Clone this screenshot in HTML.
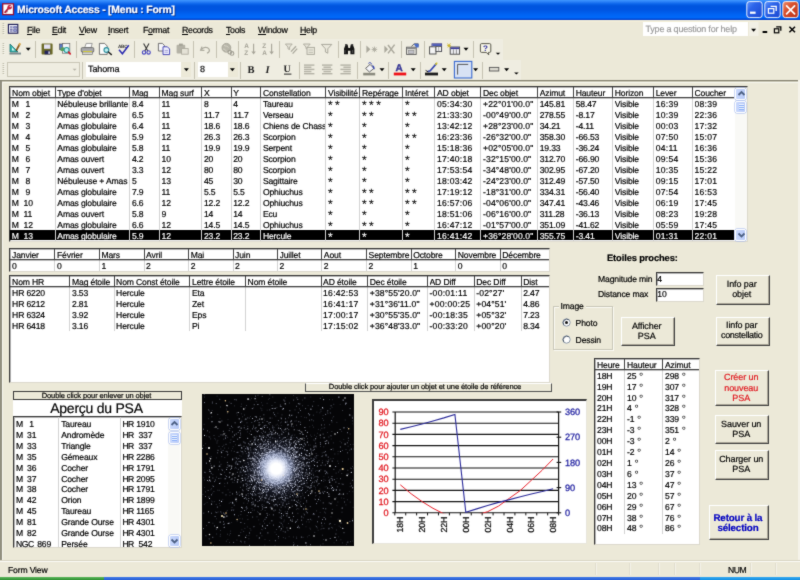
<!DOCTYPE html><html><head><meta charset="utf-8"><title>Microsoft Access</title><style>
html,body{margin:0;padding:0}
body{width:800px;height:580px;position:relative;overflow:hidden;background:#ECE9D8;
 font-family:"Liberation Sans",sans-serif;font-size:8.6px;letter-spacing:-0.15px;color:#000;text-rendering:geometricPrecision;-webkit-text-stroke:0.18px currentColor}
.a{position:absolute}
.t{position:absolute;white-space:pre;line-height:11px;height:11px;margin-top:1px}
.lb{position:absolute;background:#fff;border:1px solid #383838;border-right-color:#dcd9cc;border-bottom-color:#dcd9cc;box-sizing:border-box;overflow:hidden;box-shadow:inset 1px 1px 0 rgba(60,60,60,.38)}
.vl{position:absolute;width:1px;background:#d2d2d2}
.hv{position:absolute;width:1px;background:#404040}
.hl{position:absolute;height:1px;background:#404040;box-shadow:0 1px 0 rgba(60,60,60,.3)}
.btn{position:absolute;box-sizing:border-box;background:#ECE9D8;border:1px solid #fff;border-right-color:#404040;border-bottom-color:#404040;box-shadow:inset -1px -1px 0 #aca899;text-align:center}
.sep{position:absolute;width:1px;background:#c5c2b2}
.mn{position:absolute;top:23.5px;height:12px;line-height:12px;font-size:8.8px;letter-spacing:-0.3px;white-space:pre}
.mn u{text-decoration:underline}
</style></head><body><svg width="0" height="0" style="position:absolute"><filter id="soft" x="0" y="0" width="100%" height="100%" color-interpolation-filters="sRGB"><feConvolveMatrix order="3" kernelMatrix="0.02 0.08 0.02 0.08 0.6 0.08 0.02 0.08 0.02" edgeMode="duplicate" preserveAlpha="true"/></filter></svg><div id="w" style="position:absolute;left:0;top:0;width:800px;height:580px;overflow:hidden;background:#ECE9D8;will-change:transform;filter:url(#soft)">
<div class="a" style="left:0;top:0;width:800px;height:20px;background:linear-gradient(#3f97ff 0%,#2c82f8 8%,#0a63ea 20%,#0054de 30%,#0055e2 50%,#0063f2 72%,#0069fa 87%,#0058e6 93%,#0032c2 100%)"></div>
<div class="a" style="left:0px;top:20px;width:800px;height:1px;background:#f7f0d6;"></div>
<div class="a" style="left:0px;top:21px;width:800px;height:1px;background:#f1ecd8;"></div>
<div class="t" style="left:17px;top:3px;color:#fff;font-weight:bold;font-size:10.4px;line-height:14px;height:14px;letter-spacing:-0.2px;text-shadow:1px 1px 0 #0a2a80">Microsoft Access - [Menu : Form]</div>
<!--TITLEICONS-->
<div class="mn" style="left:27px"><u>F</u>ile</div>
<div class="mn" style="left:52px"><u>E</u>dit</div>
<div class="mn" style="left:79px"><u>V</u>iew</div>
<div class="mn" style="left:108px"><u>I</u>nsert</div>
<div class="mn" style="left:143px">F<u>o</u>rmat</div>
<div class="mn" style="left:182px"><u>R</u>ecords</div>
<div class="mn" style="left:226px"><u>T</u>ools</div>
<div class="mn" style="left:258px"><u>W</u>indow</div>
<div class="mn" style="left:300px"><u>H</u>elp</div>
<div class="a" style="left:643px;top:22px;width:105px;height:14px;background:#fff"></div>
<div class="t" style="left:645.5px;top:23px;color:#999;font-size:9px;line-height:11px;letter-spacing:-0.2px">Type a question for help</div>
<!--MENUICONS-->
<div class="a" style="left:0px;top:39px;width:503px;height:21px;background:#efede1;"></div>
<div class="a" style="left:0px;top:60px;width:521px;height:20px;background:#efede1;"></div>
<div class="sep" style="left:35px;top:41px;height:17px"></div>
<div class="sep" style="left:76px;top:41px;height:17px"></div>
<div class="sep" style="left:134px;top:41px;height:17px"></div>
<div class="sep" style="left:193px;top:41px;height:17px"></div>
<div class="sep" style="left:216px;top:41px;height:17px"></div>
<div class="sep" style="left:238px;top:41px;height:17px"></div>
<div class="sep" style="left:279px;top:41px;height:17px"></div>
<div class="sep" style="left:338px;top:41px;height:17px"></div>
<div class="sep" style="left:360px;top:41px;height:17px"></div>
<div class="sep" style="left:401px;top:41px;height:17px"></div>
<div class="sep" style="left:424px;top:41px;height:17px"></div>
<div class="sep" style="left:473px;top:41px;height:17px"></div>
<div class="sep" style="left:82px;top:62px;height:17px"></div>
<div class="sep" style="left:194px;top:62px;height:17px"></div>
<div class="sep" style="left:240px;top:62px;height:17px"></div>
<div class="sep" style="left:299px;top:62px;height:17px"></div>
<div class="sep" style="left:357px;top:62px;height:17px"></div>
<div class="sep" style="left:388px;top:62px;height:17px"></div>
<div class="sep" style="left:420px;top:62px;height:17px"></div>
<div class="sep" style="left:482px;top:62px;height:17px"></div>
<div class="a" style="left:7px;top:62px;width:73px;height:15px;box-sizing:border-box;border:1px solid #c9c6b6"></div>
<div class="a" style="left:86px;top:62px;width:105px;height:15px;background:#fff"></div>
<div class="a" style="left:181px;top:62px;width:10px;height:15px;background:#ECE9D8;"></div>
<div class="t" style="left:88px;top:63px;font-size:9px;letter-spacing:-0.1px">Tahoma</div>
<div class="a" style="left:198px;top:62px;width:40px;height:15px;background:#fff"></div>
<div class="a" style="left:228px;top:62px;width:10px;height:15px;background:#ECE9D8;"></div>
<div class="t" style="left:200px;top:63px;font-size:9px">8</div>
<svg class="a" style="left:0;top:0" width="800" height="82" viewBox="0 0 800 82" font-family="Liberation Sans"><rect x="2.7" y="3.8" width="10.8" height="10.8" fill="#fff" stroke="#9c1030" stroke-width="1.3"/><path d="M5 12.2L8.2 8.6" stroke="#b01838" stroke-width="1.7" stroke-linecap="round"/><circle cx="9.6" cy="7.2" r="2.2" fill="#c8203c"/><circle cx="10.2" cy="6.6" r="0.7" fill="#fff"/><path d="M5.2 12.6l1.4 0.2M6.4 11.2l1.3 0.6" stroke="#8a1028" stroke-width="0.8"/><defs><linearGradient id="gb" x1="0" y1="0" x2="1" y2="1"><stop offset="0" stop-color="#5f94fc"/><stop offset="0.35" stop-color="#2c64ea"/><stop offset="1" stop-color="#1c48d0"/></linearGradient><linearGradient id="gr" x1="0" y1="0" x2="1" y2="1"><stop offset="0" stop-color="#ee8c6c"/><stop offset="0.4" stop-color="#d8502c"/><stop offset="1" stop-color="#b83018"/></linearGradient></defs><rect x="746.8" y="1.6" width="15.4" height="16" rx="2.6" fill="url(#gb)" stroke="#fff" stroke-width="0.9"/><rect x="764.8" y="1.6" width="15.4" height="16" rx="2.6" fill="url(#gb)" stroke="#fff" stroke-width="0.9"/><rect x="782.8" y="1.6" width="15.4" height="16" rx="2.6" fill="url(#gr)" stroke="#fff" stroke-width="0.9"/><rect x="750" y="11.6" width="5.6" height="2.2" fill="#fff"/><path d="M770.6 6.4h5.6v4.6" fill="none" stroke="#fff" stroke-width="1.3"/><rect x="768.4" y="8.6" width="5.4" height="4.6" fill="none" stroke="#fff" stroke-width="1.2"/><path d="M786.6 5.8l8 8M794.6 5.8l-8 8" stroke="#fff" stroke-width="1.7" stroke-linecap="round"/><rect x="2.6" y="23" width="1.6" height="1" fill="#b9b6a4"/><rect x="3.5" y="23.8" width="1.2" height="0.8" fill="#fbfaf5"/><rect x="2.6" y="25" width="1.6" height="1" fill="#b9b6a4"/><rect x="3.5" y="25.8" width="1.2" height="0.8" fill="#fbfaf5"/><rect x="2.6" y="27" width="1.6" height="1" fill="#b9b6a4"/><rect x="3.5" y="27.8" width="1.2" height="0.8" fill="#fbfaf5"/><rect x="2.6" y="29" width="1.6" height="1" fill="#b9b6a4"/><rect x="3.5" y="29.8" width="1.2" height="0.8" fill="#fbfaf5"/><rect x="2.6" y="31" width="1.6" height="1" fill="#b9b6a4"/><rect x="3.5" y="31.8" width="1.2" height="0.8" fill="#fbfaf5"/><rect x="2.6" y="33" width="1.6" height="1" fill="#b9b6a4"/><rect x="3.5" y="33.8" width="1.2" height="0.8" fill="#fbfaf5"/><rect x="8.4" y="24.4" width="9.4" height="8.8" fill="#eef0fa" stroke="#161650" stroke-width="1.1"/><path d="M10 27h2.6M10 29.2h2.6M10 31h2.6" stroke="#30307a" stroke-width="0.9"/><path d="M13.6 26.6h3v1.6h-3zM13.6 29.4h3v2h-3z" fill="#9aa4dc" stroke="#30307a" stroke-width="0.5"/><rect x="749" y="22" width="9.5" height="14" fill="#f2f0e6"/><path d="M751.1 28.75h5l-2.5 3z" fill="#000"/><rect x="762.6" y="31" width="4.6" height="2" fill="#000"/><path d="M776.2 26.8h4.6v4" fill="none" stroke="#000" stroke-width="1.3"/><rect x="774.4" y="28.8" width="4.4" height="4" fill="none" stroke="#000" stroke-width="1.2"/><path d="M789.4 26.8l5.6 5.4M795 26.8l-5.6 5.4" stroke="#000" stroke-width="1.5"/><rect x="2.6" y="43" width="1.6" height="1" fill="#b9b6a4"/><rect x="3.5" y="43.8" width="1.2" height="0.8" fill="#fbfaf5"/><rect x="2.6" y="45" width="1.6" height="1" fill="#b9b6a4"/><rect x="3.5" y="45.8" width="1.2" height="0.8" fill="#fbfaf5"/><rect x="2.6" y="47" width="1.6" height="1" fill="#b9b6a4"/><rect x="3.5" y="47.8" width="1.2" height="0.8" fill="#fbfaf5"/><rect x="2.6" y="49" width="1.6" height="1" fill="#b9b6a4"/><rect x="3.5" y="49.8" width="1.2" height="0.8" fill="#fbfaf5"/><rect x="2.6" y="51" width="1.6" height="1" fill="#b9b6a4"/><rect x="3.5" y="51.8" width="1.2" height="0.8" fill="#fbfaf5"/><rect x="2.6" y="53" width="1.6" height="1" fill="#b9b6a4"/><rect x="3.5" y="53.8" width="1.2" height="0.8" fill="#fbfaf5"/><path d="M10 52V44l8 8z" fill="#36b8b0" stroke="#1a6c70" stroke-width="0.8"/><path d="M12 50.4v-2.8l2.8 2.8z" fill="#e8f8f8"/><rect x="9.4" y="52.6" width="11.6" height="1.9" fill="#7d8a8c"/><path d="M16.2 50.6l3.6-6.6" stroke="#8a5a20" stroke-width="1.8"/><path d="M19 45.4l1.2-2.2" stroke="#d8a848" stroke-width="1.8"/><path d="M15.8 51.6l0.6-1.6 0.9 0.6z" fill="#222"/><path d="M25.7 47.75h5l-2.5 3z" fill="#000"/><rect x="41.6" y="43.6" width="11" height="11" rx="0.8" fill="#6c6a28"/><rect x="44" y="44.4" width="6.4" height="4.4" fill="#e4e2f4"/><rect x="44.6" y="50.6" width="5.6" height="3.8" fill="#24245c"/><rect x="48.4" y="51.4" width="1.4" height="2.4" fill="#e8e8f4"/><rect x="59.6" y="44" width="5" height="5.6" fill="#5878c8" stroke="#444" stroke-width="0.6"/><rect x="62.6" y="43.6" width="7.2" height="9.6" fill="#f4f4f8" stroke="#666" stroke-width="0.7"/><rect x="60.6" y="47.4" width="3.6" height="3.6" fill="#5aa05a"/><circle cx="66.6" cy="50" r="2.5" fill="#b8f0f0" stroke="#2a9c9c" stroke-width="1.1"/><path d="M68.6 52.2l1.6 1.6" stroke="#d02030" stroke-width="1.8" stroke-linecap="round"/><path d="M84.6 47.8l1.6-4.4h6l-1.2 4.4z" fill="#fbfbfb" stroke="#777" stroke-width="0.7"/><rect x="81.2" y="47.6" width="12.6" height="4.6" rx="1.2" fill="#a8a8ac" stroke="#555" stroke-width="0.7"/><rect x="82.6" y="52" width="9.8" height="2.6" fill="#d8d8d0" stroke="#666" stroke-width="0.6"/><rect x="83" y="51" width="9" height="0.9" fill="#d8d030"/><path d="M99.4 43.4h5.2l2.6 2.6v8.4h-7.8z" fill="#fcfcfc" stroke="#555" stroke-width="0.8"/><circle cx="106.4" cy="50" r="2.4" fill="#c0f0f0" stroke="#2a8c9c" stroke-width="1.1"/><path d="M108.4 52l3 2.6" stroke="#222" stroke-width="1.4" stroke-linecap="round"/><text x="118" y="47.6" font-size="4.6" font-weight="bold" fill="#333" letter-spacing="-0.2">ABC</text><path d="M119 49.8l3.4 4 6.4-8.6" fill="none" stroke="#2a2ab0" stroke-width="1.5"/><path d="M143.6 43.6l4.2 7.4M149 43.6l-4.2 7.4" stroke="#333" stroke-width="1.1"/><circle cx="144" cy="52.4" r="1.7" fill="none" stroke="#4444c0" stroke-width="1.1"/><circle cx="148.6" cy="52.4" r="1.7" fill="none" stroke="#4444c0" stroke-width="1.1"/><path d="M158.4 43.4h4l2 2v5.6h-6z" fill="#f6f6fa" stroke="#555" stroke-width="0.8"/><path d="M163 46.8h4.4l2.2 2.2v5.6H163z" fill="#f0f0ff" stroke="#3a3ab0" stroke-width="0.9"/><path d="M164.6 50.4h3.4M164.6 52.2h3.4" stroke="#8888c8" stroke-width="0.7"/><rect x="176.6" y="44.8" width="8.6" height="8.8" rx="1" fill="#b4b2a6"/><rect x="179" y="43.6" width="3.8" height="2.2" fill="#a4a296"/><rect x="181.6" y="48.6" width="6.6" height="5.6" fill="#e4e2d6" stroke="#a8a69a" stroke-width="0.8"/><path d="M202 46.6l-1.4 3.6 3.8 0.2" fill="none" stroke="#aaa89c" stroke-width="1.2"/><path d="M201.4 49.6c1.8-2.6 5.8-3.2 7.6-0.6 1 1.6 0 3.6-2 4.2" fill="none" stroke="#aaa89c" stroke-width="1.3"/><circle cx="226.4" cy="47.8" r="4.4" fill="#b8b6aa" stroke="#a09e92" stroke-width="0.8"/><path d="M224 45.4c1.6 1 3.6 0.4 4.4 2.2M223 49c1.8-0.2 3 1.2 3.2 2.6" stroke="#d8d6ca" stroke-width="0.9" fill="none"/><circle cx="229.8" cy="52.2" r="1.8" fill="none" stroke="#a09e92" stroke-width="1.1"/><circle cx="232" cy="53.4" r="1.8" fill="none" stroke="#a09e92" stroke-width="1.1"/><text x="244.2" y="48.4" font-size="6.4" font-weight="bold" fill="#a6a498">A</text><text x="244.2" y="54.6" font-size="6.4" font-weight="bold" fill="#a6a498">Z</text><path d="M253.6 43.8v9" stroke="#a6a498" stroke-width="1.1"/><path d="M251.39999999999998 51.4h4.4l-2.2 3.2z" fill="#a6a498"/><text x="262.2" y="48.4" font-size="6.4" font-weight="bold" fill="#a6a498">Z</text><text x="262.2" y="54.6" font-size="6.4" font-weight="bold" fill="#a6a498">A</text><path d="M271.59999999999997 43.8v9" stroke="#a6a498" stroke-width="1.1"/><path d="M269.4 51.4h4.4l-2.2 3.2z" fill="#a6a498"/><path d="M285.4 44h6.8l-2.6 3v2.6l-1.6-0.8v-1.8z" fill="#e6e4d8" stroke="#aaa89c" stroke-width="0.9"/><path d="M291 51.6l5-5.4M292.6 53.6l4.6-5" stroke="#aaa89c" stroke-width="1.3"/><path d="M303.4 44h6.8l-2.6 3v2.2l-1.6-0.6v-1.6z" fill="#e6e4d8" stroke="#aaa89c" stroke-width="0.9"/><rect x="307" y="47.4" width="7.4" height="7" fill="#e8e6da" stroke="#aaa89c" stroke-width="0.9"/><path d="M308.6 50h4.4M308.6 52.4h4.4" stroke="#b8b6aa" stroke-width="0.8"/><path d="M321.4 44.4h10.4l-4 4.4v4.4l-2.4-1.2v-3.2z" fill="#eae8dc" stroke="#aaa89c" stroke-width="1"/><path d="M344 54.2v-5.4l1.6-4.2h2l0.8 3.4h1.6l0.8-3.4h2l1.6 4.2v5.4h-4v-3.4h-2.4v3.4z" fill="#161616"/><rect x="345.2" y="44" width="1.8" height="1.4" fill="#444"/><rect x="351.4" y="44" width="1.8" height="1.4" fill="#444"/><path d="M345 50v3M352.6 50v3" stroke="#5a5a5a" stroke-width="0.8"/><path d="M366.4 45.4v7.6l4-3.8z" fill="#aaa89c"/><path d="M374.4 46.6v5.6M371.6 49.4h5.6M372.4 47.4l4 4M376.4 47.4l-4 4" stroke="#aaa89c" stroke-width="0.9"/><path d="M384.4 45.4v7.6l3.6-3.8z" fill="#aaa89c"/><path d="M388 45l6.4 8.4M394.6 44.6l-6.6 8.8" stroke="#aaa89c" stroke-width="1.5"/><rect x="406.6" y="47.2" width="9.6" height="7.2" fill="#ecebe4" stroke="#555" stroke-width="0.9"/><rect x="407.2" y="47.6" width="8.6" height="1.6" fill="#888"/><rect x="408.4" y="50.4" width="5.6" height="3" fill="#c0c0c8" stroke="#777" stroke-width="0.5"/><path d="M411.4 46.4l3-2.6h3.8v2.8" fill="none" stroke="#555" stroke-width="0.9"/><path d="M413.6 43.8h5v3.6h-2.4z" fill="#4a6cc8"/><rect x="432" y="43.8" width="9.6" height="7.4" fill="#f4f4fa" stroke="#3a3a8a" stroke-width="0.9"/><rect x="432.4" y="44.2" width="8.8" height="1.7" fill="#3a4ab0"/><rect x="429.6" y="46.8" width="6.4" height="7.2" fill="#f4f4f4" stroke="#444" stroke-width="0.9"/><rect x="436" y="46.6" width="5.4" height="5" fill="#fafafa" stroke="#444" stroke-width="0.8"/><path d="M438.7 46.6v5" stroke="#777" stroke-width="0.6"/><rect x="450.2" y="47" width="9.4" height="7.2" fill="#f0f0f4" stroke="#444" stroke-width="0.9"/><rect x="450.6" y="47.4" width="8.6" height="1.7" fill="#3a3a9a"/><path d="M453.4 49.4v4.6M456.4 49.4v4.6" stroke="#666" stroke-width="0.7"/><path d="M447.6 43.6l2.4 3.8M450.4 43.4l-2.6 4M447.2 45.6h3.6" stroke="#c8b020" stroke-width="0.9"/><path d="M463.5 47.75h5l-2.5 3z" fill="#000"/><path d="M481.6 43.6h8a1.2 1.2 0 0 1 1.2 1.2v6.4a1.2 1.2 0 0 1-1.2 1.2h-1.2l0.4 2.4-2.6-2.4h-4.6a1.2 1.2 0 0 1-1.2-1.2v-6.4a1.2 1.2 0 0 1 1.2-1.2z" fill="#f6f4e6" stroke="#4a483c" stroke-width="0.9"/><text x="483" y="51.4" font-size="8" font-weight="bold" fill="#3030a0">?</text><path d="M495.7 52.65h4.6l-2.3 2.0z" fill="#000"/><rect x="2.6" y="63" width="1.6" height="1" fill="#b9b6a4"/><rect x="3.5" y="63.8" width="1.2" height="0.8" fill="#fbfaf5"/><rect x="2.6" y="65" width="1.6" height="1" fill="#b9b6a4"/><rect x="3.5" y="65.8" width="1.2" height="0.8" fill="#fbfaf5"/><rect x="2.6" y="67" width="1.6" height="1" fill="#b9b6a4"/><rect x="3.5" y="67.8" width="1.2" height="0.8" fill="#fbfaf5"/><rect x="2.6" y="69" width="1.6" height="1" fill="#b9b6a4"/><rect x="3.5" y="69.8" width="1.2" height="0.8" fill="#fbfaf5"/><rect x="2.6" y="71" width="1.6" height="1" fill="#b9b6a4"/><rect x="3.5" y="71.8" width="1.2" height="0.8" fill="#fbfaf5"/><rect x="2.6" y="73" width="1.6" height="1" fill="#b9b6a4"/><rect x="3.5" y="73.8" width="1.2" height="0.8" fill="#fbfaf5"/><path d="M72.6 68.65h4l-2.0 2z" fill="#b4b2a6"/><path d="M183.9 68.15h5l-2.5 3z" fill="#000"/><path d="M229.9 68.15h5l-2.5 3z" fill="#000"/><text x="247.6" y="73" font-size="10.5" font-weight="bold" font-family="Liberation Serif" fill="#222">B</text><text x="265.6" y="73" font-size="10.5" font-weight="bold" font-style="italic" font-family="Liberation Serif" fill="#222">I</text><text x="283.6" y="72.4" font-size="10" font-weight="bold" font-family="Liberation Serif" fill="#222">U</text><rect x="284" y="73.6" width="7.4" height="1" fill="#222"/><rect x="304" y="64.4" width="10.4" height="1.4" fill="#b4b2a6"/><rect x="304" y="66.55000000000001" width="7.4" height="1.4" fill="#b4b2a6"/><rect x="304" y="68.7" width="10.4" height="1.4" fill="#b4b2a6"/><rect x="304" y="70.85000000000001" width="7.4" height="1.4" fill="#b4b2a6"/><rect x="304" y="73.0" width="10.4" height="1.4" fill="#b4b2a6"/><rect x="322.0" y="64.4" width="10.4" height="1.4" fill="#b4b2a6"/><rect x="323.5" y="66.55000000000001" width="7.4" height="1.4" fill="#b4b2a6"/><rect x="322.0" y="68.7" width="10.4" height="1.4" fill="#b4b2a6"/><rect x="323.5" y="70.85000000000001" width="7.4" height="1.4" fill="#b4b2a6"/><rect x="322.0" y="73.0" width="10.4" height="1.4" fill="#b4b2a6"/><rect x="340.4" y="64.4" width="10.4" height="1.4" fill="#b4b2a6"/><rect x="343.4" y="66.55000000000001" width="7.4" height="1.4" fill="#b4b2a6"/><rect x="340.4" y="68.7" width="10.4" height="1.4" fill="#b4b2a6"/><rect x="343.4" y="70.85000000000001" width="7.4" height="1.4" fill="#b4b2a6"/><rect x="340.4" y="73.0" width="10.4" height="1.4" fill="#b4b2a6"/><path d="M365.6 68.4l4.4-4 4 4-4.6 3.6z" fill="#f4f4f8" stroke="#444" stroke-width="0.8"/><path d="M368.4 63.4c1-1.4 3-0.8 3.2 1" fill="none" stroke="#3a4ab0" stroke-width="1"/><path d="M372 65c1.6 0.2 3 2 2.6 4.400l-1.400-0.600z" fill="#3a4ab0"/><rect x="363.200" y="72.8" width="12" height="2.6" fill="#8a8a7e"/><path d="M379.5 68.15h5l-2.5 3z" fill="#000"/><text x="395.4" y="71.4" font-size="10" font-weight="bold" fill="#3a3aa0" stroke="#22227a" stroke-width="0.3">A</text><rect x="393.800" y="72.6" width="12.4" height="2.8" fill="#f01018"/><path d="M410.7 68.15h5l-2.5 3z" fill="#000"/><path d="M427.6 71.600l2.6-0.800 6.400-7.400" fill="none" stroke="#3a4ab0" stroke-width="1.700"/><path d="M435.400 64.800l1.800-2.200" stroke="#d8c820" stroke-width="1.5"/><path d="M425.6 70.4l2.4 1.400" stroke="#222" stroke-width="1"/><rect x="425" y="72.6" width="13" height="2.8" fill="#1c1c1c"/><path d="M441.7 68.15h5l-2.5 3z" fill="#000"/><rect x="454.400" y="61.4" width="17.400" height="16.600" fill="#d8e2f4" stroke="#3a6ad0" stroke-width="1.100"/><path d="M457.600 74.600v-10.200h10.600" fill="none" stroke="#555" stroke-width="1"/><path d="M473.1 68.15h5l-2.5 3z" fill="#000"/><rect x="489.400" y="67.400" width="9.400" height="3.600" fill="#dcdad0" stroke="#555" stroke-width="0.900"/><path d="M504.1 68.15h5l-2.5 3z" fill="#000"/><path d="M514.1 72.45h4.6l-2.3 2.0z" fill="#000"/></svg>
<div class="a" style="left:0px;top:80px;width:799px;height:1px;background:#858371;"></div>
<div class="a" style="left:0px;top:81px;width:799px;height:1px;background:#c9c6b4;"></div>
<div class="a" style="left:2px;top:82px;width:797px;height:1px;background:#f7f6ee;"></div>
<div class="a" style="left:0px;top:81px;width:2px;height:479px;background:#929080;"></div>
<div class="a" style="left:2px;top:82px;width:1px;height:478px;background:#f8f7f0;"></div>
<div class="a" style="left:798px;top:80px;width:2px;height:481px;background:#f5f3ea;"></div>
<div class="lb" style="left:9px;top:86px;width:739px;height:156px"></div>
<div class="a" style="left:10px;top:229.7px;width:723.8px;height:10.3px;background:#000;"></div>
<div class="hv" style="left:54.7px;top:87px;height:10px"></div>
<div class="vl" style="left:54.7px;top:98px;height:143px"></div>
<div class="hv" style="left:129.3px;top:87px;height:10px"></div>
<div class="vl" style="left:129.3px;top:98px;height:143px"></div>
<div class="hv" style="left:159px;top:87px;height:10px"></div>
<div class="vl" style="left:159px;top:98px;height:143px"></div>
<div class="hv" style="left:201.3px;top:87px;height:10px"></div>
<div class="vl" style="left:201.3px;top:98px;height:143px"></div>
<div class="hv" style="left:230.6px;top:87px;height:10px"></div>
<div class="vl" style="left:230.6px;top:98px;height:143px"></div>
<div class="hv" style="left:260.3px;top:87px;height:10px"></div>
<div class="vl" style="left:260.3px;top:98px;height:143px"></div>
<div class="hv" style="left:325.4px;top:87px;height:10px"></div>
<div class="vl" style="left:325.4px;top:98px;height:143px"></div>
<div class="hv" style="left:359.4px;top:87px;height:10px"></div>
<div class="vl" style="left:359.4px;top:98px;height:143px"></div>
<div class="hv" style="left:402.3px;top:87px;height:10px"></div>
<div class="vl" style="left:402.3px;top:98px;height:143px"></div>
<div class="hv" style="left:434.4px;top:87px;height:10px"></div>
<div class="vl" style="left:434.4px;top:98px;height:143px"></div>
<div class="hv" style="left:480.4px;top:87px;height:10px"></div>
<div class="vl" style="left:480.4px;top:98px;height:143px"></div>
<div class="hv" style="left:537.1px;top:87px;height:10px"></div>
<div class="vl" style="left:537.1px;top:98px;height:143px"></div>
<div class="hv" style="left:573.1px;top:87px;height:10px"></div>
<div class="vl" style="left:573.1px;top:98px;height:143px"></div>
<div class="hv" style="left:612.2px;top:87px;height:10px"></div>
<div class="vl" style="left:612.2px;top:98px;height:143px"></div>
<div class="hv" style="left:653.1px;top:87px;height:10px"></div>
<div class="vl" style="left:653.1px;top:98px;height:143px"></div>
<div class="hv" style="left:691.9px;top:87px;height:10px"></div>
<div class="vl" style="left:691.9px;top:98px;height:143px"></div>
<div class="hl" style="left:10px;top:97px;width:724px"></div>
<div class="t" style="left:12.1px;top:87px;width:42.6px;overflow:hidden">Nom objet</div>
<div class="t" style="left:57.3px;top:87px;width:72.0px;overflow:hidden">Type d'objet</div>
<div class="t" style="left:131.9px;top:87px;width:27.1px;overflow:hidden">Mag</div>
<div class="t" style="left:161.6px;top:87px;width:39.7px;overflow:hidden">Mag surf</div>
<div class="t" style="left:203.9px;top:87px;width:26.7px;overflow:hidden">X</div>
<div class="t" style="left:233.2px;top:87px;width:27.1px;overflow:hidden">Y</div>
<div class="t" style="left:262.9px;top:87px;width:62.5px;overflow:hidden">Constellation</div>
<div class="t" style="left:328.0px;top:87px;width:31.4px;overflow:hidden">Visibilité</div>
<div class="t" style="left:362.0px;top:87px;width:40.3px;overflow:hidden">Repérage</div>
<div class="t" style="left:404.9px;top:87px;width:29.5px;overflow:hidden">Intéret</div>
<div class="t" style="left:437.0px;top:87px;width:43.4px;overflow:hidden">AD objet</div>
<div class="t" style="left:483.0px;top:87px;width:54.1px;overflow:hidden">Dec objet</div>
<div class="t" style="left:539.7px;top:87px;width:33.4px;overflow:hidden">Azimut</div>
<div class="t" style="left:575.7px;top:87px;width:36.5px;overflow:hidden">Hauteur</div>
<div class="t" style="left:614.8px;top:87px;width:38.3px;overflow:hidden">Horizon</div>
<div class="t" style="left:655.7px;top:87px;width:36.2px;overflow:hidden">Lever</div>
<div class="t" style="left:694.5px;top:87px;width:39.9px;overflow:hidden">Coucher</div>
<div class="t" style="left:11.7px;top:98px;letter-spacing:-1px">M</div>
<div class="t" style="left:25.6px;top:98px;">1</div>
<div class="t" style="left:57.3px;top:98px;width:72.0px;overflow:hidden">Nébuleuse brillante</div>
<div class="t" style="left:131.9px;top:98px;width:27.1px;overflow:hidden">8.4</div>
<div class="t" style="left:161.6px;top:98px;width:39.7px;overflow:hidden">11</div>
<div class="t" style="left:203.9px;top:98px;width:26.7px;overflow:hidden">8</div>
<div class="t" style="left:233.2px;top:98px;width:27.1px;overflow:hidden">4</div>
<div class="t" style="left:262.9px;top:98px;width:62.5px;overflow:hidden">Taureau</div>
<div class="t" style="left:328.0px;top:98px;width:31.4px;overflow:hidden"><span style="font-size:12px;letter-spacing:2.45px;-webkit-text-stroke:0.1px currentColor;position:relative;top:0.6px">**</span></div>
<div class="t" style="left:362.0px;top:98px;width:40.3px;overflow:hidden"><span style="font-size:12px;letter-spacing:2.45px;-webkit-text-stroke:0.1px currentColor;position:relative;top:0.6px">***</span></div>
<div class="t" style="left:404.9px;top:98px;width:29.5px;overflow:hidden"><span style="font-size:12px;letter-spacing:2.45px;-webkit-text-stroke:0.1px currentColor;position:relative;top:0.6px">*</span></div>
<div class="t" style="left:437.0px;top:98px;letter-spacing:0.25px;width:43.4px;overflow:hidden">05:34:30</div>
<div class="t" style="left:483.0px;top:98px;letter-spacing:0.12px;width:54.1px;overflow:hidden">+22°01'00.0"</div>
<div class="t" style="left:539.7px;top:98px;width:33.4px;overflow:hidden">145.81</div>
<div class="t" style="left:575.7px;top:98px;width:36.5px;overflow:hidden">58.47</div>
<div class="t" style="left:614.8px;top:98px;width:38.3px;overflow:hidden">Visible</div>
<div class="t" style="left:655.7px;top:98px;letter-spacing:0.25px;width:36.2px;overflow:hidden">16:39</div>
<div class="t" style="left:694.5px;top:98px;letter-spacing:0.25px;width:39.9px;overflow:hidden">08:39</div>
<div class="t" style="left:11.7px;top:109px;letter-spacing:-1px">M</div>
<div class="t" style="left:25.6px;top:109px;">2</div>
<div class="t" style="left:57.3px;top:109px;width:72.0px;overflow:hidden">Amas globulaire</div>
<div class="t" style="left:131.9px;top:109px;width:27.1px;overflow:hidden">6.5</div>
<div class="t" style="left:161.6px;top:109px;width:39.7px;overflow:hidden">11</div>
<div class="t" style="left:203.9px;top:109px;width:26.7px;overflow:hidden">11.7</div>
<div class="t" style="left:233.2px;top:109px;width:27.1px;overflow:hidden">11.7</div>
<div class="t" style="left:262.9px;top:109px;width:62.5px;overflow:hidden">Verseau</div>
<div class="t" style="left:328.0px;top:109px;width:31.4px;overflow:hidden"><span style="font-size:12px;letter-spacing:2.45px;-webkit-text-stroke:0.1px currentColor;position:relative;top:0.6px">*</span></div>
<div class="t" style="left:362.0px;top:109px;width:40.3px;overflow:hidden"><span style="font-size:12px;letter-spacing:2.45px;-webkit-text-stroke:0.1px currentColor;position:relative;top:0.6px">**</span></div>
<div class="t" style="left:404.9px;top:109px;width:29.5px;overflow:hidden"><span style="font-size:12px;letter-spacing:2.45px;-webkit-text-stroke:0.1px currentColor;position:relative;top:0.6px">**</span></div>
<div class="t" style="left:437.0px;top:109px;letter-spacing:0.25px;width:43.4px;overflow:hidden">21:33:30</div>
<div class="t" style="left:483.0px;top:109px;letter-spacing:0.12px;width:54.1px;overflow:hidden">-00°49'00.0"</div>
<div class="t" style="left:539.7px;top:109px;width:33.4px;overflow:hidden">278.55</div>
<div class="t" style="left:575.7px;top:109px;width:36.5px;overflow:hidden">-8.17</div>
<div class="t" style="left:614.8px;top:109px;width:38.3px;overflow:hidden">Visible</div>
<div class="t" style="left:655.7px;top:109px;letter-spacing:0.25px;width:36.2px;overflow:hidden">10:39</div>
<div class="t" style="left:694.5px;top:109px;letter-spacing:0.25px;width:39.9px;overflow:hidden">22:36</div>
<div class="t" style="left:11.7px;top:120px;letter-spacing:-1px">M</div>
<div class="t" style="left:25.6px;top:120px;">3</div>
<div class="t" style="left:57.3px;top:120px;width:72.0px;overflow:hidden">Amas globulaire</div>
<div class="t" style="left:131.9px;top:120px;width:27.1px;overflow:hidden">6.4</div>
<div class="t" style="left:161.6px;top:120px;width:39.7px;overflow:hidden">11</div>
<div class="t" style="left:203.9px;top:120px;width:26.7px;overflow:hidden">18.6</div>
<div class="t" style="left:233.2px;top:120px;width:27.1px;overflow:hidden">18.6</div>
<div class="t" style="left:262.9px;top:120px;width:62.5px;overflow:hidden">Chiens de Chass</div>
<div class="t" style="left:328.0px;top:120px;width:31.4px;overflow:hidden"><span style="font-size:12px;letter-spacing:2.45px;-webkit-text-stroke:0.1px currentColor;position:relative;top:0.6px">*</span></div>
<div class="t" style="left:362.0px;top:120px;width:40.3px;overflow:hidden"><span style="font-size:12px;letter-spacing:2.45px;-webkit-text-stroke:0.1px currentColor;position:relative;top:0.6px">*</span></div>
<div class="t" style="left:404.9px;top:120px;width:29.5px;overflow:hidden"><span style="font-size:12px;letter-spacing:2.45px;-webkit-text-stroke:0.1px currentColor;position:relative;top:0.6px">*</span></div>
<div class="t" style="left:437.0px;top:120px;letter-spacing:0.25px;width:43.4px;overflow:hidden">13:42:12</div>
<div class="t" style="left:483.0px;top:120px;letter-spacing:0.12px;width:54.1px;overflow:hidden">+28°23'00.0"</div>
<div class="t" style="left:539.7px;top:120px;width:33.4px;overflow:hidden">34.21</div>
<div class="t" style="left:575.7px;top:120px;width:36.5px;overflow:hidden">-4.11</div>
<div class="t" style="left:614.8px;top:120px;width:38.3px;overflow:hidden">Visible</div>
<div class="t" style="left:655.7px;top:120px;letter-spacing:0.25px;width:36.2px;overflow:hidden">00:03</div>
<div class="t" style="left:694.5px;top:120px;letter-spacing:0.25px;width:39.9px;overflow:hidden">17:32</div>
<div class="t" style="left:11.7px;top:131px;letter-spacing:-1px">M</div>
<div class="t" style="left:25.6px;top:131px;">4</div>
<div class="t" style="left:57.3px;top:131px;width:72.0px;overflow:hidden">Amas globulaire</div>
<div class="t" style="left:131.9px;top:131px;width:27.1px;overflow:hidden">5.9</div>
<div class="t" style="left:161.6px;top:131px;width:39.7px;overflow:hidden">12</div>
<div class="t" style="left:203.9px;top:131px;width:26.7px;overflow:hidden">26.3</div>
<div class="t" style="left:233.2px;top:131px;width:27.1px;overflow:hidden">26.3</div>
<div class="t" style="left:262.9px;top:131px;width:62.5px;overflow:hidden">Scorpion</div>
<div class="t" style="left:328.0px;top:131px;width:31.4px;overflow:hidden"><span style="font-size:12px;letter-spacing:2.45px;-webkit-text-stroke:0.1px currentColor;position:relative;top:0.6px">*</span></div>
<div class="t" style="left:362.0px;top:131px;width:40.3px;overflow:hidden"><span style="font-size:12px;letter-spacing:2.45px;-webkit-text-stroke:0.1px currentColor;position:relative;top:0.6px">*</span></div>
<div class="t" style="left:404.9px;top:131px;width:29.5px;overflow:hidden"><span style="font-size:12px;letter-spacing:2.45px;-webkit-text-stroke:0.1px currentColor;position:relative;top:0.6px">**</span></div>
<div class="t" style="left:437.0px;top:131px;letter-spacing:0.25px;width:43.4px;overflow:hidden">16:23:36</div>
<div class="t" style="left:483.0px;top:131px;letter-spacing:0.12px;width:54.1px;overflow:hidden">-26°32'00.0"</div>
<div class="t" style="left:539.7px;top:131px;width:33.4px;overflow:hidden">358.30</div>
<div class="t" style="left:575.7px;top:131px;width:36.5px;overflow:hidden">-66.53</div>
<div class="t" style="left:614.8px;top:131px;width:38.3px;overflow:hidden">Visible</div>
<div class="t" style="left:655.7px;top:131px;letter-spacing:0.25px;width:36.2px;overflow:hidden">07:50</div>
<div class="t" style="left:694.5px;top:131px;letter-spacing:0.25px;width:39.9px;overflow:hidden">15:07</div>
<div class="t" style="left:11.7px;top:142px;letter-spacing:-1px">M</div>
<div class="t" style="left:25.6px;top:142px;">5</div>
<div class="t" style="left:57.3px;top:142px;width:72.0px;overflow:hidden">Amas globulaire</div>
<div class="t" style="left:131.9px;top:142px;width:27.1px;overflow:hidden">5.8</div>
<div class="t" style="left:161.6px;top:142px;width:39.7px;overflow:hidden">11</div>
<div class="t" style="left:203.9px;top:142px;width:26.7px;overflow:hidden">19.9</div>
<div class="t" style="left:233.2px;top:142px;width:27.1px;overflow:hidden">19.9</div>
<div class="t" style="left:262.9px;top:142px;width:62.5px;overflow:hidden">Serpent</div>
<div class="t" style="left:328.0px;top:142px;width:31.4px;overflow:hidden"><span style="font-size:12px;letter-spacing:2.45px;-webkit-text-stroke:0.1px currentColor;position:relative;top:0.6px">*</span></div>
<div class="t" style="left:362.0px;top:142px;width:40.3px;overflow:hidden"><span style="font-size:12px;letter-spacing:2.45px;-webkit-text-stroke:0.1px currentColor;position:relative;top:0.6px">*</span></div>
<div class="t" style="left:404.9px;top:142px;width:29.5px;overflow:hidden"><span style="font-size:12px;letter-spacing:2.45px;-webkit-text-stroke:0.1px currentColor;position:relative;top:0.6px">*</span></div>
<div class="t" style="left:437.0px;top:142px;letter-spacing:0.25px;width:43.4px;overflow:hidden">15:18:36</div>
<div class="t" style="left:483.0px;top:142px;letter-spacing:0.12px;width:54.1px;overflow:hidden">+02°05'00.0"</div>
<div class="t" style="left:539.7px;top:142px;width:33.4px;overflow:hidden">19.33</div>
<div class="t" style="left:575.7px;top:142px;width:36.5px;overflow:hidden">-36.24</div>
<div class="t" style="left:614.8px;top:142px;width:38.3px;overflow:hidden">Visible</div>
<div class="t" style="left:655.7px;top:142px;letter-spacing:0.25px;width:36.2px;overflow:hidden">04:11</div>
<div class="t" style="left:694.5px;top:142px;letter-spacing:0.25px;width:39.9px;overflow:hidden">16:36</div>
<div class="t" style="left:11.7px;top:153px;letter-spacing:-1px">M</div>
<div class="t" style="left:25.6px;top:153px;">6</div>
<div class="t" style="left:57.3px;top:153px;width:72.0px;overflow:hidden">Amas ouvert</div>
<div class="t" style="left:131.9px;top:153px;width:27.1px;overflow:hidden">4.2</div>
<div class="t" style="left:161.6px;top:153px;width:39.7px;overflow:hidden">10</div>
<div class="t" style="left:203.9px;top:153px;width:26.7px;overflow:hidden">20</div>
<div class="t" style="left:233.2px;top:153px;width:27.1px;overflow:hidden">20</div>
<div class="t" style="left:262.9px;top:153px;width:62.5px;overflow:hidden">Scorpion</div>
<div class="t" style="left:328.0px;top:153px;width:31.4px;overflow:hidden"><span style="font-size:12px;letter-spacing:2.45px;-webkit-text-stroke:0.1px currentColor;position:relative;top:0.6px">*</span></div>
<div class="t" style="left:362.0px;top:153px;width:40.3px;overflow:hidden"><span style="font-size:12px;letter-spacing:2.45px;-webkit-text-stroke:0.1px currentColor;position:relative;top:0.6px">*</span></div>
<div class="t" style="left:404.9px;top:153px;width:29.5px;overflow:hidden"><span style="font-size:12px;letter-spacing:2.45px;-webkit-text-stroke:0.1px currentColor;position:relative;top:0.6px">*</span></div>
<div class="t" style="left:437.0px;top:153px;letter-spacing:0.25px;width:43.4px;overflow:hidden">17:40:18</div>
<div class="t" style="left:483.0px;top:153px;letter-spacing:0.12px;width:54.1px;overflow:hidden">-32°15'00.0"</div>
<div class="t" style="left:539.7px;top:153px;width:33.4px;overflow:hidden">312.70</div>
<div class="t" style="left:575.7px;top:153px;width:36.5px;overflow:hidden">-66.90</div>
<div class="t" style="left:614.8px;top:153px;width:38.3px;overflow:hidden">Visible</div>
<div class="t" style="left:655.7px;top:153px;letter-spacing:0.25px;width:36.2px;overflow:hidden">09:54</div>
<div class="t" style="left:694.5px;top:153px;letter-spacing:0.25px;width:39.9px;overflow:hidden">15:36</div>
<div class="t" style="left:11.7px;top:164px;letter-spacing:-1px">M</div>
<div class="t" style="left:25.6px;top:164px;">7</div>
<div class="t" style="left:57.3px;top:164px;width:72.0px;overflow:hidden">Amas ouvert</div>
<div class="t" style="left:131.9px;top:164px;width:27.1px;overflow:hidden">3.3</div>
<div class="t" style="left:161.6px;top:164px;width:39.7px;overflow:hidden">12</div>
<div class="t" style="left:203.9px;top:164px;width:26.7px;overflow:hidden">80</div>
<div class="t" style="left:233.2px;top:164px;width:27.1px;overflow:hidden">80</div>
<div class="t" style="left:262.9px;top:164px;width:62.5px;overflow:hidden">Scorpion</div>
<div class="t" style="left:328.0px;top:164px;width:31.4px;overflow:hidden"><span style="font-size:12px;letter-spacing:2.45px;-webkit-text-stroke:0.1px currentColor;position:relative;top:0.6px">*</span></div>
<div class="t" style="left:362.0px;top:164px;width:40.3px;overflow:hidden"><span style="font-size:12px;letter-spacing:2.45px;-webkit-text-stroke:0.1px currentColor;position:relative;top:0.6px">*</span></div>
<div class="t" style="left:404.9px;top:164px;width:29.5px;overflow:hidden"><span style="font-size:12px;letter-spacing:2.45px;-webkit-text-stroke:0.1px currentColor;position:relative;top:0.6px">*</span></div>
<div class="t" style="left:437.0px;top:164px;letter-spacing:0.25px;width:43.4px;overflow:hidden">17:53:54</div>
<div class="t" style="left:483.0px;top:164px;letter-spacing:0.12px;width:54.1px;overflow:hidden">-34°48'00.0"</div>
<div class="t" style="left:539.7px;top:164px;width:33.4px;overflow:hidden">302.95</div>
<div class="t" style="left:575.7px;top:164px;width:36.5px;overflow:hidden">-67.20</div>
<div class="t" style="left:614.8px;top:164px;width:38.3px;overflow:hidden">Visible</div>
<div class="t" style="left:655.7px;top:164px;letter-spacing:0.25px;width:36.2px;overflow:hidden">10:35</div>
<div class="t" style="left:694.5px;top:164px;letter-spacing:0.25px;width:39.9px;overflow:hidden">15:22</div>
<div class="t" style="left:11.7px;top:175px;letter-spacing:-1px">M</div>
<div class="t" style="left:25.6px;top:175px;">8</div>
<div class="t" style="left:57.3px;top:175px;width:72.0px;overflow:hidden">Nébuleuse + Amas</div>
<div class="t" style="left:131.9px;top:175px;width:27.1px;overflow:hidden">5</div>
<div class="t" style="left:161.6px;top:175px;width:39.7px;overflow:hidden">13</div>
<div class="t" style="left:203.9px;top:175px;width:26.7px;overflow:hidden">45</div>
<div class="t" style="left:233.2px;top:175px;width:27.1px;overflow:hidden">30</div>
<div class="t" style="left:262.9px;top:175px;width:62.5px;overflow:hidden">Sagittaire</div>
<div class="t" style="left:328.0px;top:175px;width:31.4px;overflow:hidden"><span style="font-size:12px;letter-spacing:2.45px;-webkit-text-stroke:0.1px currentColor;position:relative;top:0.6px">*</span></div>
<div class="t" style="left:362.0px;top:175px;width:40.3px;overflow:hidden"><span style="font-size:12px;letter-spacing:2.45px;-webkit-text-stroke:0.1px currentColor;position:relative;top:0.6px">*</span></div>
<div class="t" style="left:404.9px;top:175px;width:29.5px;overflow:hidden"><span style="font-size:12px;letter-spacing:2.45px;-webkit-text-stroke:0.1px currentColor;position:relative;top:0.6px">*</span></div>
<div class="t" style="left:437.0px;top:175px;letter-spacing:0.25px;width:43.4px;overflow:hidden">18:03:42</div>
<div class="t" style="left:483.0px;top:175px;letter-spacing:0.12px;width:54.1px;overflow:hidden">-24°23'00.0"</div>
<div class="t" style="left:539.7px;top:175px;width:33.4px;overflow:hidden">312.49</div>
<div class="t" style="left:575.7px;top:175px;width:36.5px;overflow:hidden">-57.50</div>
<div class="t" style="left:614.8px;top:175px;width:38.3px;overflow:hidden">Visible</div>
<div class="t" style="left:655.7px;top:175px;letter-spacing:0.25px;width:36.2px;overflow:hidden">09:15</div>
<div class="t" style="left:694.5px;top:175px;letter-spacing:0.25px;width:39.9px;overflow:hidden">17:01</div>
<div class="t" style="left:11.7px;top:186px;letter-spacing:-1px">M</div>
<div class="t" style="left:25.6px;top:186px;">9</div>
<div class="t" style="left:57.3px;top:186px;width:72.0px;overflow:hidden">Amas globulaire</div>
<div class="t" style="left:131.9px;top:186px;width:27.1px;overflow:hidden">7.9</div>
<div class="t" style="left:161.6px;top:186px;width:39.7px;overflow:hidden">11</div>
<div class="t" style="left:203.9px;top:186px;width:26.7px;overflow:hidden">5.5</div>
<div class="t" style="left:233.2px;top:186px;width:27.1px;overflow:hidden">5.5</div>
<div class="t" style="left:262.9px;top:186px;width:62.5px;overflow:hidden">Ophiuchus</div>
<div class="t" style="left:328.0px;top:186px;width:31.4px;overflow:hidden"><span style="font-size:12px;letter-spacing:2.45px;-webkit-text-stroke:0.1px currentColor;position:relative;top:0.6px">*</span></div>
<div class="t" style="left:362.0px;top:186px;width:40.3px;overflow:hidden"><span style="font-size:12px;letter-spacing:2.45px;-webkit-text-stroke:0.1px currentColor;position:relative;top:0.6px">**</span></div>
<div class="t" style="left:404.9px;top:186px;width:29.5px;overflow:hidden"><span style="font-size:12px;letter-spacing:2.45px;-webkit-text-stroke:0.1px currentColor;position:relative;top:0.6px">**</span></div>
<div class="t" style="left:437.0px;top:186px;letter-spacing:0.25px;width:43.4px;overflow:hidden">17:19:12</div>
<div class="t" style="left:483.0px;top:186px;letter-spacing:0.12px;width:54.1px;overflow:hidden">-18°31'00.0"</div>
<div class="t" style="left:539.7px;top:186px;width:33.4px;overflow:hidden">334.31</div>
<div class="t" style="left:575.7px;top:186px;width:36.5px;overflow:hidden">-56.40</div>
<div class="t" style="left:614.8px;top:186px;width:38.3px;overflow:hidden">Visible</div>
<div class="t" style="left:655.7px;top:186px;letter-spacing:0.25px;width:36.2px;overflow:hidden">07:54</div>
<div class="t" style="left:694.5px;top:186px;letter-spacing:0.25px;width:39.9px;overflow:hidden">16:53</div>
<div class="t" style="left:11.7px;top:197px;letter-spacing:-1px">M</div>
<div class="t" style="left:23.6px;top:197px;">10</div>
<div class="t" style="left:57.3px;top:197px;width:72.0px;overflow:hidden">Amas globulaire</div>
<div class="t" style="left:131.9px;top:197px;width:27.1px;overflow:hidden">6.6</div>
<div class="t" style="left:161.6px;top:197px;width:39.7px;overflow:hidden">12</div>
<div class="t" style="left:203.9px;top:197px;width:26.7px;overflow:hidden">12.2</div>
<div class="t" style="left:233.2px;top:197px;width:27.1px;overflow:hidden">12.2</div>
<div class="t" style="left:262.9px;top:197px;width:62.5px;overflow:hidden">Ophiuchus</div>
<div class="t" style="left:328.0px;top:197px;width:31.4px;overflow:hidden"><span style="font-size:12px;letter-spacing:2.45px;-webkit-text-stroke:0.1px currentColor;position:relative;top:0.6px">*</span></div>
<div class="t" style="left:362.0px;top:197px;width:40.3px;overflow:hidden"><span style="font-size:12px;letter-spacing:2.45px;-webkit-text-stroke:0.1px currentColor;position:relative;top:0.6px">**</span></div>
<div class="t" style="left:404.9px;top:197px;width:29.5px;overflow:hidden"><span style="font-size:12px;letter-spacing:2.45px;-webkit-text-stroke:0.1px currentColor;position:relative;top:0.6px">**</span></div>
<div class="t" style="left:437.0px;top:197px;letter-spacing:0.25px;width:43.4px;overflow:hidden">16:57:06</div>
<div class="t" style="left:483.0px;top:197px;letter-spacing:0.12px;width:54.1px;overflow:hidden">-04°06'00.0"</div>
<div class="t" style="left:539.7px;top:197px;width:33.4px;overflow:hidden">347.41</div>
<div class="t" style="left:575.7px;top:197px;width:36.5px;overflow:hidden">-43.46</div>
<div class="t" style="left:614.8px;top:197px;width:38.3px;overflow:hidden">Visible</div>
<div class="t" style="left:655.7px;top:197px;letter-spacing:0.25px;width:36.2px;overflow:hidden">06:19</div>
<div class="t" style="left:694.5px;top:197px;letter-spacing:0.25px;width:39.9px;overflow:hidden">17:45</div>
<div class="t" style="left:11.7px;top:208px;letter-spacing:-1px">M</div>
<div class="t" style="left:23.6px;top:208px;">11</div>
<div class="t" style="left:57.3px;top:208px;width:72.0px;overflow:hidden">Amas ouvert</div>
<div class="t" style="left:131.9px;top:208px;width:27.1px;overflow:hidden">5.8</div>
<div class="t" style="left:161.6px;top:208px;width:39.7px;overflow:hidden">9</div>
<div class="t" style="left:203.9px;top:208px;width:26.7px;overflow:hidden">14</div>
<div class="t" style="left:233.2px;top:208px;width:27.1px;overflow:hidden">14</div>
<div class="t" style="left:262.9px;top:208px;width:62.5px;overflow:hidden">Ecu</div>
<div class="t" style="left:328.0px;top:208px;width:31.4px;overflow:hidden"><span style="font-size:12px;letter-spacing:2.45px;-webkit-text-stroke:0.1px currentColor;position:relative;top:0.6px">*</span></div>
<div class="t" style="left:362.0px;top:208px;width:40.3px;overflow:hidden"><span style="font-size:12px;letter-spacing:2.45px;-webkit-text-stroke:0.1px currentColor;position:relative;top:0.6px">*</span></div>
<div class="t" style="left:404.9px;top:208px;width:29.5px;overflow:hidden"><span style="font-size:12px;letter-spacing:2.45px;-webkit-text-stroke:0.1px currentColor;position:relative;top:0.6px">*</span></div>
<div class="t" style="left:437.0px;top:208px;letter-spacing:0.25px;width:43.4px;overflow:hidden">18:51:06</div>
<div class="t" style="left:483.0px;top:208px;letter-spacing:0.12px;width:54.1px;overflow:hidden">-06°16'00.0"</div>
<div class="t" style="left:539.7px;top:208px;width:33.4px;overflow:hidden">311.28</div>
<div class="t" style="left:575.7px;top:208px;width:36.5px;overflow:hidden">-36.13</div>
<div class="t" style="left:614.8px;top:208px;width:38.3px;overflow:hidden">Visible</div>
<div class="t" style="left:655.7px;top:208px;letter-spacing:0.25px;width:36.2px;overflow:hidden">08:23</div>
<div class="t" style="left:694.5px;top:208px;letter-spacing:0.25px;width:39.9px;overflow:hidden">19:28</div>
<div class="t" style="left:11.7px;top:219px;letter-spacing:-1px">M</div>
<div class="t" style="left:23.6px;top:219px;">12</div>
<div class="t" style="left:57.3px;top:219px;width:72.0px;overflow:hidden">Amas globulaire</div>
<div class="t" style="left:131.9px;top:219px;width:27.1px;overflow:hidden">6.6</div>
<div class="t" style="left:161.6px;top:219px;width:39.7px;overflow:hidden">12</div>
<div class="t" style="left:203.9px;top:219px;width:26.7px;overflow:hidden">14.5</div>
<div class="t" style="left:233.2px;top:219px;width:27.1px;overflow:hidden">14.5</div>
<div class="t" style="left:262.9px;top:219px;width:62.5px;overflow:hidden">Ophiuchus</div>
<div class="t" style="left:328.0px;top:219px;width:31.4px;overflow:hidden"><span style="font-size:12px;letter-spacing:2.45px;-webkit-text-stroke:0.1px currentColor;position:relative;top:0.6px">*</span></div>
<div class="t" style="left:362.0px;top:219px;width:40.3px;overflow:hidden"><span style="font-size:12px;letter-spacing:2.45px;-webkit-text-stroke:0.1px currentColor;position:relative;top:0.6px">**</span></div>
<div class="t" style="left:404.9px;top:219px;width:29.5px;overflow:hidden"><span style="font-size:12px;letter-spacing:2.45px;-webkit-text-stroke:0.1px currentColor;position:relative;top:0.6px">*</span></div>
<div class="t" style="left:437.0px;top:219px;letter-spacing:0.25px;width:43.4px;overflow:hidden">16:47:12</div>
<div class="t" style="left:483.0px;top:219px;letter-spacing:0.12px;width:54.1px;overflow:hidden">-01°57'00.0"</div>
<div class="t" style="left:539.7px;top:219px;width:33.4px;overflow:hidden">351.09</div>
<div class="t" style="left:575.7px;top:219px;width:36.5px;overflow:hidden">-41.62</div>
<div class="t" style="left:614.8px;top:219px;width:38.3px;overflow:hidden">Visible</div>
<div class="t" style="left:655.7px;top:219px;letter-spacing:0.25px;width:36.2px;overflow:hidden">05:59</div>
<div class="t" style="left:694.5px;top:219px;letter-spacing:0.25px;width:39.9px;overflow:hidden">17:45</div>
<div class="t" style="left:11.7px;top:230px;color:#fff;letter-spacing:-1px">M</div>
<div class="t" style="left:23.6px;top:230px;color:#fff;">13</div>
<div class="t" style="left:57.3px;top:230px;color:#fff;width:72.0px;overflow:hidden">Amas globulaire</div>
<div class="t" style="left:131.9px;top:230px;color:#fff;width:27.1px;overflow:hidden">5.9</div>
<div class="t" style="left:161.6px;top:230px;color:#fff;width:39.7px;overflow:hidden">12</div>
<div class="t" style="left:203.9px;top:230px;color:#fff;width:26.7px;overflow:hidden">23.2</div>
<div class="t" style="left:233.2px;top:230px;color:#fff;width:27.1px;overflow:hidden">23.2</div>
<div class="t" style="left:262.9px;top:230px;color:#fff;width:62.5px;overflow:hidden">Hercule</div>
<div class="t" style="left:328.0px;top:230px;color:#fff;width:31.4px;overflow:hidden"><span style="font-size:12px;letter-spacing:2.45px;-webkit-text-stroke:0.1px currentColor;position:relative;top:0.6px">*</span></div>
<div class="t" style="left:362.0px;top:230px;color:#fff;width:40.3px;overflow:hidden"><span style="font-size:12px;letter-spacing:2.45px;-webkit-text-stroke:0.1px currentColor;position:relative;top:0.6px">*</span></div>
<div class="t" style="left:404.9px;top:230px;color:#fff;width:29.5px;overflow:hidden"><span style="font-size:12px;letter-spacing:2.45px;-webkit-text-stroke:0.1px currentColor;position:relative;top:0.6px">*</span></div>
<div class="t" style="left:437.0px;top:230px;color:#fff;letter-spacing:0.25px;width:43.4px;overflow:hidden">16:41:42</div>
<div class="t" style="left:483.0px;top:230px;color:#fff;letter-spacing:0.12px;width:54.1px;overflow:hidden">+36°28'00.0"</div>
<div class="t" style="left:539.7px;top:230px;color:#fff;width:33.4px;overflow:hidden">355.75</div>
<div class="t" style="left:575.7px;top:230px;color:#fff;width:36.5px;overflow:hidden">-3.41</div>
<div class="t" style="left:614.8px;top:230px;color:#fff;width:38.3px;overflow:hidden">Visible</div>
<div class="t" style="left:655.7px;top:230px;color:#fff;letter-spacing:0.25px;width:36.2px;overflow:hidden">01:31</div>
<div class="t" style="left:694.5px;top:230px;color:#fff;letter-spacing:0.25px;width:39.9px;overflow:hidden">22:01</div>
<div class="a" style="left:734.6px;top:88px;width:12.4px;height:153px;background:#f9f9f6"></div>
<div class="a" style="left:735.1px;top:88px;width:11.4px;height:12px;box-sizing:border-box;border:1px solid #fff;border-radius:2px;background:linear-gradient(90deg,#c9d8fc,#b9cbf8);box-shadow:0 0 0 0.5px #9db4ee"></div>
<svg class="a" style="left:735.6px;top:89px" width="11" height="10" viewBox="0 0 11 10"><polyline points="2.5,6 5.5,3 8.5,6" fill="none" stroke="#4d6185" stroke-width="1.8"/></svg>
<div class="a" style="left:735.1px;top:229px;width:11.4px;height:12px;box-sizing:border-box;border:1px solid #fff;border-radius:2px;background:linear-gradient(90deg,#c9d8fc,#b9cbf8);box-shadow:0 0 0 0.5px #9db4ee"></div>
<svg class="a" style="left:735.6px;top:230px" width="11" height="10" viewBox="0 0 11 10"><polyline points="2.5,3.5 5.5,6.5 8.5,3.5" fill="none" stroke="#4d6185" stroke-width="1.8"/></svg>
<div class="a" style="left:735.1px;top:101px;width:11.4px;height:12px;box-sizing:border-box;border:1px solid #fff;border-radius:2px;background:linear-gradient(90deg,#c9d8fc,#b9cbf8);box-shadow:0 0 0 0.5px #9db4ee"></div>
<div class="a" style="left:738.6px;top:104.0px;width:5px;height:1px;background:#eef4fe;border-bottom:0.5px solid #8cb0f8"></div>
<div class="a" style="left:738.6px;top:106.0px;width:5px;height:1px;background:#eef4fe;border-bottom:0.5px solid #8cb0f8"></div>
<div class="a" style="left:738.6px;top:108.0px;width:5px;height:1px;background:#eef4fe;border-bottom:0.5px solid #8cb0f8"></div>
<div class="lb" style="left:9px;top:248px;width:541px;height:23.5px"></div>
<div class="hv" style="left:54.4px;top:249px;height:10px"></div>
<div class="vl" style="left:54.4px;top:260px;height:10.5px"></div>
<div class="hv" style="left:98.8px;top:249px;height:10px"></div>
<div class="vl" style="left:98.8px;top:260px;height:10.5px"></div>
<div class="hv" style="left:143.5px;top:249px;height:10px"></div>
<div class="vl" style="left:143.5px;top:260px;height:10.5px"></div>
<div class="hv" style="left:188.1px;top:249px;height:10px"></div>
<div class="vl" style="left:188.1px;top:260px;height:10.5px"></div>
<div class="hv" style="left:232.5px;top:249px;height:10px"></div>
<div class="vl" style="left:232.5px;top:260px;height:10.5px"></div>
<div class="hv" style="left:276.9px;top:249px;height:10px"></div>
<div class="vl" style="left:276.9px;top:260px;height:10.5px"></div>
<div class="hv" style="left:321.2px;top:249px;height:10px"></div>
<div class="vl" style="left:321.2px;top:260px;height:10.5px"></div>
<div class="hv" style="left:366px;top:249px;height:10px"></div>
<div class="vl" style="left:366px;top:260px;height:10.5px"></div>
<div class="hv" style="left:410.6px;top:249px;height:10px"></div>
<div class="vl" style="left:410.6px;top:260px;height:10.5px"></div>
<div class="hv" style="left:455.2px;top:249px;height:10px"></div>
<div class="vl" style="left:455.2px;top:260px;height:10.5px"></div>
<div class="hv" style="left:499.7px;top:249px;height:10px"></div>
<div class="vl" style="left:499.7px;top:260px;height:10.5px"></div>
<div class="hl" style="left:10px;top:259px;width:539px"></div>
<div class="t" style="left:12.1px;top:248.5px;width:42.3px;overflow:hidden">Janvier</div>
<div class="t" style="left:12.1px;top:259.7px;">0</div>
<div class="t" style="left:57.0px;top:248.5px;width:41.8px;overflow:hidden">Février</div>
<div class="t" style="left:57.0px;top:259.7px;">0</div>
<div class="t" style="left:101.4px;top:248.5px;width:42.1px;overflow:hidden">Mars</div>
<div class="t" style="left:101.4px;top:259.7px;">1</div>
<div class="t" style="left:146.1px;top:248.5px;width:42.0px;overflow:hidden">Avril</div>
<div class="t" style="left:146.1px;top:259.7px;">2</div>
<div class="t" style="left:190.7px;top:248.5px;width:41.8px;overflow:hidden">Mai</div>
<div class="t" style="left:190.7px;top:259.7px;">2</div>
<div class="t" style="left:235.1px;top:248.5px;width:41.8px;overflow:hidden">Juin</div>
<div class="t" style="left:235.1px;top:259.7px;">2</div>
<div class="t" style="left:279.5px;top:248.5px;width:41.7px;overflow:hidden">Juillet</div>
<div class="t" style="left:279.5px;top:259.7px;">2</div>
<div class="t" style="left:323.8px;top:248.5px;width:42.2px;overflow:hidden">Aout</div>
<div class="t" style="left:323.8px;top:259.7px;">2</div>
<div class="t" style="left:368.6px;top:248.5px;width:42.0px;overflow:hidden">Septembre</div>
<div class="t" style="left:368.6px;top:259.7px;">2</div>
<div class="t" style="left:413.2px;top:248.5px;width:42.0px;overflow:hidden">Octobre</div>
<div class="t" style="left:413.2px;top:259.7px;">1</div>
<div class="t" style="left:457.8px;top:248.5px;width:41.9px;overflow:hidden">Novembre</div>
<div class="t" style="left:457.8px;top:259.7px;">0</div>
<div class="t" style="left:502.3px;top:248.5px;width:47.3px;overflow:hidden">Décembre</div>
<div class="t" style="left:502.3px;top:259.7px;">0</div>
<div class="lb" style="left:9px;top:275px;width:541px;height:108px"></div>
<div class="hv" style="left:69.4px;top:276px;height:10px"></div>
<div class="vl" style="left:69.4px;top:287px;height:44px"></div>
<div class="hv" style="left:113.5px;top:276px;height:10px"></div>
<div class="vl" style="left:113.5px;top:287px;height:44px"></div>
<div class="hv" style="left:189.4px;top:276px;height:10px"></div>
<div class="vl" style="left:189.4px;top:287px;height:44px"></div>
<div class="hv" style="left:245px;top:276px;height:10px"></div>
<div class="vl" style="left:245px;top:287px;height:44px"></div>
<div class="hv" style="left:320.5px;top:276px;height:10px"></div>
<div class="vl" style="left:320.5px;top:287px;height:44px"></div>
<div class="hv" style="left:367.2px;top:276px;height:10px"></div>
<div class="vl" style="left:367.2px;top:287px;height:44px"></div>
<div class="hv" style="left:426.9px;top:276px;height:10px"></div>
<div class="vl" style="left:426.9px;top:287px;height:44px"></div>
<div class="hv" style="left:473.7px;top:276px;height:10px"></div>
<div class="vl" style="left:473.7px;top:287px;height:44px"></div>
<div class="hv" style="left:520.6px;top:276px;height:10px"></div>
<div class="vl" style="left:520.6px;top:287px;height:44px"></div>
<div class="hl" style="left:10px;top:285.5px;width:539px"></div>
<div class="t" style="left:12.1px;top:276px;width:57.3px;overflow:hidden">Nom HR</div>
<div class="t" style="left:72.0px;top:276px;width:41.5px;overflow:hidden">Mag étoile</div>
<div class="t" style="left:116.1px;top:276px;width:73.3px;overflow:hidden">Nom Const étoile</div>
<div class="t" style="left:192.0px;top:276px;width:53.0px;overflow:hidden">Lettre étoile</div>
<div class="t" style="left:247.6px;top:276px;width:72.9px;overflow:hidden">Nom étoile</div>
<div class="t" style="left:323.1px;top:276px;width:44.1px;overflow:hidden">AD étoile</div>
<div class="t" style="left:369.8px;top:276px;width:57.1px;overflow:hidden">Dec étoile</div>
<div class="t" style="left:429.5px;top:276px;width:44.2px;overflow:hidden">AD Diff</div>
<div class="t" style="left:476.3px;top:276px;width:44.3px;overflow:hidden">Dec Diff</div>
<div class="t" style="left:523.2px;top:276px;width:26.4px;overflow:hidden">Dist</div>
<div class="t" style="left:12.1px;top:287px;">HR 6220</div>
<div class="t" style="left:72.0px;top:287px;">3.53</div>
<div class="t" style="left:116.1px;top:287px;">Hercule</div>
<div class="t" style="left:192.0px;top:287px;">Eta</div>
<div class="t" style="left:323.1px;top:287px;letter-spacing:0.25px;">16:42:53</div>
<div class="t" style="left:369.8px;top:287px;letter-spacing:0.12px;">+38°55'20.0"</div>
<div class="t" style="left:429.5px;top:287px;letter-spacing:0.25px;">-00:01:11</div>
<div class="t" style="left:476.3px;top:287px;letter-spacing:0.12px;">-02°27'</div>
<div class="t" style="left:523.2px;top:287px;">2.47</div>
<div class="t" style="left:12.1px;top:298px;">HR 6212</div>
<div class="t" style="left:72.0px;top:298px;">2.81</div>
<div class="t" style="left:116.1px;top:298px;">Hercule</div>
<div class="t" style="left:192.0px;top:298px;">Zet</div>
<div class="t" style="left:323.1px;top:298px;letter-spacing:0.25px;">16:41:17</div>
<div class="t" style="left:369.8px;top:298px;letter-spacing:0.12px;">+31°36'11.0"</div>
<div class="t" style="left:429.5px;top:298px;letter-spacing:0.25px;">+00:00:25</div>
<div class="t" style="left:476.3px;top:298px;letter-spacing:0.12px;">+04°51'</div>
<div class="t" style="left:523.2px;top:298px;">4.86</div>
<div class="t" style="left:12.1px;top:309px;">HR 6324</div>
<div class="t" style="left:72.0px;top:309px;">3.92</div>
<div class="t" style="left:116.1px;top:309px;">Hercule</div>
<div class="t" style="left:192.0px;top:309px;">Eps</div>
<div class="t" style="left:323.1px;top:309px;letter-spacing:0.25px;">17:00:17</div>
<div class="t" style="left:369.8px;top:309px;letter-spacing:0.12px;">+30°55'35.0"</div>
<div class="t" style="left:429.5px;top:309px;letter-spacing:0.25px;">-00:18:35</div>
<div class="t" style="left:476.3px;top:309px;letter-spacing:0.12px;">+05°32'</div>
<div class="t" style="left:523.2px;top:309px;">7.23</div>
<div class="t" style="left:12.1px;top:320px;">HR 6418</div>
<div class="t" style="left:72.0px;top:320px;">3.16</div>
<div class="t" style="left:116.1px;top:320px;">Hercule</div>
<div class="t" style="left:192.0px;top:320px;">Pi</div>
<div class="t" style="left:323.1px;top:320px;letter-spacing:0.25px;">17:15:02</div>
<div class="t" style="left:369.8px;top:320px;letter-spacing:0.12px;">+36°48'33.0"</div>
<div class="t" style="left:429.5px;top:320px;letter-spacing:0.25px;">-00:33:20</div>
<div class="t" style="left:476.3px;top:320px;letter-spacing:0.12px;">+00°20'</div>
<div class="t" style="left:523.2px;top:320px;">8.34</div>
<div class="a" style="left:304.5px;top:382.5px;width:247px;height:9px;box-sizing:border-box;background:#ECE9D8;border:1px solid #505050;border-top-color:#fff;border-right-width:1.5px"></div>
<div class="t" style="left:302px;top:381px;width:246px;text-align:center;font-size:7.5px;letter-spacing:-0.1px;line-height:10px">Double click pour ajouter un objet et une étoile de référence</div>
<div class="a" style="left:13px;top:391px;width:169px;height:9px;box-sizing:border-box;border:1px solid #383838;background:#ECE9D8"></div>
<div class="t" style="left:12px;top:390px;width:169px;text-align:center;font-size:7.5px;letter-spacing:-0.1px;line-height:10px">Double click pour enlever un objet</div>
<div class="a" style="left:13px;top:400px;width:169px;height:16px;background:#fff;"></div>
<div class="t" style="left:12px;top:400px;width:169px;text-align:center;font-size:14px;line-height:16px;height:16px;letter-spacing:-0.25px;margin-top:0">Aperçu du PSA</div>
<div class="lb" style="left:13px;top:416px;width:169px;height:132px"></div>
<div class="vl" style="left:58px;top:417px;height:130px"></div>
<div class="vl" style="left:120px;top:417px;height:130px"></div>
<div class="t" style="left:16px;top:418px;letter-spacing:-1px">M</div>
<div class="t" style="left:29.3px;top:418px;">1</div>
<div class="t" style="left:61.2px;top:418px;">Taureau</div>
<div class="t" style="left:122.5px;top:418px;letter-spacing:-0.6px">HR</div>
<div class="t" style="left:136.2px;top:418px;">1910</div>
<div class="t" style="left:16px;top:429px;letter-spacing:-1px">M</div>
<div class="t" style="left:27.0px;top:429px;">31</div>
<div class="t" style="left:61.2px;top:429px;">Andromède</div>
<div class="t" style="left:122.5px;top:429px;letter-spacing:-0.6px">HR</div>
<div class="t" style="left:138.4px;top:429px;">337</div>
<div class="t" style="left:16px;top:440px;letter-spacing:-1px">M</div>
<div class="t" style="left:27.0px;top:440px;">33</div>
<div class="t" style="left:61.2px;top:440px;">Triangle</div>
<div class="t" style="left:122.5px;top:440px;letter-spacing:-0.6px">HR</div>
<div class="t" style="left:138.4px;top:440px;">337</div>
<div class="t" style="left:16px;top:451px;letter-spacing:-1px">M</div>
<div class="t" style="left:27.0px;top:451px;">35</div>
<div class="t" style="left:61.2px;top:451px;">Gémeaux</div>
<div class="t" style="left:122.5px;top:451px;letter-spacing:-0.6px">HR</div>
<div class="t" style="left:136.2px;top:451px;">2286</div>
<div class="t" style="left:16px;top:462px;letter-spacing:-1px">M</div>
<div class="t" style="left:27.0px;top:462px;">36</div>
<div class="t" style="left:61.2px;top:462px;">Cocher</div>
<div class="t" style="left:122.5px;top:462px;letter-spacing:-0.6px">HR</div>
<div class="t" style="left:136.2px;top:462px;">1791</div>
<div class="t" style="left:16px;top:473px;letter-spacing:-1px">M</div>
<div class="t" style="left:27.0px;top:473px;">37</div>
<div class="t" style="left:61.2px;top:473px;">Cocher</div>
<div class="t" style="left:122.5px;top:473px;letter-spacing:-0.6px">HR</div>
<div class="t" style="left:136.2px;top:473px;">2095</div>
<div class="t" style="left:16px;top:483px;letter-spacing:-1px">M</div>
<div class="t" style="left:27.0px;top:483px;">38</div>
<div class="t" style="left:61.2px;top:483px;">Cocher</div>
<div class="t" style="left:122.5px;top:483px;letter-spacing:-0.6px">HR</div>
<div class="t" style="left:136.2px;top:483px;">1791</div>
<div class="t" style="left:16px;top:494px;letter-spacing:-1px">M</div>
<div class="t" style="left:27.0px;top:494px;">42</div>
<div class="t" style="left:61.2px;top:494px;">Orion</div>
<div class="t" style="left:122.5px;top:494px;letter-spacing:-0.6px">HR</div>
<div class="t" style="left:136.2px;top:494px;">1899</div>
<div class="t" style="left:16px;top:505px;letter-spacing:-1px">M</div>
<div class="t" style="left:27.0px;top:505px;">45</div>
<div class="t" style="left:61.2px;top:505px;">Taureau</div>
<div class="t" style="left:122.5px;top:505px;letter-spacing:-0.6px">HR</div>
<div class="t" style="left:136.2px;top:505px;">1165</div>
<div class="t" style="left:16px;top:516px;letter-spacing:-1px">M</div>
<div class="t" style="left:27.0px;top:516px;">81</div>
<div class="t" style="left:61.2px;top:516px;">Grande Ourse</div>
<div class="t" style="left:122.5px;top:516px;letter-spacing:-0.6px">HR</div>
<div class="t" style="left:136.2px;top:516px;">4301</div>
<div class="t" style="left:16px;top:527px;letter-spacing:-1px">M</div>
<div class="t" style="left:27.0px;top:527px;">82</div>
<div class="t" style="left:61.2px;top:527px;">Grande Ourse</div>
<div class="t" style="left:122.5px;top:527px;letter-spacing:-0.6px">HR</div>
<div class="t" style="left:136.2px;top:527px;">4301</div>
<div class="t" style="left:16px;top:538px;letter-spacing:-0.5px">NGC</div>
<div class="t" style="left:37.2px;top:538px;">869</div>
<div class="t" style="left:61.2px;top:538px;">Persée</div>
<div class="t" style="left:122.5px;top:538px;letter-spacing:-0.6px">HR</div>
<div class="t" style="left:138.4px;top:538px;">542</div>
<div class="a" style="left:168px;top:418px;width:12.4px;height:129px;background:#f9f9f6"></div>
<div class="a" style="left:168.5px;top:418px;width:11.4px;height:12px;box-sizing:border-box;border:1px solid #fff;border-radius:2px;background:linear-gradient(90deg,#c9d8fc,#b9cbf8);box-shadow:0 0 0 0.5px #9db4ee"></div>
<svg class="a" style="left:169px;top:419px" width="11" height="10" viewBox="0 0 11 10"><polyline points="2.5,6 5.5,3 8.5,6" fill="none" stroke="#4d6185" stroke-width="1.8"/></svg>
<div class="a" style="left:168.5px;top:535px;width:11.4px;height:12px;box-sizing:border-box;border:1px solid #fff;border-radius:2px;background:linear-gradient(90deg,#c9d8fc,#b9cbf8);box-shadow:0 0 0 0.5px #9db4ee"></div>
<svg class="a" style="left:169px;top:536px" width="11" height="10" viewBox="0 0 11 10"><polyline points="2.5,3.5 5.5,6.5 8.5,3.5" fill="none" stroke="#4d6185" stroke-width="1.8"/></svg>
<div class="a" style="left:168.5px;top:432px;width:11.4px;height:12px;box-sizing:border-box;border:1px solid #fff;border-radius:2px;background:linear-gradient(90deg,#c9d8fc,#b9cbf8);box-shadow:0 0 0 0.5px #9db4ee"></div>
<div class="a" style="left:172px;top:435.0px;width:5px;height:1px;background:#eef4fe;border-bottom:0.5px solid #8cb0f8"></div>
<div class="a" style="left:172px;top:437.0px;width:5px;height:1px;background:#eef4fe;border-bottom:0.5px solid #8cb0f8"></div>
<div class="a" style="left:172px;top:439.0px;width:5px;height:1px;background:#eef4fe;border-bottom:0.5px solid #8cb0f8"></div>
<div class="t" style="left:607px;top:252px;font-weight:bold;font-size:9.3px;letter-spacing:-0.1px">Etoiles proches:</div>
<div class="t" style="left:598px;top:273px;">Magnitude min</div>
<div class="t" style="left:598px;top:288px;">Distance max</div>
<div class="lb" style="left:656px;top:272px;width:48px;height:14px"></div>
<div class="lb" style="left:656px;top:287.5px;width:48px;height:14px"></div>
<div class="t" style="left:657.3px;top:273px;">4</div>
<div class="t" style="left:657.3px;top:288px;">10</div>
<div class="btn" style="left:715.5px;top:275px;width:54px;height:29.5px"></div>
<div class="t" style="left:714.7px;top:278.2px;width:54px;text-align:center;font-size:9px;letter-spacing:-0.1px;line-height:10px;height:10px;">Info par</div>
<div class="t" style="left:714.7px;top:288.2px;width:54px;text-align:center;font-size:9px;letter-spacing:-0.1px;line-height:10px;height:10px;">objet</div>
<div class="btn" style="left:715.5px;top:316.5px;width:54px;height:29.5px"></div>
<div class="t" style="left:714.7px;top:318.9px;width:54px;text-align:center;font-size:9px;letter-spacing:-0.15px;line-height:10px;height:10px;">Iinfo par</div>
<div class="t" style="left:714.7px;top:328.9px;width:54px;text-align:center;font-size:9px;letter-spacing:-0.3px;line-height:10px;height:10px;">constellatio</div>
<div class="btn" style="left:620.5px;top:316.5px;width:54px;height:29.5px"></div>
<div class="t" style="left:619.7px;top:320.1px;width:54px;text-align:center;font-size:9px;letter-spacing:-0.1px;line-height:10px;height:10px;">Afficher</div>
<div class="t" style="left:619.7px;top:330.1px;width:54px;text-align:center;font-size:9px;letter-spacing:-0.1px;line-height:10px;height:10px;">PSA</div>
<div class="a" style="left:553px;top:305.5px;width:59.5px;height:44px;box-sizing:border-box;border:1px solid #c9c7b8;box-shadow:1px 1px 0 #fbfaf4, inset 1px 1px 0 #fbfaf4"></div>
<div class="t" style="left:558.5px;top:299.5px;background:#ECE9D8;padding:0 2px">Image</div>
<svg class="a" style="left:560.7px;top:316.7px" width="11" height="11" viewBox="0 0 11 11"><circle cx="5.5" cy="5.5" r="3.7" fill="#fff" stroke="#8a96a6" stroke-width="1"/><path d="M2.8 7.9A3.7 3.7 0 0 1 7.9 2.8" fill="none" stroke="#4d5a6c" stroke-width="1"/><circle cx="5.5" cy="5.5" r="1.5" fill="#111"/></svg>
<svg class="a" style="left:560.7px;top:333.5px" width="11" height="11" viewBox="0 0 11 11"><circle cx="5.5" cy="5.5" r="3.7" fill="#fff" stroke="#8a96a6" stroke-width="1"/><path d="M2.8 7.9A3.7 3.7 0 0 1 7.9 2.8" fill="none" stroke="#4d5a6c" stroke-width="1"/></svg>
<div class="t" style="left:575.6px;top:316.6px;">Photo</div>
<div class="t" style="left:575.6px;top:333.8px;">Dessin</div>
<div class="lb" style="left:594px;top:357.5px;width:106px;height:187.5px"></div>
<div class="hv" style="left:624px;top:358px;height:11px"></div>
<div class="hv" style="left:662px;top:358px;height:11px"></div>
<div class="vl" style="left:624px;top:369px;height:165px"></div>
<div class="vl" style="left:662px;top:369px;height:165px"></div>
<div class="hl" style="left:595px;top:369px;width:104px"></div>
<div class="t" style="left:597px;top:359px;">Heure</div>
<div class="t" style="left:627px;top:359px;">Hauteur</div>
<div class="t" style="left:665px;top:359px;">Azimut</div>
<div class="t" style="left:597px;top:370px;">18H</div>
<div class="t" style="left:627px;top:370px;">25<span style="font-size:10.5px;-webkit-text-stroke:0;position:relative;top:0.5px"> °</span></div>
<div class="t" style="left:665px;top:370px;">298<span style="font-size:10.5px;-webkit-text-stroke:0;position:relative;top:0.5px"> °</span></div>
<div class="t" style="left:597px;top:381px;">19H</div>
<div class="t" style="left:627px;top:381px;">17<span style="font-size:10.5px;-webkit-text-stroke:0;position:relative;top:0.5px"> °</span></div>
<div class="t" style="left:665px;top:381px;">307<span style="font-size:10.5px;-webkit-text-stroke:0;position:relative;top:0.5px"> °</span></div>
<div class="t" style="left:597px;top:392px;">20H</div>
<div class="t" style="left:627px;top:392px;">10<span style="font-size:10.5px;-webkit-text-stroke:0;position:relative;top:0.5px"> °</span></div>
<div class="t" style="left:665px;top:392px;">317<span style="font-size:10.5px;-webkit-text-stroke:0;position:relative;top:0.5px"> °</span></div>
<div class="t" style="left:597px;top:402px;">21H</div>
<div class="t" style="left:627px;top:402px;">4<span style="font-size:10.5px;-webkit-text-stroke:0;position:relative;top:0.5px"> °</span></div>
<div class="t" style="left:665px;top:402px;">328<span style="font-size:10.5px;-webkit-text-stroke:0;position:relative;top:0.5px"> °</span></div>
<div class="t" style="left:597px;top:413px;">22H</div>
<div class="t" style="left:627px;top:413px;">-1<span style="font-size:10.5px;-webkit-text-stroke:0;position:relative;top:0.5px"> °</span></div>
<div class="t" style="left:665px;top:413px;">339<span style="font-size:10.5px;-webkit-text-stroke:0;position:relative;top:0.5px"> °</span></div>
<div class="t" style="left:597px;top:424px;">23H</div>
<div class="t" style="left:627px;top:424px;">-3<span style="font-size:10.5px;-webkit-text-stroke:0;position:relative;top:0.5px"> °</span></div>
<div class="t" style="left:665px;top:424px;">351<span style="font-size:10.5px;-webkit-text-stroke:0;position:relative;top:0.5px"> °</span></div>
<div class="t" style="left:597px;top:435px;">00H</div>
<div class="t" style="left:627px;top:435px;">-3<span style="font-size:10.5px;-webkit-text-stroke:0;position:relative;top:0.5px"> °</span></div>
<div class="t" style="left:665px;top:435px;">2<span style="font-size:10.5px;-webkit-text-stroke:0;position:relative;top:0.5px"> °</span></div>
<div class="t" style="left:597px;top:446px;">01H</div>
<div class="t" style="left:627px;top:446px;">-2<span style="font-size:10.5px;-webkit-text-stroke:0;position:relative;top:0.5px"> °</span></div>
<div class="t" style="left:665px;top:446px;">14<span style="font-size:10.5px;-webkit-text-stroke:0;position:relative;top:0.5px"> °</span></div>
<div class="t" style="left:597px;top:457px;">02H</div>
<div class="t" style="left:627px;top:457px;">1<span style="font-size:10.5px;-webkit-text-stroke:0;position:relative;top:0.5px"> °</span></div>
<div class="t" style="left:665px;top:457px;">26<span style="font-size:10.5px;-webkit-text-stroke:0;position:relative;top:0.5px"> °</span></div>
<div class="t" style="left:597px;top:468px;">03H</div>
<div class="t" style="left:627px;top:468px;">6<span style="font-size:10.5px;-webkit-text-stroke:0;position:relative;top:0.5px"> °</span></div>
<div class="t" style="left:665px;top:468px;">37<span style="font-size:10.5px;-webkit-text-stroke:0;position:relative;top:0.5px"> °</span></div>
<div class="t" style="left:597px;top:479px;">04H</div>
<div class="t" style="left:627px;top:479px;">13<span style="font-size:10.5px;-webkit-text-stroke:0;position:relative;top:0.5px"> °</span></div>
<div class="t" style="left:665px;top:479px;">47<span style="font-size:10.5px;-webkit-text-stroke:0;position:relative;top:0.5px"> °</span></div>
<div class="t" style="left:597px;top:490px;">05H</div>
<div class="t" style="left:627px;top:490px;">20<span style="font-size:10.5px;-webkit-text-stroke:0;position:relative;top:0.5px"> °</span></div>
<div class="t" style="left:665px;top:490px;">57<span style="font-size:10.5px;-webkit-text-stroke:0;position:relative;top:0.5px"> °</span></div>
<div class="t" style="left:597px;top:501px;">06H</div>
<div class="t" style="left:627px;top:501px;">29<span style="font-size:10.5px;-webkit-text-stroke:0;position:relative;top:0.5px"> °</span></div>
<div class="t" style="left:665px;top:501px;">67<span style="font-size:10.5px;-webkit-text-stroke:0;position:relative;top:0.5px"> °</span></div>
<div class="t" style="left:597px;top:512px;">07H</div>
<div class="t" style="left:627px;top:512px;">38<span style="font-size:10.5px;-webkit-text-stroke:0;position:relative;top:0.5px"> °</span></div>
<div class="t" style="left:665px;top:512px;">76<span style="font-size:10.5px;-webkit-text-stroke:0;position:relative;top:0.5px"> °</span></div>
<div class="t" style="left:597px;top:522px;">08H</div>
<div class="t" style="left:627px;top:522px;">48<span style="font-size:10.5px;-webkit-text-stroke:0;position:relative;top:0.5px"> °</span></div>
<div class="t" style="left:665px;top:522px;">86<span style="font-size:10.5px;-webkit-text-stroke:0;position:relative;top:0.5px"> °</span></div>
<div class="btn" style="left:715px;top:369.5px;width:54px;height:36px"></div>
<div class="t" style="left:714.2px;top:371.4px;width:54px;text-align:center;font-size:9px;letter-spacing:-0.1px;line-height:10.5px;height:10.5px;color:#e0141c">Créer un</div>
<div class="t" style="left:714.2px;top:381.9px;width:54px;text-align:center;font-size:9px;letter-spacing:-0.1px;line-height:10.5px;height:10.5px;color:#e0141c">nouveau</div>
<div class="t" style="left:714.2px;top:392.4px;width:54px;text-align:center;font-size:9px;letter-spacing:-0.1px;line-height:10.5px;height:10.5px;color:#e0141c">PSA</div>
<div class="btn" style="left:715px;top:414.5px;width:54px;height:29px"></div>
<div class="t" style="left:714.2px;top:417.5px;width:54px;text-align:center;font-size:9px;letter-spacing:-0.1px;line-height:10px;height:10px;">Sauver un</div>
<div class="t" style="left:714.2px;top:427.5px;width:54px;text-align:center;font-size:9px;letter-spacing:-0.1px;line-height:10px;height:10px;">PSA</div>
<div class="btn" style="left:715px;top:449.5px;width:54px;height:30px"></div>
<div class="t" style="left:714.2px;top:453.0px;width:54px;text-align:center;font-size:9px;letter-spacing:-0.1px;line-height:10px;height:10px;">Charger un</div>
<div class="t" style="left:714.2px;top:463.0px;width:54px;text-align:center;font-size:9px;letter-spacing:-0.1px;line-height:10px;height:10px;">PSA</div>
<div class="btn" style="left:708.5px;top:505px;width:60.5px;height:35px"></div>
<div class="t" style="left:707.7px;top:512.5px;width:60.5px;text-align:center;font-size:9px;letter-spacing:-0.1px;line-height:10.6px;height:10.6px;color:#0000c0;font-weight:bold;font-size:9.8px;letter-spacing:-0.15px">Retour à la</div>
<div class="t" style="left:707.7px;top:523.1px;width:60.5px;text-align:center;font-size:9px;letter-spacing:-0.1px;line-height:10.6px;height:10.6px;color:#0000c0;font-weight:bold;font-size:9.8px;letter-spacing:-0.15px">sélection</div>
<div class="a" style="left:372px;top:398.6px;width:215px;height:145px;box-sizing:border-box;background:#fff;border:1px solid #e8e6dc;border-left:2px solid #3c3c3c;border-top:2px solid #3c3c3c"></div>
<svg class="a" style="left:0;top:0" width="800" height="580" viewBox="0 0 800 580"><line x1="392.4" y1="412.00" x2="558.6" y2="412.00" stroke="#111" stroke-width="1.1"/><line x1="392.4" y1="423.20" x2="558.6" y2="423.20" stroke="#111" stroke-width="1.1"/><line x1="392.4" y1="434.40" x2="558.6" y2="434.40" stroke="#111" stroke-width="1.1"/><line x1="392.4" y1="445.60" x2="558.6" y2="445.60" stroke="#111" stroke-width="1.1"/><line x1="392.4" y1="456.80" x2="558.6" y2="456.80" stroke="#111" stroke-width="1.1"/><line x1="392.4" y1="468.00" x2="558.6" y2="468.00" stroke="#111" stroke-width="1.1"/><line x1="392.4" y1="479.20" x2="558.6" y2="479.20" stroke="#111" stroke-width="1.1"/><line x1="392.4" y1="490.40" x2="558.6" y2="490.40" stroke="#111" stroke-width="1.1"/><line x1="392.4" y1="501.60" x2="558.6" y2="501.60" stroke="#111" stroke-width="1.1"/><line x1="392.4" y1="512.80" x2="558.6" y2="512.80" stroke="#111" stroke-width="1.1"/><line x1="395.2" y1="412.0" x2="395.2" y2="512.8" stroke="#111" stroke-width="1.2"/><line x1="558.6" y1="412.0" x2="558.6" y2="512.8" stroke="#111" stroke-width="1.2"/><line x1="394.80" y1="512.8" x2="394.80" y2="515.4" stroke="#111" stroke-width="1"/><line x1="405.72" y1="512.8" x2="405.72" y2="515.4" stroke="#111" stroke-width="1"/><line x1="416.64" y1="512.8" x2="416.64" y2="515.4" stroke="#111" stroke-width="1"/><line x1="427.56" y1="512.8" x2="427.56" y2="515.4" stroke="#111" stroke-width="1"/><line x1="438.48" y1="512.8" x2="438.48" y2="515.4" stroke="#111" stroke-width="1"/><line x1="449.40" y1="512.8" x2="449.40" y2="515.4" stroke="#111" stroke-width="1"/><line x1="460.32" y1="512.8" x2="460.32" y2="515.4" stroke="#111" stroke-width="1"/><line x1="471.24" y1="512.8" x2="471.24" y2="515.4" stroke="#111" stroke-width="1"/><line x1="482.16" y1="512.8" x2="482.16" y2="515.4" stroke="#111" stroke-width="1"/><line x1="493.08" y1="512.8" x2="493.08" y2="515.4" stroke="#111" stroke-width="1"/><line x1="504.00" y1="512.8" x2="504.00" y2="515.4" stroke="#111" stroke-width="1"/><line x1="514.92" y1="512.8" x2="514.92" y2="515.4" stroke="#111" stroke-width="1"/><line x1="525.84" y1="512.8" x2="525.84" y2="515.4" stroke="#111" stroke-width="1"/><line x1="536.76" y1="512.8" x2="536.76" y2="515.4" stroke="#111" stroke-width="1"/><line x1="547.68" y1="512.8" x2="547.68" y2="515.4" stroke="#111" stroke-width="1"/><line x1="558.60" y1="512.8" x2="558.60" y2="515.4" stroke="#111" stroke-width="1"/><line x1="556.6" y1="512.80" x2="561.2" y2="512.80" stroke="#111" stroke-width="1.1"/><line x1="556.6" y1="487.60" x2="561.2" y2="487.60" stroke="#111" stroke-width="1.1"/><line x1="556.6" y1="462.40" x2="561.2" y2="462.40" stroke="#111" stroke-width="1.1"/><line x1="556.6" y1="437.20" x2="561.2" y2="437.20" stroke="#111" stroke-width="1.1"/><line x1="556.6" y1="412.00" x2="561.2" y2="412.00" stroke="#111" stroke-width="1.1"/><clipPath id="cp"><rect x="394.8" y="411.0" width="163.8" height="102.3"/></clipPath><polyline clip-path="url(#cp)" points="400.3,484.8 411.2,493.8 422.1,501.6 433.0,508.3 443.9,513.9 454.9,516.2 465.8,516.2 476.7,515.0 487.6,511.7 498.5,506.1 509.5,498.2 520.4,490.4 531.3,480.3 542.2,470.2 553.1,459.0" fill="none" stroke="#e8202a" stroke-width="1"/><polyline clip-path="url(#cp)" points="400.3,429.4 411.2,426.8 422.1,424.0 433.0,421.0 443.9,417.9 454.9,414.5 465.8,512.2 476.7,508.9 487.6,505.5 498.5,502.4 509.5,499.6 520.4,496.8 531.3,494.0 542.2,491.5 553.1,488.7" fill="none" stroke="#2a2a9a" stroke-width="1.1"/><text x="388.5" y="516.0" text-anchor="end" font-size="9.2" fill="#e0141c" stroke="#e0141c" stroke-width="0.25" font-family="Liberation Sans">0</text><text x="388.5" y="504.8" text-anchor="end" font-size="9.2" fill="#e0141c" stroke="#e0141c" stroke-width="0.25" font-family="Liberation Sans">10</text><text x="388.5" y="493.6" text-anchor="end" font-size="9.2" fill="#e0141c" stroke="#e0141c" stroke-width="0.25" font-family="Liberation Sans">20</text><text x="388.5" y="482.4" text-anchor="end" font-size="9.2" fill="#e0141c" stroke="#e0141c" stroke-width="0.25" font-family="Liberation Sans">30</text><text x="388.5" y="471.2" text-anchor="end" font-size="9.2" fill="#e0141c" stroke="#e0141c" stroke-width="0.25" font-family="Liberation Sans">40</text><text x="388.5" y="460.0" text-anchor="end" font-size="9.2" fill="#e0141c" stroke="#e0141c" stroke-width="0.25" font-family="Liberation Sans">50</text><text x="388.5" y="448.8" text-anchor="end" font-size="9.2" fill="#e0141c" stroke="#e0141c" stroke-width="0.25" font-family="Liberation Sans">60</text><text x="388.5" y="437.6" text-anchor="end" font-size="9.2" fill="#e0141c" stroke="#e0141c" stroke-width="0.25" font-family="Liberation Sans">70</text><text x="388.5" y="426.4" text-anchor="end" font-size="9.2" fill="#e0141c" stroke="#e0141c" stroke-width="0.25" font-family="Liberation Sans">80</text><text x="388.5" y="415.2" text-anchor="end" font-size="9.2" fill="#e0141c" stroke="#e0141c" stroke-width="0.25" font-family="Liberation Sans">90</text><text x="565" y="516.0" font-size="9.2" fill="#2020a0" stroke="#2020a0" stroke-width="0.25" font-family="Liberation Sans">0</text><text x="565" y="490.8" font-size="9.2" fill="#2020a0" stroke="#2020a0" stroke-width="0.25" font-family="Liberation Sans">90</text><text x="565" y="465.6" font-size="9.2" fill="#2020a0" stroke="#2020a0" stroke-width="0.25" font-family="Liberation Sans">180</text><text x="565" y="440.4" font-size="9.2" fill="#2020a0" stroke="#2020a0" stroke-width="0.25" font-family="Liberation Sans">270</text><text x="565" y="415.2" font-size="9.2" fill="#2020a0" stroke="#2020a0" stroke-width="0.25" font-family="Liberation Sans">360</text><text transform="translate(403.3,532.5) rotate(-90)" font-size="8.8" fill="#000" stroke="#000" stroke-width="0.2" font-family="Liberation Sans">18H</text><text transform="translate(425.1,532.5) rotate(-90)" font-size="8.8" fill="#000" stroke="#000" stroke-width="0.2" font-family="Liberation Sans">20H</text><text transform="translate(446.9,532.5) rotate(-90)" font-size="8.8" fill="#000" stroke="#000" stroke-width="0.2" font-family="Liberation Sans">22H</text><text transform="translate(468.8,532.5) rotate(-90)" font-size="8.8" fill="#000" stroke="#000" stroke-width="0.2" font-family="Liberation Sans">00H</text><text transform="translate(490.6,532.5) rotate(-90)" font-size="8.8" fill="#000" stroke="#000" stroke-width="0.2" font-family="Liberation Sans">02H</text><text transform="translate(512.5,532.5) rotate(-90)" font-size="8.8" fill="#000" stroke="#000" stroke-width="0.2" font-family="Liberation Sans">04H</text><text transform="translate(534.3,532.5) rotate(-90)" font-size="8.8" fill="#000" stroke="#000" stroke-width="0.2" font-family="Liberation Sans">06H</text><text transform="translate(556.1,532.5) rotate(-90)" font-size="8.8" fill="#000" stroke="#000" stroke-width="0.2" font-family="Liberation Sans">08H</text></svg>
<svg class="a" style="left:202px;top:394px" width="152" height="152" viewBox="0 0 152 152"><defs><radialGradient id="gc" cx="74.2" cy="74.6" r="44" gradientUnits="userSpaceOnUse"><stop offset="0" stop-color="#fff"/><stop offset="0.10" stop-color="#fcfdff"/><stop offset="0.17" stop-color="#d0dcf6" stop-opacity=".93"/><stop offset="0.27" stop-color="#8c9cc8" stop-opacity=".7"/><stop offset="0.42" stop-color="#5a6690" stop-opacity=".42"/><stop offset="0.62" stop-color="#3a4264" stop-opacity=".22"/><stop offset="0.82" stop-color="#22283c" stop-opacity=".1"/><stop offset="1" stop-color="#101420" stop-opacity="0"/></radialGradient><radialGradient id="gk" cx="74.2" cy="74.6" r="20" gradientUnits="userSpaceOnUse"><stop offset="0" stop-color="#fff"/><stop offset="0.27" stop-color="#fff"/><stop offset="0.42" stop-color="#eef2ff" stop-opacity=".85"/><stop offset="0.62" stop-color="#c8d4f4" stop-opacity=".5"/><stop offset="0.82" stop-color="#a0b0e0" stop-opacity=".2"/><stop offset="1" stop-color="#8090c0" stop-opacity="0"/></radialGradient></defs><rect width="152" height="152" fill="#050507"/><circle cx="74.2" cy="74.6" r="44" fill="url(#gc)" opacity="0.8"/><path d="M67.9 73.4h0M89.3 32.4h0M72.5 62.7h0M62.1 89.7h0M78.9 72.5h0M84.9 70.3h0M75.2 79.2h0M75.0 69.6h0M76.9 99.5h0M76.9 74.1h0M94.5 63.9h0M77.7 71.8h0M66.3 73.9h0M84.9 87.7h0M72.4 83.1h0M94.4 62.1h0M69.6 69.6h0M65.9 66.3h0M65.3 70.1h0M99.5 122.3h0M65.6 87.0h0M85.5 87.6h0M77.7 66.3h0M87.3 94.1h0M47.8 90.5h0M72.0 83.3h0M86.3 70.2h0M70.5 75.7h0M65.7 83.2h0M63.1 78.8h0M99.6 69.7h0M59.2 63.8h0M76.6 68.2h0M65.5 66.2h0M60.6 39.6h0M69.9 71.4h0M87.8 53.7h0M61.5 75.1h0M75.1 77.6h0M76.4 72.9h0M81.5 86.9h0M71.3 72.3h0M61.9 59.7h0M75.7 80.9h0M63.3 91.2h0M74.9 81.1h0M84.2 59.7h0M84.1 64.8h0M64.3 100.4h0M75.5 75.2h0M73.8 22.0h0M65.9 74.1h0M70.0 72.8h0M65.8 74.7h0M75.5 64.0h0M71.2 74.2h0M75.9 48.8h0M56.5 70.3h0M59.8 71.0h0M82.5 68.0h0M69.7 77.7h0M82.4 102.6h0M55.1 79.3h0M70.8 56.6h0M89.7 97.8h0M72.2 80.7h0M60.5 88.7h0M79.3 84.7h0M63.1 71.5h0M56.9 65.6h0M67.0 65.6h0M72.3 87.6h0M118.9 75.8h0M76.1 72.0h0M60.0 61.9h0M28.0 34.5h0M65.8 85.7h0M54.6 55.8h0M75.7 75.3h0M63.7 80.4h0M75.1 92.1h0M85.9 77.9h0M63.8 67.0h0M25.7 43.3h0M62.9 65.4h0M77.7 66.9h0M69.6 70.0h0M90.8 60.1h0M76.8 80.3h0M68.4 74.8h0M76.5 70.1h0M76.6 68.1h0M78.4 73.3h0M45.5 54.0h0M72.7 92.6h0M90.2 77.8h0M61.4 68.4h0M69.1 81.2h0M75.7 79.0h0M63.5 66.8h0M73.1 80.2h0M58.2 85.8h0M66.0 65.2h0M77.1 58.4h0M70.4 75.2h0M73.9 75.1h0M68.7 58.8h0M70.3 69.1h0M97.6 14.8h0M62.9 97.4h0M55.0 122.8h0M78.2 76.6h0M82.5 106.0h0M70.3 81.5h0M55.7 81.2h0M61.0 101.2h0M115.6 91.2h0M76.2 91.5h0M74.0 91.6h0M74.1 84.4h0M76.6 68.9h0M111.6 65.2h0M74.2 71.0h0M86.9 47.6h0M61.3 63.6h0M66.3 50.9h0M50.6 74.7h0M83.1 81.0h0M25.3 19.0h0M70.8 70.8h0M82.9 81.5h0M57.9 50.6h0M62.8 86.4h0M52.0 93.1h0M76.5 62.2h0M71.3 68.2h0M72.2 59.3h0M84.3 70.0h0M88.9 76.0h0M85.8 59.0h0M73.0 66.5h0M23.8 84.4h0M68.3 69.9h0M54.3 62.6h0M94.4 76.4h0M97.7 61.5h0M58.4 70.4h0M63.2 87.4h0M83.1 105.9h0M72.7 76.3h0M112.7 52.3h0M2.2 110.6h0M51.6 59.6h0M102.2 64.0h0M66.4 84.5h0M77.9 75.7h0M44.7 104.3h0M68.6 56.7h0M80.2 37.8h0M22.7 54.1h0M65.8 78.1h0M69.0 76.7h0M99.5 68.4h0M83.9 73.9h0M64.5 64.7h0M93.3 69.6h0M73.3 73.9h0M46.3 60.2h0M81.4 78.3h0M92.1 83.8h0M62.5 74.2h0M80.2 74.5h0M96.7 96.1h0M55.7 75.9h0M80.1 71.4h0M68.3 101.9h0M95.5 70.5h0M86.2 67.1h0M87.8 57.6h0M69.2 84.4h0M50.1 58.8h0M81.4 82.6h0M73.3 75.6h0M75.3 86.1h0M73.5 76.5h0M81.8 73.7h0M84.4 84.0h0M83.2 58.1h0M86.6 45.2h0M109.0 56.4h0M68.8 65.3h0M56.6 85.1h0M101.1 89.0h0M48.6 84.3h0M77.7 81.0h0M28.1 48.7h0M74.2 75.3h0M18.9 84.3h0M70.7 33.1h0M77.7 63.7h0M79.1 108.0h0M69.2 84.6h0M75.3 85.6h0M90.2 70.5h0M54.1 56.5h0M79.9 79.5h0M73.6 46.5h0M82.3 87.1h0M72.2 67.9h0M94.8 69.5h0M76.4 54.1h0M90.2 59.1h0M84.1 90.9h0M61.6 127.1h0M79.2 61.4h0M49.9 82.5h0M52.4 99.5h0M76.5 63.9h0M74.2 101.4h0M64.3 57.0h0M12.3 33.5h0M45.8 32.4h0M87.0 88.4h0M43.4 85.9h0M11.9 97.6h0M81.5 74.2h0M72.6 72.3h0M67.9 59.7h0M69.7 58.7h0M88.1 74.3h0M83.3 67.6h0M85.3 51.7h0M120.8 61.6h0M54.1 79.5h0M80.9 62.8h0M105.8 115.3h0M79.7 63.3h0M101.0 84.8h0M80.8 91.3h0M86.3 81.3h0M83.0 84.0h0M57.8 92.0h0M78.3 64.8h0M28.0 98.3h0M45.3 73.5h0M129.6 133.4h0M94.3 62.5h0M74.5 135.5h0M79.8 76.8h0M94.8 77.4h0M60.2 80.7h0M83.2 63.3h0M33.6 73.3h0M88.9 49.4h0M66.9 64.6h0M69.3 51.1h0M67.7 72.7h0M63.1 48.3h0M58.4 84.2h0M72.8 74.7h0M98.5 28.3h0M88.0 63.4h0M75.9 89.2h0M65.4 82.6h0M104.7 92.3h0M88.5 68.1h0M54.8 80.4h0M102.0 87.0h0M70.4 70.4h0M79.3 71.5h0M34.3 74.2h0M39.1 78.3h0M132.9 60.0h0M71.7 76.9h0M79.3 72.2h0M70.8 78.4h0M61.7 32.2h0M74.1 85.6h0M83.1 81.5h0M77.0 88.7h0M64.7 80.2h0M53.5 43.6h0M95.2 46.7h0M94.3 115.2h0M89.7 81.0h0M53.1 58.4h0M57.1 68.6h0M94.5 73.6h0M47.3 72.6h0M62.0 90.2h0M82.2 106.8h0M65.2 75.8h0M62.6 85.1h0M51.0 77.7h0M73.2 63.5h0M57.0 82.2h0M78.4 71.4h0M78.7 69.0h0M91.5 102.9h0M72.1 78.0h0M57.0 74.8h0M69.0 112.9h0M54.0 64.1h0M70.9 72.7h0M113.2 86.6h0M80.1 100.9h0M101.0 51.4h0M73.7 75.7h0M75.0 63.8h0M81.3 74.8h0M61.0 88.9h0M66.0 72.6h0M19.0 70.3h0M69.9 71.6h0M66.4 64.0h0M63.2 49.5h0M102.7 87.8h0M77.3 67.5h0M81.8 61.0h0M68.4 64.0h0M72.5 78.3h0M66.2 94.6h0M103.6 71.8h0M62.2 106.9h0M18.6 89.1h0M16.5 75.7h0M72.0 91.1h0M108.1 94.6h0M87.4 73.6h0M84.1 89.0h0M3.4 97.9h0M32.6 120.4h0M77.2 41.0h0M81.2 74.0h0M96.6 66.3h0M76.6 80.4h0M72.1 54.3h0M96.5 71.8h0M67.6 85.2h0M88.0 97.6h0M63.2 78.0h0M71.8 81.5h0M55.8 72.6h0M64.3 71.4h0M69.2 81.9h0M73.1 44.5h0M63.7 56.1h0M72.5 74.8h0M148.3 89.3h0M80.3 51.5h0M64.6 43.4h0M89.5 85.0h0M62.2 68.3h0M59.4 67.8h0M87.8 103.2h0M76.2 58.4h0M94.6 68.1h0M80.9 77.3h0M69.1 67.5h0M88.0 60.1h0M78.9 116.9h0M74.5 63.8h0M79.6 82.8h0M60.4 80.2h0M80.8 74.8h0M82.4 76.9h0M67.2 62.6h0M54.7 78.0h0M66.0 63.3h0M33.7 70.0h0M54.1 73.7h0M88.7 77.0h0M58.2 22.6h0M60.6 76.1h0M80.7 65.5h0M92.5 90.2h0M79.5 94.0h0M71.3 74.5h0M67.3 67.2h0M70.1 94.0h0M44.5 11.5h0M79.5 60.3h0M38.4 93.3h0M86.0 84.5h0M57.2 50.5h0M61.4 65.9h0M70.6 86.0h0M85.8 75.2h0M71.9 76.8h0M81.2 137.3h0M59.0 25.2h0M104.9 76.3h0M53.4 75.0h0M85.1 62.0h0M70.4 72.2h0M76.1 91.7h0M87.7 47.4h0M85.0 81.5h0M74.4 72.8h0M17.2 96.3h0M98.3 96.3h0M44.3 59.4h0M63.4 54.9h0M67.4 64.8h0M63.0 80.0h0M111.8 46.0h0M68.1 43.7h0M18.4 13.0h0M131.7 22.7h0M83.9 46.5h0M39.1 12.6h0M98.5 78.3h0M97.2 48.0h0M73.0 8.5h0M45.9 125.4h0M44.1 35.5h0M83.3 3.8h0M44.7 141.4h0M111.3 64.8h0M117.5 89.6h0M6.6 103.1h0M140.6 56.5h0M148.4 147.7h0M80.5 88.1h0M119.9 34.3h0M18.2 142.2h0M15.0 49.0h0M79.3 121.8h0M131.8 10.3h0M120.3 141.2h0M74.1 82.7h0M126.8 86.4h0M90.3 125.3h0M93.0 15.9h0M17.0 42.4h0M54.9 141.8h0M41.1 65.5h0M67.9 64.8h0M87.3 9.0h0M83.3 144.2h0M87.0 95.7h0M42.4 21.0h0M80.0 20.9h0M64.0 123.6h0M111.3 21.2h0M68.8 78.4h0M79.5 12.5h0M143.2 26.0h0M134.1 79.1h0M140.7 16.5h0M95.9 119.3h0M20.3 52.6h0M13.6 118.1h0M4.0 141.9h0M42.9 147.6h0M48.4 37.1h0M106.6 51.0h0M118.3 4.2h0M24.3 147.2h0M7.5 64.0h0M42.7 129.5h0M19.8 62.7h0M62.0 113.7h0M128.2 14.8h0M18.3 79.6h0M28.9 45.9h0M32.2 57.4h0M119.0 17.2h0M21.8 45.2h0M146.7 46.7h0M111.5 26.8h0M94.7 144.3h0M150.4 26.9h0M140.0 118.2h0M15.8 20.4h0M90.8 63.1h0M98.7 86.8h0M122.5 30.8h0M10.3 9.4h0M106.5 68.3h0M34.8 19.0h0M41.7 137.4h0M126.9 43.0h0M140.5 67.5h0M17.0 52.4h0M66.3 42.5h0M10.5 27.6h0M77.7 115.4h0M38.9 120.7h0M91.2 32.8h0M125.9 19.3h0M130.0 28.0h0M144.0 55.6h0M54.0 36.6h0M12.0 41.5h0M101.0 143.3h0M38.2 50.2h0M79.7 122.4h0M46.4 61.9h0M68.5 101.8h0M10.9 80.7h0M77.0 41.5h0M120.0 131.9h0M85.7 136.1h0M121.5 26.3h0M97.3 109.2h0M31.7 116.5h0M53.3 46.8h0M118.2 4.5h0M126.7 66.1h0M81.4 48.3h0M98.1 9.9h0M94.4 31.2h0M95.7 111.7h0M70.0 11.5h0M9.1 62.6h0M41.6 66.7h0M111.8 7.6h0M7.0 42.8h0M52.2 116.1h0M7.3 145.0h0M148.9 55.2h0M128.7 19.2h0M123.3 47.4h0M88.6 100.3h0M2.3 3.0h0M70.8 3.0h0M127.1 134.1h0M52.5 49.1h0M130.5 134.0h0M7.8 43.1h0M45.0 28.8h0M52.6 84.1h0M26.1 60.3h0M35.4 65.1h0M101.1 68.0h0M28.8 108.4h0M102.5 70.2h0M9.8 22.8h0M105.7 96.5h0M98.2 46.7h0M122.7 118.1h0M29.7 74.6h0M130.3 115.4h0M121.0 149.9h0M78.5 123.8h0M87.4 47.7h0M16.9 72.3h0M118.9 15.4h0M71.9 14.4h0M67.5 57.1h0M127.7 30.7h0" stroke="#565a6a" stroke-width="0.8" stroke-linecap="round" fill="none"/><path d="M66.0 73.5h0M80.6 62.3h0M127.7 88.2h0M65.0 72.9h0M40.8 71.9h0M121.7 87.3h0M61.1 68.9h0M69.6 67.3h0M82.3 76.5h0M83.7 65.3h0M81.2 77.6h0M54.1 92.5h0M74.8 95.0h0M92.0 70.5h0M39.5 75.3h0M91.1 78.6h0M69.5 90.1h0M62.8 73.3h0M77.7 74.0h0M81.9 81.4h0M55.4 69.7h0M59.7 135.4h0M59.3 43.5h0M19.7 119.1h0M93.6 86.7h0M86.4 81.1h0M81.4 71.4h0M76.1 70.9h0M53.1 48.5h0M75.1 77.6h0M69.4 79.9h0M116.3 35.4h0M69.2 71.8h0M45.4 55.6h0M70.6 73.6h0M135.9 108.0h0M93.3 77.3h0M88.3 76.3h0M125.4 38.5h0M81.5 76.6h0M101.6 123.8h0M56.5 85.4h0M51.8 80.3h0M55.0 42.6h0M83.3 72.6h0M81.7 82.2h0M96.5 81.8h0M72.2 94.2h0M77.0 83.0h0M76.5 144.1h0M61.8 61.4h0M99.8 76.7h0M69.2 79.9h0M63.3 86.1h0M122.0 71.2h0M92.8 41.0h0M83.9 86.4h0M65.4 58.3h0M84.0 72.9h0M61.2 83.9h0M64.8 62.0h0M76.3 70.4h0M57.8 65.3h0M97.4 44.8h0M66.8 76.1h0M76.6 69.0h0M79.6 71.9h0M96.7 78.7h0M49.8 64.2h0M82.8 75.3h0M71.9 74.7h0M54.6 44.1h0M65.6 72.3h0M79.9 92.4h0M101.0 101.1h0M72.5 71.1h0M77.8 73.8h0M54.6 89.5h0M96.7 49.0h0M69.7 73.5h0M144.7 80.3h0M77.0 73.9h0M40.0 101.4h0M96.9 66.2h0M71.7 72.4h0M53.8 64.1h0M74.0 64.5h0M96.2 68.8h0M89.5 83.7h0M46.0 81.9h0M64.5 65.3h0M52.6 94.6h0M64.4 68.8h0M52.7 56.1h0M74.1 76.8h0M60.0 81.9h0M75.6 77.4h0M65.8 75.9h0M69.1 63.1h0M45.2 121.4h0M84.2 76.7h0M66.3 78.0h0M83.2 71.9h0M66.0 77.8h0M72.3 59.8h0M65.5 66.0h0M82.6 81.7h0M69.2 93.1h0M80.4 58.6h0M69.8 76.6h0M61.2 92.5h0M43.8 113.4h0M85.1 57.2h0M59.9 16.6h0M36.8 70.2h0M73.3 91.0h0M95.9 71.8h0M78.9 71.1h0M70.9 34.2h0M80.5 80.4h0M79.2 85.3h0M68.8 77.2h0M83.4 79.4h0M92.5 84.5h0M63.2 71.5h0M70.4 31.7h0M60.3 53.2h0M95.4 114.6h0M73.4 68.6h0M33.2 68.9h0M63.1 79.0h0M64.3 78.1h0M79.9 94.4h0M71.2 77.4h0M62.8 151.1h0M80.2 78.2h0M74.8 65.1h0M58.7 77.5h0M72.1 56.5h0M84.3 76.5h0M80.6 97.8h0M89.6 78.5h0M24.3 15.1h0M85.5 79.0h0M64.7 80.4h0M55.9 58.8h0M75.4 95.2h0M55.6 61.2h0M84.1 71.2h0M93.3 76.7h0M104.6 151.4h0M65.8 65.4h0M89.9 44.8h0M62.6 84.9h0M75.0 62.9h0M83.5 52.9h0M90.9 85.0h0M78.5 57.3h0M91.8 68.0h0M9.5 94.7h0M71.2 85.5h0M91.0 60.3h0M73.6 62.3h0M87.4 84.9h0M48.0 58.0h0M63.2 64.3h0M92.7 78.8h0M90.7 77.3h0M53.6 59.6h0M90.3 80.2h0M136.6 69.4h0M31.2 52.7h0M50.5 88.9h0M75.1 75.0h0M76.9 60.1h0M86.0 78.1h0M65.1 102.7h0M81.4 87.7h0M70.9 77.8h0M58.9 44.3h0M65.6 71.0h0M114.1 59.5h0M84.9 70.9h0M75.8 50.7h0M79.9 77.5h0M70.9 81.8h0M76.9 71.4h0M113.6 77.2h0M73.7 37.0h0M76.1 70.7h0M76.1 74.1h0M75.2 93.6h0M69.4 70.9h0M85.6 75.9h0M68.4 83.0h0M69.2 60.4h0M80.2 79.7h0M84.1 58.1h0M69.1 83.9h0M77.2 81.3h0M86.5 82.0h0M80.9 63.3h0M67.3 84.9h0M25.2 116.5h0M70.9 69.5h0M80.8 73.3h0M84.2 63.9h0M67.7 74.3h0M72.8 77.6h0M83.7 63.4h0M70.6 75.0h0M66.6 70.2h0M70.1 69.4h0M71.7 78.5h0M66.6 77.7h0M47.7 74.5h0M72.9 51.5h0M46.6 56.0h0M81.6 88.5h0M74.1 72.7h0M139.9 89.9h0M81.5 95.5h0M76.0 68.3h0M88.2 80.8h0M77.1 63.9h0M62.3 85.6h0M77.5 71.2h0M82.2 71.4h0M63.7 53.2h0M93.1 75.7h0M46.9 144.8h0M78.9 68.0h0M46.1 73.1h0M94.7 81.2h0M68.7 78.8h0M49.2 58.2h0M59.0 105.5h0M63.5 75.3h0M76.8 69.7h0M120.2 58.9h0M81.6 68.9h0M63.8 51.6h0M77.5 94.8h0M92.9 68.9h0M136.1 57.4h0M80.1 65.8h0M56.9 81.3h0M76.9 89.4h0M55.3 50.4h0M84.8 82.2h0M64.6 77.2h0M75.4 97.1h0M102.5 65.0h0M64.3 81.4h0M56.8 48.5h0M73.7 58.6h0M67.3 67.3h0M64.1 103.8h0M56.8 125.9h0M55.8 86.7h0M74.2 66.3h0M69.4 74.9h0M65.5 77.5h0M69.6 83.3h0M66.4 57.7h0M78.4 80.9h0M70.5 51.4h0M74.1 50.9h0M76.5 70.3h0M70.8 87.4h0M58.0 71.8h0M18.4 40.9h0M71.5 116.4h0M81.0 66.2h0M60.8 68.8h0M71.4 77.2h0M73.9 74.9h0M118.5 43.8h0M88.1 83.3h0M73.7 74.0h0M97.4 73.2h0M70.8 69.6h0M81.3 70.5h0M41.2 92.3h0M87.9 82.7h0M49.6 64.3h0M95.8 71.7h0M76.7 72.7h0M66.2 80.2h0M72.9 75.7h0M71.3 82.8h0M51.0 107.9h0M45.3 132.9h0M83.5 66.7h0M60.0 90.8h0M70.8 50.5h0M91.1 82.7h0M43.4 101.1h0M95.4 79.2h0M86.2 104.6h0M96.7 106.0h0M56.1 82.4h0M67.6 67.6h0M69.0 63.0h0M78.4 99.3h0M70.6 73.6h0M68.2 88.0h0M79.0 57.9h0M51.5 13.9h0M69.8 87.9h0M78.3 80.0h0M79.1 79.7h0M80.1 94.0h0M65.6 85.6h0M85.0 75.0h0M93.8 88.8h0M69.5 72.0h0M78.0 79.4h0M46.3 101.9h0M69.7 74.9h0M87.3 52.0h0M73.1 75.5h0M86.5 64.5h0M43.2 76.8h0M58.4 72.3h0M74.4 71.9h0M75.7 71.6h0M73.2 88.9h0M71.5 61.6h0M79.7 28.0h0M73.8 70.6h0M81.3 72.8h0M57.1 69.9h0M114.4 42.7h0M83.6 80.1h0M61.5 54.8h0M69.1 86.3h0M72.7 82.0h0M62.9 84.7h0M71.2 71.2h0M86.7 65.6h0M63.5 74.3h0M72.2 63.3h0M70.9 49.7h0M117.7 103.0h0M57.3 81.7h0M71.7 64.9h0M63.9 59.4h0M87.6 75.1h0M109.4 59.1h0M78.1 59.1h0M94.2 26.9h0M10.6 91.9h0M60.3 105.9h0M53.8 61.2h0M1.3 119.3h0M17.3 109.4h0M40.3 124.9h0M1.8 83.8h0M64.9 77.9h0M7.0 144.8h0M56.6 118.6h0M113.3 93.7h0M39.6 10.1h0M10.1 16.5h0M63.1 116.4h0M124.2 67.0h0M121.5 145.5h0M127.3 130.5h0M120.3 2.7h0M106.1 11.6h0M145.3 33.5h0M28.7 137.1h0M104.5 23.7h0M91.5 1.4h0M138.9 145.8h0M27.2 8.1h0M126.5 48.0h0M14.3 63.9h0M18.4 140.3h0M92.9 27.1h0M22.6 129.4h0M33.1 63.7h0M21.0 98.9h0M46.3 99.7h0M120.0 134.5h0M55.2 71.4h0M16.1 117.9h0M109.9 76.1h0M146.1 52.2h0M65.3 131.3h0M58.0 98.6h0M99.2 22.6h0M137.1 132.1h0M42.6 148.1h0M151.1 113.3h0M91.4 148.6h0M104.8 108.3h0M22.8 92.3h0M150.4 125.0h0M33.2 73.7h0M56.3 56.8h0M3.7 78.7h0M86.8 107.8h0M86.1 77.9h0M71.0 32.4h0M111.0 120.5h0M127.6 72.6h0M74.3 140.5h0M80.5 82.8h0M77.7 88.9h0M67.7 4.4h0M83.3 89.9h0M38.6 56.9h0M23.5 44.6h0M85.5 52.9h0M84.9 109.8h0M92.9 83.1h0M50.2 14.5h0M144.5 150.4h0M113.4 95.2h0M127.6 5.6h0M15.1 47.2h0M10.8 107.8h0M39.9 135.8h0M134.9 28.4h0M30.5 88.2h0M126.6 83.2h0M97.6 71.5h0M4.7 42.1h0M70.3 52.2h0M151.1 50.4h0M30.7 33.5h0M34.6 107.6h0M53.1 96.5h0M89.3 74.5h0M131.0 54.6h0M23.2 123.1h0M134.9 111.3h0M63.0 145.5h0M10.9 129.2h0M38.1 100.7h0M107.9 134.1h0M58.9 100.3h0M30.0 113.5h0M21.1 41.7h0M119.0 135.2h0M27.9 101.3h0M67.9 71.7h0M35.2 127.1h0M72.0 117.1h0M150.6 24.2h0M20.8 105.7h0M20.2 98.7h0M148.1 40.0h0M126.9 65.9h0M123.1 93.0h0M115.9 61.4h0M34.9 146.1h0M32.4 11.9h0M68.2 113.4h0M81.0 37.1h0M65.6 108.0h0M39.3 19.8h0M66.5 5.3h0M27.4 148.5h0M143.9 110.9h0M75.3 46.0h0M121.1 21.5h0M64.9 41.2h0M91.5 143.0h0M113.6 102.0h0M74.1 31.1h0M8.5 69.7h0M19.7 75.4h0M94.5 143.1h0M43.5 13.9h0M71.2 35.2h0M141.9 104.4h0M48.0 134.5h0M145.8 76.2h0M58.1 30.5h0" stroke="#454854" stroke-width="0.8" stroke-linecap="round" fill="none"/><path d="M112.7 83.1h0M73.3 93.8h0M85.3 74.0h0M83.2 85.1h0M68.4 85.1h0M86.0 80.9h0M98.1 74.0h0M75.8 74.0h0M73.2 76.9h0M48.4 47.6h0M89.0 58.2h0M75.7 79.9h0M97.7 70.2h0M52.8 92.4h0M80.7 86.5h0M20.2 56.6h0M1.0 100.4h0M92.0 77.6h0M76.3 78.7h0M82.9 70.7h0M69.4 56.2h0M68.1 87.9h0M74.6 52.7h0M85.5 69.7h0M93.2 90.8h0M85.4 64.1h0M64.2 72.6h0M70.7 71.7h0M72.5 89.5h0M57.6 94.9h0M77.6 78.9h0M68.5 87.5h0M70.2 66.9h0M74.9 71.4h0M72.3 69.5h0M73.5 88.9h0M115.3 133.9h0M122.1 34.0h0M60.6 83.4h0M66.0 63.3h0M76.4 70.3h0M66.6 81.1h0M71.6 88.4h0M112.9 46.7h0M54.3 51.3h0M64.7 71.7h0M77.9 79.4h0M83.7 76.9h0M76.7 76.0h0M150.2 22.1h0M73.5 86.5h0M71.8 88.7h0M131.2 64.5h0M122.6 77.0h0M43.0 69.1h0M68.4 55.7h0M93.3 79.3h0M73.2 70.5h0M82.6 73.9h0M79.0 82.1h0M114.9 18.1h0M9.8 74.6h0M68.7 42.7h0M132.3 95.3h0M69.8 65.5h0M129.3 94.7h0M64.8 74.6h0M87.5 70.2h0M65.8 81.9h0M70.6 77.9h0M64.1 73.5h0M73.9 70.3h0M108.5 135.1h0M67.3 68.4h0M77.0 84.7h0M82.7 60.8h0M95.4 86.0h0M62.7 26.1h0M66.3 57.6h0M92.5 75.4h0M64.8 88.1h0M72.6 78.9h0M67.2 62.2h0M67.3 30.3h0M98.7 107.8h0M66.0 66.1h0M56.7 80.0h0M80.0 69.6h0M82.7 80.4h0M84.0 84.2h0M66.0 82.1h0M54.8 71.4h0M81.0 73.1h0M75.8 69.1h0M71.2 68.1h0M67.3 78.6h0M83.9 79.4h0M71.9 80.2h0M60.4 110.7h0M83.4 79.5h0M92.1 74.2h0M66.8 70.7h0M94.3 62.3h0M69.9 72.9h0M136.5 78.1h0M79.9 67.0h0M65.2 86.3h0M53.4 63.1h0M62.7 78.7h0M51.7 55.3h0M77.1 74.8h0M61.4 48.4h0M72.4 66.9h0M80.9 78.5h0M115.0 76.5h0M82.2 66.7h0M86.7 79.8h0M59.3 88.4h0M118.5 151.2h0M74.0 62.6h0M62.5 70.8h0M64.6 81.9h0M64.6 76.4h0M83.9 69.3h0M64.2 96.8h0M71.2 106.3h0M73.3 69.6h0M63.4 83.4h0M81.8 85.1h0M135.8 67.1h0M63.1 76.9h0M67.9 62.7h0M62.3 92.1h0M47.5 24.1h0M74.2 73.0h0M111.9 120.5h0M138.0 75.8h0M78.8 92.6h0M71.2 64.3h0M107.1 128.0h0M69.2 77.1h0M78.0 73.9h0M61.1 61.3h0M75.3 73.3h0M84.0 99.3h0M66.8 75.6h0M76.3 76.2h0M83.4 78.8h0M75.3 76.0h0M86.3 66.7h0M71.5 50.0h0M63.6 102.0h0M65.8 91.9h0M46.8 64.0h0M90.0 69.4h0M73.2 70.8h0M91.1 81.5h0M46.3 61.5h0M66.9 87.7h0M74.6 70.2h0M42.6 56.2h0M63.0 65.9h0M79.6 101.2h0M50.0 114.4h0M21.6 56.4h0M68.1 45.5h0M76.1 55.3h0M81.9 67.8h0M67.2 68.3h0M74.1 83.0h0M79.8 72.0h0M80.1 70.5h0M83.8 81.4h0M70.7 78.9h0M141.9 34.1h0M75.6 90.8h0M59.1 70.5h0M66.7 73.2h0M66.2 90.1h0M70.9 82.1h0M51.1 81.2h0M61.0 73.3h0M83.0 80.9h0M84.5 80.8h0M124.8 78.0h0M85.3 90.2h0M76.2 55.9h0M148.4 74.2h0M74.1 72.4h0M91.8 43.7h0M59.4 111.1h0M81.9 127.8h0M56.3 89.8h0M71.3 54.1h0M61.5 73.2h0M53.8 60.8h0M67.6 62.4h0M83.9 37.4h0M38.3 41.4h0M92.6 85.1h0M53.9 67.5h0M82.5 62.2h0M82.2 76.0h0M59.2 79.9h0M105.4 44.7h0M66.3 55.0h0M91.8 64.0h0M77.9 74.7h0M70.0 67.7h0M79.5 71.0h0M54.5 80.8h0M39.6 57.6h0M53.0 93.6h0M78.5 77.5h0M76.7 77.4h0M73.7 83.5h0M76.2 86.6h0M69.9 66.7h0M12.8 44.4h0M46.9 79.7h0M63.6 60.1h0M69.9 83.6h0M74.2 67.8h0M44.2 85.2h0M117.2 66.6h0M67.0 77.0h0M66.1 97.3h0M63.1 83.2h0M89.7 81.0h0M83.3 80.5h0M86.8 99.1h0M76.5 77.9h0M72.2 112.0h0M87.6 94.4h0M79.1 48.6h0M63.4 74.9h0M85.0 74.9h0M71.3 63.7h0M83.0 104.3h0M74.1 98.9h0M55.8 83.1h0M81.6 79.0h0M104.9 58.1h0M75.0 87.7h0M111.6 33.2h0M83.9 71.8h0M48.1 82.2h0M93.0 81.8h0M71.8 79.8h0M66.9 83.2h0M51.4 31.3h0M76.1 80.1h0M79.8 79.5h0M92.5 64.3h0M89.7 41.7h0M78.0 61.2h0M70.2 80.7h0M79.9 77.1h0M7.4 38.1h0M78.8 75.5h0M60.8 69.3h0M110.9 74.6h0M85.1 72.9h0M68.3 65.8h0M18.1 111.7h0M66.9 107.4h0M38.8 77.0h0M63.6 59.8h0M79.5 70.6h0M95.4 77.4h0M82.8 47.4h0M75.6 73.2h0M81.6 100.7h0M78.0 123.2h0M76.1 88.1h0M83.3 60.9h0M85.8 79.9h0M57.2 73.0h0M76.7 81.4h0M82.9 67.6h0M90.6 78.8h0M49.7 97.5h0M73.1 74.6h0M22.8 63.5h0M64.1 78.7h0M75.8 76.5h0M69.3 86.3h0M65.9 46.3h0M77.1 89.9h0M76.7 82.0h0M68.8 65.3h0M84.4 53.7h0M76.7 68.0h0M85.1 103.7h0M48.7 80.4h0M80.0 62.9h0M47.7 60.2h0M24.7 117.9h0M48.5 63.4h0M80.8 68.1h0M70.7 73.3h0M72.5 67.5h0M79.3 72.4h0M96.8 114.9h0M77.8 92.1h0M65.1 9.3h0M70.9 72.7h0M72.9 72.7h0M70.4 88.0h0M74.3 73.0h0M65.5 78.9h0M76.7 81.0h0M82.7 105.6h0M76.7 86.5h0M79.2 69.5h0M83.5 54.4h0M112.9 62.8h0M58.5 80.5h0M89.5 75.3h0M77.4 71.5h0M66.9 105.0h0M78.7 85.9h0M93.2 74.6h0M92.2 82.6h0M128.8 64.9h0M67.0 59.1h0M80.3 77.2h0M68.0 82.2h0M77.0 79.4h0M91.7 61.0h0M81.5 101.0h0M77.8 116.6h0M84.1 81.0h0M83.8 76.4h0M65.6 77.0h0M70.3 82.4h0M76.2 84.6h0M74.3 82.8h0M80.4 45.0h0M47.1 72.2h0M67.5 63.9h0M70.1 93.2h0M77.8 50.5h0M69.0 78.7h0M79.8 68.7h0M86.0 67.2h0M81.1 77.0h0M103.2 91.9h0M75.0 68.6h0M70.1 85.1h0M72.2 70.6h0M69.2 61.6h0M81.2 92.8h0M64.9 80.2h0M58.4 80.1h0M88.3 91.6h0M59.3 38.6h0M70.5 75.9h0M64.8 74.2h0M71.3 82.4h0M75.3 84.3h0M87.3 75.8h0M76.6 63.7h0M91.7 71.9h0M74.3 65.3h0M80.5 63.2h0M90.2 95.4h0M99.2 59.0h0M123.4 119.0h0M38.7 40.3h0M45.3 37.9h0M31.8 115.6h0M83.6 85.8h0M82.0 69.2h0M86.7 56.0h0M81.4 81.6h0M115.4 82.6h0M69.9 60.8h0M75.7 55.9h0M94.1 72.6h0M71.4 81.9h0M118.4 52.5h0M72.8 71.9h0M50.9 82.3h0M47.0 80.6h0M77.4 47.3h0M74.0 72.8h0M42.2 78.4h0M44.4 115.7h0M80.1 45.5h0M67.5 77.0h0M96.5 55.8h0M55.9 75.5h0M75.6 68.4h0M46.0 99.6h0M73.0 71.8h0M65.9 77.5h0M56.7 69.3h0M85.7 65.9h0M74.2 59.4h0M65.7 92.0h0M77.2 50.9h0M76.6 87.3h0M69.3 70.5h0M37.2 98.1h0M48.3 69.9h0M58.7 75.6h0M78.1 63.4h0M53.6 97.4h0M65.2 62.7h0M88.7 28.7h0M70.2 77.2h0M41.8 109.1h0M41.3 47.8h0M80.0 79.6h0M138.4 133.3h0M86.0 59.5h0M27.3 141.1h0M64.5 63.7h0M100.3 99.2h0M39.6 148.0h0M140.3 148.9h0M15.8 96.2h0M125.8 79.7h0M129.9 37.5h0M52.1 101.3h0M7.5 16.9h0M123.1 86.3h0M121.8 52.8h0M112.8 138.4h0M139.9 100.3h0M122.8 33.7h0M102.8 23.4h0M114.1 101.3h0M117.9 18.8h0M17.6 68.0h0M51.1 76.0h0M14.7 140.0h0M113.7 63.4h0M149.6 74.6h0M82.9 96.7h0M62.7 129.3h0M81.9 102.8h0M60.3 62.3h0M60.7 11.3h0M81.3 143.6h0M125.3 18.1h0M80.3 94.2h0M74.7 75.4h0M8.9 95.8h0M7.1 102.9h0M4.4 131.6h0M77.4 104.9h0M6.7 87.3h0M21.8 51.2h0M4.1 53.9h0M42.9 134.4h0M116.2 11.7h0M55.5 117.8h0M61.9 24.1h0M90.4 41.2h0M58.5 96.5h0M67.8 129.2h0M56.6 112.8h0M88.5 62.6h0M107.4 75.9h0M2.1 30.3h0M62.0 134.0h0M145.3 105.8h0M58.6 74.5h0M1.9 119.0h0M2.5 85.9h0M38.8 138.6h0M100.6 11.7h0M46.4 107.6h0M107.6 68.9h0M77.9 128.3h0M77.5 52.3h0M53.7 83.0h0M86.7 23.8h0M37.9 124.7h0M63.9 43.2h0M147.3 97.4h0M103.2 114.2h0M90.7 21.2h0M100.5 39.6h0M148.1 92.7h0M117.0 105.6h0M18.9 55.0h0M28.3 139.5h0M134.5 136.0h0M92.4 150.2h0M23.4 120.7h0M146.4 65.0h0M26.1 95.8h0M75.9 108.1h0M47.0 87.1h0M114.6 116.9h0M148.4 50.5h0M29.7 56.8h0M23.0 39.3h0M33.9 106.4h0M139.7 37.3h0M25.5 140.2h0M120.6 24.5h0M131.3 48.9h0M88.5 57.8h0M67.7 103.4h0M147.4 56.2h0M138.1 95.9h0M89.2 63.5h0M111.3 84.1h0M95.4 100.5h0M60.5 33.3h0M57.6 143.6h0M145.2 99.7h0M38.5 28.0h0M15.1 2.1h0M22.6 78.2h0M148.2 108.1h0M115.7 107.5h0M62.3 113.6h0M23.3 81.6h0M39.8 26.2h0M14.2 110.4h0M40.7 22.8h0M59.8 14.9h0M6.7 24.7h0M107.1 141.5h0M103.7 112.2h0M122.5 129.4h0M92.6 56.7h0M19.8 107.6h0M8.7 44.9h0M68.6 113.8h0M59.9 141.8h0M63.3 88.6h0M18.6 136.5h0M82.2 126.1h0M139.6 48.8h0M83.2 117.8h0M83.5 95.1h0M23.9 119.4h0M105.7 64.4h0M128.2 18.7h0M86.6 129.5h0M77.4 43.3h0M95.2 36.1h0M81.1 133.0h0M91.1 72.7h0M107.6 21.4h0M14.5 83.2h0M78.8 136.4h0M82.8 74.5h0M139.8 79.5h0M48.9 136.1h0M150.5 72.6h0M74.9 13.6h0M121.9 85.3h0" stroke="#4a4e5c" stroke-width="0.8" stroke-linecap="round" fill="none"/><path d="M70.8 73.9h0M80.4 74.8h0M91.5 73.8h0M101.3 62.6h0M96.5 106.5h0M106.7 93.1h0M92.7 51.6h0M75.1 70.4h0M69.9 62.6h0M79.6 75.8h0M89.0 65.4h0M92.7 48.9h0M30.6 54.6h0M65.2 66.9h0M96.9 81.0h0M63.7 78.2h0M74.8 86.6h0M53.3 106.4h0M79.3 65.3h0M71.9 62.7h0M76.7 68.5h0M88.2 55.5h0M59.8 61.0h0M75.2 67.4h0M109.8 126.0h0M62.4 42.4h0M80.7 89.5h0M89.0 64.3h0M69.0 87.7h0M65.7 76.9h0M81.2 73.3h0M68.9 89.7h0M58.3 105.1h0M65.0 80.8h0M75.8 69.1h0M77.0 63.9h0M108.9 61.0h0M60.7 76.9h0M76.9 99.1h0M70.6 76.9h0M70.9 86.7h0M42.9 25.8h0M75.9 19.2h0M66.2 80.9h0M73.6 75.6h0M64.8 74.9h0M37.8 61.7h0M64.6 58.5h0M78.0 83.0h0M59.3 91.4h0M58.5 78.8h0M86.0 77.4h0M55.3 72.5h0M80.0 108.2h0M78.7 79.8h0M85.6 27.2h0M81.5 68.4h0M69.0 74.6h0M72.2 85.4h0M80.3 78.8h0M67.1 38.4h0M98.1 87.3h0M45.6 62.1h0M95.3 61.9h0M74.2 82.5h0M87.6 88.8h0M81.5 70.0h0M85.7 101.7h0M82.2 77.7h0M40.9 60.0h0M79.8 75.6h0M46.8 49.3h0M69.7 63.9h0M107.2 84.1h0M68.2 78.5h0M78.8 82.8h0M107.4 60.4h0M78.5 67.8h0M68.5 74.8h0M70.7 68.5h0M109.7 42.5h0M55.9 1.5h0M81.0 60.4h0M112.4 41.2h0M83.2 59.4h0M82.9 81.2h0M78.0 64.8h0M63.8 98.6h0M67.5 120.7h0M76.7 87.6h0M76.0 77.7h0M74.3 69.0h0M101.1 43.4h0M57.4 77.5h0M73.7 76.6h0M95.8 87.3h0M76.5 70.4h0M55.6 73.8h0M128.2 91.5h0M30.5 115.9h0M95.4 92.2h0M69.0 74.9h0M75.9 70.9h0M64.7 79.6h0M76.3 79.7h0M78.5 28.9h0M61.8 65.3h0M50.5 116.3h0M89.4 77.5h0M64.2 99.9h0M85.2 47.4h0M94.2 98.2h0M64.6 62.7h0M58.0 52.9h0M79.7 66.3h0M79.3 90.6h0M70.9 81.1h0M40.6 84.4h0M43.2 78.5h0M67.8 67.5h0M87.8 74.9h0M93.6 86.4h0M51.3 79.5h0M41.0 77.6h0M62.5 79.3h0M78.2 77.7h0M66.7 79.0h0M61.7 67.2h0M48.6 22.5h0M57.9 100.1h0M44.6 52.5h0M67.6 78.8h0M86.2 81.6h0M97.7 63.0h0M150.3 29.9h0M63.1 73.6h0M72.7 63.4h0M84.1 70.2h0M89.3 74.3h0M73.1 80.7h0M69.7 72.6h0M79.7 90.3h0M45.3 55.6h0M76.7 31.7h0M84.1 74.2h0M60.5 75.6h0M62.2 97.7h0M65.7 71.1h0M96.3 108.7h0M70.4 54.8h0M91.9 84.0h0M65.8 75.2h0M96.2 67.0h0M76.4 77.5h0M91.9 67.5h0M58.8 63.7h0M86.1 72.1h0M73.7 80.6h0M65.1 63.6h0M79.6 72.4h0M91.2 82.9h0M79.6 94.1h0M118.4 106.7h0M84.7 73.6h0M32.0 88.4h0M89.1 90.1h0M64.8 31.7h0M60.1 81.1h0M67.4 60.8h0M67.0 78.1h0M91.0 59.9h0M52.3 82.4h0M67.0 90.4h0M89.9 81.0h0M71.1 62.9h0M61.2 67.4h0M65.6 68.1h0M60.4 101.7h0M58.2 64.3h0M80.6 81.1h0M70.9 88.7h0M67.3 77.7h0M65.7 59.6h0M59.3 56.9h0M63.8 74.6h0M76.9 84.1h0M77.9 95.3h0M111.0 79.0h0M80.6 130.5h0M64.6 51.7h0M81.3 67.3h0M33.3 80.1h0M76.9 69.5h0M49.8 86.1h0M128.5 109.4h0M69.8 72.4h0M78.1 56.6h0M90.9 77.0h0M69.6 74.3h0M86.1 72.0h0M78.3 90.7h0M60.7 135.8h0M65.2 78.5h0M42.2 31.6h0M77.6 62.1h0M72.3 66.4h0M75.8 82.5h0M81.1 92.3h0M68.3 77.0h0M77.5 99.0h0M68.4 78.3h0M45.3 109.3h0M72.8 68.8h0M77.7 66.7h0M85.9 30.3h0M72.2 83.1h0M71.9 88.9h0M80.2 70.2h0M60.7 57.9h0M68.6 71.8h0M30.3 84.2h0M79.0 80.9h0M104.4 73.1h0M72.0 71.8h0M65.0 67.8h0M93.0 66.3h0M66.1 73.5h0M114.1 53.7h0M100.4 6.1h0M67.2 67.7h0M63.3 79.0h0M53.3 33.6h0M67.3 78.0h0M78.1 73.7h0M100.6 74.2h0M74.7 91.0h0M62.7 57.8h0M89.9 60.9h0M67.1 77.5h0M62.8 49.5h0M64.4 77.9h0M73.7 73.7h0M69.8 89.5h0M67.2 72.4h0M70.0 71.8h0M35.9 99.2h0M60.6 83.3h0M81.3 50.8h0M101.8 89.6h0M136.0 59.9h0M98.2 84.9h0M71.9 60.6h0M94.2 73.2h0M47.4 39.6h0M58.6 73.9h0M48.5 77.3h0M92.7 75.8h0M35.8 70.3h0M3.8 141.4h0M83.1 74.7h0M66.5 71.6h0M71.4 87.3h0M72.3 33.4h0M105.7 85.2h0M77.4 72.6h0M91.9 89.6h0M67.2 85.0h0M56.1 53.0h0M86.8 69.7h0M99.0 104.8h0M59.7 74.2h0M78.2 81.6h0M72.5 80.4h0M74.0 91.6h0M84.5 64.2h0M64.5 79.9h0M71.0 37.4h0M50.0 73.8h0M55.1 76.9h0M60.7 73.7h0M121.9 82.4h0M83.4 75.3h0M76.2 75.0h0M113.7 131.9h0M72.0 86.0h0M73.1 84.7h0M87.7 102.1h0M61.8 41.5h0M56.4 102.2h0M69.7 76.4h0M59.7 106.7h0M56.6 55.9h0M79.2 82.2h0M97.1 72.7h0M43.0 149.2h0M69.7 72.9h0M77.1 66.8h0M41.3 58.8h0M93.3 89.1h0M104.8 97.3h0M78.0 70.2h0M74.6 62.9h0M61.8 78.2h0M88.5 82.2h0M75.5 92.0h0M71.4 76.4h0M65.8 73.2h0M50.2 83.6h0M108.0 97.5h0M118.0 94.9h0M79.2 31.5h0M65.9 74.3h0M83.3 58.0h0M85.3 42.2h0M64.3 64.4h0M64.5 98.3h0M107.3 78.5h0M47.6 50.7h0M54.1 66.4h0M79.7 72.4h0M73.1 87.7h0M73.6 73.1h0M68.3 79.1h0M81.3 74.9h0M69.8 65.7h0M63.5 50.8h0M79.8 86.9h0M92.7 73.5h0M70.8 88.7h0M61.1 79.3h0M108.5 41.1h0M94.7 65.8h0M77.3 88.1h0M65.2 16.2h0M65.4 76.9h0M75.3 74.7h0M77.3 80.0h0M85.8 68.9h0M74.3 91.4h0M59.7 69.4h0M3.1 109.4h0M57.0 80.0h0M94.6 79.0h0M54.2 42.2h0M86.5 57.4h0M75.7 87.2h0M68.5 75.1h0M27.2 109.2h0M80.3 72.0h0M82.6 77.1h0M56.1 81.8h0M71.6 63.9h0M51.9 59.3h0M91.9 83.2h0M74.0 86.0h0M72.2 75.5h0M86.8 77.5h0M49.4 103.4h0M53.8 59.5h0M69.1 76.2h0M57.5 69.0h0M59.1 116.5h0M58.0 102.1h0M59.1 98.6h0M64.6 65.5h0M97.2 86.8h0M73.1 67.9h0M88.9 68.8h0M56.9 64.7h0M83.2 66.8h0M90.7 66.4h0M73.9 76.5h0M68.8 61.3h0M97.4 39.6h0M76.0 61.3h0M50.0 28.5h0M74.2 77.6h0M77.7 81.9h0M78.4 84.5h0M54.4 53.5h0M77.3 86.2h0M68.7 69.6h0M75.5 79.9h0M88.0 65.6h0M75.2 73.3h0M130.1 13.6h0M118.4 36.1h0M110.5 31.3h0M5.1 108.4h0M0.6 53.9h0M62.0 111.3h0M73.1 55.5h0M118.1 118.6h0M58.6 14.1h0M116.1 136.2h0M138.2 10.4h0M150.8 97.7h0M33.7 50.8h0M115.4 39.3h0M139.4 104.0h0M136.1 125.2h0M78.6 94.0h0M18.0 24.7h0M49.5 4.4h0M87.1 142.7h0M68.2 47.8h0M120.4 66.7h0M62.9 38.4h0M49.8 46.2h0M108.2 51.1h0M88.1 22.3h0M29.7 128.5h0M130.3 24.0h0M138.1 47.3h0M141.6 6.3h0M114.3 64.1h0M56.8 72.5h0M140.3 67.1h0M130.6 84.6h0M97.9 39.6h0M12.7 107.6h0M48.1 5.9h0M85.2 28.2h0M88.1 78.1h0M124.5 92.5h0M49.4 28.5h0M151.7 74.1h0M32.0 65.1h0M25.9 145.6h0M141.8 45.4h0M70.1 69.7h0M73.0 151.5h0M131.3 56.0h0M95.4 98.3h0M26.9 83.4h0M67.7 146.5h0M70.1 24.1h0M15.9 46.3h0M26.0 25.6h0M27.3 72.3h0M82.4 88.2h0M22.8 89.4h0M71.7 68.2h0M2.7 93.5h0M108.8 3.0h0M76.7 133.7h0M81.3 120.3h0M3.7 49.7h0M35.2 21.1h0M129.0 122.8h0M138.0 76.9h0M88.7 103.4h0M132.9 130.5h0M150.4 126.5h0M37.9 80.0h0M147.8 20.5h0M40.3 58.7h0M85.9 112.6h0M54.2 7.7h0M129.2 45.0h0M130.1 108.0h0M127.7 94.7h0M71.5 110.8h0M32.8 74.7h0M145.0 148.8h0M39.1 62.3h0M11.4 151.6h0M107.8 32.8h0M134.2 103.8h0M145.9 76.5h0M14.4 124.8h0M101.9 119.7h0M59.4 8.7h0M28.6 85.6h0M105.7 142.9h0M26.4 54.2h0M130.6 5.7h0M51.8 133.1h0M10.4 99.2h0M75.3 30.2h0M4.2 69.0h0M86.2 136.5h0M24.9 17.0h0M68.8 65.3h0M135.0 84.5h0M46.9 141.7h0M58.0 130.1h0M150.6 147.0h0M151.5 55.0h0M111.8 70.4h0M45.5 94.1h0M13.6 45.8h0M132.1 148.8h0M78.9 73.6h0M104.0 132.8h0M56.1 1.1h0M58.1 49.4h0M36.6 121.8h0M73.0 138.2h0M85.3 79.5h0M112.8 104.9h0M104.7 127.8h0M80.4 131.9h0M1.6 51.5h0M9.5 107.1h0M97.7 73.0h0M136.7 142.9h0" stroke="#3a3d48" stroke-width="0.8" stroke-linecap="round" fill="none"/><path d="M70.3 65.9h0M51.0 66.6h0M76.1 67.0h0M71.3 85.6h0M80.7 76.8h0M83.1 67.7h0M81.7 105.9h0M68.5 80.1h0M76.6 73.1h0M96.1 68.6h0M74.6 78.2h0M77.1 72.5h0M95.9 57.3h0M64.1 65.9h0M75.4 70.7h0M100.5 79.0h0M77.5 65.2h0M32.9 5.6h0M83.8 79.5h0M80.5 67.8h0M46.8 104.5h0M48.8 84.0h0M92.4 76.8h0M65.8 79.2h0M4.5 69.2h0M67.9 71.3h0M74.9 78.0h0M68.9 102.2h0M78.0 82.1h0M65.9 69.9h0M70.0 69.3h0M109.1 64.3h0M79.5 83.0h0M66.6 65.5h0M39.9 54.3h0M66.7 70.8h0M61.3 80.4h0M82.4 83.5h0M72.6 84.4h0M96.1 74.7h0M70.3 88.7h0M93.0 72.6h0M79.4 57.7h0M58.8 74.6h0M64.8 82.2h0M55.8 26.3h0M70.1 58.7h0M74.2 73.9h0M75.6 68.0h0M81.4 82.7h0M24.7 82.6h0M112.2 88.1h0M84.2 54.0h0M69.9 86.6h0M71.5 87.6h0M100.5 71.1h0M121.5 99.3h0M91.8 54.5h0M108.5 150.7h0M78.1 64.1h0M45.9 54.4h0M61.1 72.9h0M77.2 82.1h0M86.1 90.4h0M80.4 69.4h0M120.3 68.8h0M63.0 62.0h0M73.6 78.3h0M80.1 85.1h0M73.0 91.6h0M77.9 63.8h0M80.4 105.5h0M78.0 59.0h0M90.3 64.9h0M68.4 77.9h0M62.9 67.8h0M71.7 83.2h0M83.9 59.1h0M125.8 16.7h0M74.8 110.4h0M75.1 62.5h0M79.1 70.8h0M78.3 76.0h0M67.8 75.2h0M71.9 76.2h0M62.1 50.7h0M73.4 51.6h0M71.6 64.4h0M62.9 83.0h0M50.2 74.7h0M113.3 105.5h0M69.1 69.3h0M82.6 66.8h0M75.5 83.6h0M59.8 77.0h0M93.0 83.3h0M52.7 67.4h0M67.7 69.4h0M67.1 60.4h0M123.1 47.4h0M91.6 48.7h0M73.8 71.8h0M57.5 76.8h0M89.8 68.7h0M67.9 86.8h0M78.1 89.5h0M92.8 97.2h0M52.9 65.8h0M91.5 122.5h0M83.4 66.5h0M96.4 82.4h0M78.6 48.9h0M64.9 79.0h0M66.0 77.6h0M91.9 63.3h0M84.0 76.7h0M44.8 95.1h0M72.4 75.8h0M91.4 75.6h0M79.5 78.7h0M76.8 104.2h0M73.1 116.1h0M82.7 79.0h0M77.8 69.7h0M69.0 67.7h0M87.9 54.0h0M71.6 50.6h0M47.4 87.2h0M88.3 65.7h0M77.7 110.5h0M78.7 75.3h0M90.9 85.3h0M76.9 56.4h0M93.0 53.8h0M99.7 75.2h0M74.4 83.6h0M89.6 70.9h0M71.1 96.9h0M72.4 68.1h0M49.7 84.6h0M37.6 32.8h0M102.6 63.4h0M74.8 70.0h0M73.6 61.7h0M87.4 65.5h0M91.1 66.4h0M78.5 75.7h0M74.9 73.0h0M54.9 71.2h0M96.9 99.8h0M53.4 2.1h0M74.9 90.6h0M63.0 66.4h0M37.5 101.3h0M64.7 72.8h0M38.0 36.4h0M94.5 23.1h0M84.1 77.4h0M79.2 74.3h0M104.5 64.4h0M65.0 119.4h0M98.4 83.2h0M133.9 88.1h0M83.9 95.6h0M84.1 79.2h0M91.1 73.4h0M83.7 99.9h0M82.3 91.7h0M72.4 90.2h0M68.0 65.5h0M75.7 78.2h0M89.7 65.8h0M57.8 91.5h0M80.0 75.2h0M93.0 74.9h0M66.4 74.3h0M95.9 80.6h0M83.2 86.1h0M81.7 68.8h0M71.9 87.4h0M65.3 33.4h0M63.4 104.1h0M58.0 72.2h0M70.2 67.2h0M77.1 71.7h0M84.9 121.9h0M96.0 70.6h0M72.5 86.4h0M53.8 91.2h0M99.7 126.2h0M93.5 90.0h0M78.4 82.4h0M89.4 86.7h0M71.7 76.7h0M84.9 57.6h0M74.0 71.5h0M66.4 67.2h0M70.6 88.7h0M104.4 68.7h0M76.9 68.8h0M68.7 67.1h0M64.5 78.2h0M74.3 78.5h0M68.6 81.7h0M47.2 61.6h0M89.4 78.3h0M63.9 66.2h0M97.9 73.6h0M61.8 92.5h0M49.0 76.4h0M121.2 108.9h0M123.2 77.0h0M52.1 76.5h0M79.3 52.5h0M65.5 63.8h0M71.3 73.1h0M80.9 111.4h0M73.3 68.9h0M62.0 76.9h0M82.1 81.0h0M85.9 71.0h0M72.8 69.6h0M93.1 60.7h0M86.7 57.2h0M97.8 96.9h0M60.8 73.3h0M73.2 78.8h0M50.0 80.8h0M70.9 78.8h0M66.9 72.8h0M66.6 40.9h0M80.4 72.4h0M79.1 24.0h0M68.3 74.8h0M86.1 54.6h0M68.7 74.3h0M9.2 71.8h0M66.6 83.9h0M73.8 78.3h0M78.6 87.4h0M65.0 77.1h0M54.1 68.6h0M69.3 84.8h0M120.9 14.3h0M68.2 61.4h0M75.9 88.7h0M93.2 46.5h0M55.9 77.9h0M85.2 34.4h0M63.8 94.4h0M45.1 54.0h0M84.4 66.3h0M89.2 45.1h0M73.4 79.1h0M91.4 55.4h0M51.2 95.3h0M76.4 62.2h0M75.9 70.6h0M83.7 91.0h0M78.1 72.4h0M62.6 70.0h0M84.6 78.4h0M72.1 96.3h0M97.4 77.2h0M72.4 70.0h0M92.3 75.7h0M70.7 70.6h0M86.6 39.0h0M68.8 77.6h0M84.6 88.0h0M70.3 74.2h0M68.8 72.8h0M111.1 56.4h0M74.1 75.4h0M56.1 73.6h0M89.3 45.3h0M76.3 73.9h0M20.1 40.8h0M84.7 88.3h0M59.7 59.6h0M87.7 81.8h0M80.9 71.9h0M81.3 66.6h0M82.2 88.1h0M62.1 47.5h0M76.0 82.9h0M65.4 121.2h0M95.4 108.3h0M71.2 62.1h0M77.8 66.8h0M81.7 73.6h0M75.3 72.0h0M67.7 77.6h0M78.5 78.4h0M84.2 65.4h0M78.5 95.7h0M83.5 24.8h0M38.8 73.5h0M78.3 67.0h0M76.7 75.5h0M74.3 79.0h0M80.4 69.9h0M81.1 53.7h0M64.7 58.5h0M88.8 75.2h0M73.7 81.5h0M75.3 69.7h0M59.8 94.4h0M89.6 82.6h0M77.8 76.7h0M96.3 78.8h0M67.7 35.1h0M73.1 85.7h0M79.9 52.7h0M67.5 71.6h0M78.6 92.8h0M107.8 72.1h0M91.9 71.8h0M51.7 48.2h0M73.3 63.2h0M86.0 60.6h0M53.7 77.1h0M94.9 57.7h0M77.1 71.5h0M76.5 142.5h0M39.2 117.5h0M63.4 93.9h0M67.8 66.3h0M84.7 56.0h0M70.8 73.1h0M74.4 82.3h0M81.0 84.3h0M64.9 56.3h0M29.6 116.2h0M69.2 69.7h0M65.2 73.7h0M71.6 61.2h0M68.0 68.0h0M81.3 62.5h0M56.6 66.5h0M103.2 81.2h0M70.3 67.4h0M77.9 66.7h0M88.9 88.8h0M66.4 77.5h0M93.8 76.7h0M77.5 76.9h0M81.7 38.4h0M67.6 69.7h0M112.1 120.1h0M52.0 81.2h0M61.6 75.1h0M80.2 83.6h0M66.1 88.2h0M74.6 77.8h0M73.1 77.1h0M86.5 30.8h0M57.8 66.1h0M69.3 76.8h0M74.2 70.9h0M65.2 88.4h0M51.5 33.0h0M73.8 84.2h0M77.4 75.8h0M72.9 77.6h0M50.3 14.6h0M58.4 88.3h0M74.9 96.8h0M57.7 106.5h0M70.5 97.4h0M60.3 92.2h0M66.1 84.0h0M82.5 96.9h0M100.4 54.4h0M107.7 94.0h0M70.3 87.9h0M75.4 75.4h0M79.8 67.3h0M86.5 71.9h0M100.6 95.3h0M71.6 77.1h0M74.5 87.6h0M69.0 78.4h0M72.7 89.1h0M66.4 68.6h0M73.0 56.8h0M62.7 72.6h0M81.0 67.2h0M68.7 81.2h0M98.9 53.4h0M77.8 74.2h0M101.8 52.6h0M78.4 62.3h0M109.5 58.1h0M72.3 73.7h0M96.8 27.7h0M80.3 73.1h0M74.1 73.0h0M76.4 75.9h0M122.1 58.3h0M60.2 83.7h0M96.0 102.9h0M56.2 99.4h0M72.5 98.5h0M92.8 74.3h0M73.8 79.4h0M57.2 72.9h0M81.3 80.5h0M75.6 79.9h0M76.3 56.7h0M71.4 79.1h0M73.2 98.3h0M80.2 75.7h0M86.7 84.6h0M72.4 77.2h0M72.9 92.1h0M48.0 50.9h0M44.5 74.3h0M69.4 79.6h0M67.6 78.9h0M73.8 70.5h0M84.9 45.5h0M75.6 68.1h0M64.4 67.9h0M84.0 65.9h0M81.2 70.5h0M63.4 83.0h0M56.9 51.3h0M81.8 54.1h0M63.3 38.1h0M46.7 49.7h0M80.0 74.0h0M68.2 70.0h0M52.0 74.0h0M70.3 78.3h0M86.9 83.9h0M59.9 71.0h0M120.0 62.4h0M30.6 65.9h0M120.8 98.1h0M44.6 101.1h0M75.1 79.1h0M83.9 73.9h0M78.7 71.5h0M126.2 63.1h0M58.9 81.3h0M101.1 69.4h0M64.9 61.0h0M88.0 76.4h0M73.2 75.9h0M45.9 68.6h0M77.5 86.9h0M48.4 87.0h0M70.1 69.7h0M46.5 70.2h0M89.7 72.7h0M70.1 40.6h0M70.4 66.9h0M74.2 87.1h0M57.5 106.4h0M65.8 82.9h0M66.3 78.5h0M69.8 79.2h0M94.1 81.6h0M59.9 45.5h0M67.9 77.0h0M46.5 106.6h0M56.7 71.6h0M70.8 68.2h0M74.6 82.2h0M103.5 78.9h0M69.6 75.2h0M60.4 115.0h0M122.1 123.5h0M81.8 64.4h0M82.4 73.9h0M45.9 84.3h0M36.8 64.6h0M58.7 53.1h0M21.3 37.3h0M104.3 117.8h0" stroke="#8e93a6" stroke-width="0.9" stroke-linecap="round" fill="none"/><path d="M76.2 76.6h0M92.2 59.9h0M80.5 99.7h0M67.5 77.7h0M71.3 82.6h0M95.2 90.9h0M28.5 75.5h0M71.5 131.1h0M113.7 49.2h0M93.0 81.4h0M70.9 91.2h0M52.6 27.3h0M61.6 82.3h0M64.5 123.6h0M91.4 86.7h0M72.7 68.7h0M94.4 12.3h0M69.4 73.6h0M76.1 68.2h0M98.2 37.4h0M91.5 64.1h0M46.0 77.0h0M114.6 132.7h0M67.8 60.8h0M70.3 64.9h0M60.2 2.4h0M60.7 51.3h0M82.7 59.9h0M68.2 76.6h0M59.0 49.8h0M61.4 73.8h0M79.3 100.7h0M44.8 105.3h0M60.6 96.9h0M53.6 62.2h0M67.8 15.9h0M51.5 72.1h0M94.9 3.8h0M56.9 84.1h0M86.0 96.2h0M65.0 81.6h0M81.3 70.2h0M66.4 85.8h0M73.8 63.3h0M89.6 96.4h0M55.5 77.1h0M123.4 79.7h0M73.8 94.0h0M83.3 64.7h0M70.4 73.5h0M102.0 63.0h0M56.9 67.4h0M64.8 85.7h0M94.6 43.5h0M35.3 78.3h0M83.1 56.7h0M68.4 67.3h0M78.2 51.9h0M77.0 73.8h0M86.4 81.2h0M130.0 82.5h0M72.1 77.1h0M61.2 96.8h0M101.5 109.6h0M121.9 134.4h0M70.9 51.2h0M66.2 45.6h0M81.3 91.4h0M71.1 73.2h0M72.8 76.2h0M89.5 83.7h0M77.7 73.9h0M93.1 58.7h0M76.8 66.1h0M71.9 78.8h0M92.6 71.6h0M70.8 83.4h0M97.4 92.4h0M74.8 79.7h0M86.2 83.3h0M42.0 48.2h0M76.7 76.4h0M70.3 60.5h0M70.6 80.2h0M39.0 87.9h0M60.4 80.4h0M71.0 67.9h0M64.0 88.3h0M66.5 96.5h0M76.9 76.2h0M59.5 88.2h0M84.1 82.6h0M70.6 68.9h0M91.2 70.7h0M71.8 66.6h0M109.4 84.5h0M62.8 70.1h0M75.8 80.5h0M78.2 72.0h0M92.5 64.5h0M50.8 62.9h0M77.4 88.7h0M34.2 67.3h0M62.9 82.3h0M72.3 78.9h0M24.0 50.3h0M75.9 60.0h0M116.3 89.8h0M63.8 31.3h0M78.2 86.7h0M97.6 77.6h0M58.6 68.8h0M71.2 73.9h0M102.3 120.8h0M78.1 74.0h0M89.0 79.3h0M49.9 51.2h0M98.9 102.7h0M83.1 106.9h0M72.6 82.4h0M65.9 73.1h0M83.9 80.3h0M48.2 92.9h0M65.7 70.0h0M79.9 82.6h0M42.0 52.3h0M74.6 83.4h0M77.8 62.2h0M81.9 77.0h0M80.7 67.8h0M91.6 73.3h0M37.8 36.7h0M82.8 79.3h0M68.3 62.6h0M88.9 55.1h0M90.2 112.2h0M67.4 77.9h0M96.2 81.4h0M73.6 56.6h0M18.8 117.9h0M68.6 51.9h0M52.5 64.4h0M73.3 67.2h0M118.3 48.5h0M75.6 61.6h0M65.1 69.1h0M80.3 87.2h0M45.7 75.3h0M67.2 81.7h0M121.1 40.1h0M78.1 81.0h0M89.9 106.1h0M82.4 93.9h0M78.7 79.4h0M62.1 57.1h0M85.4 59.1h0M58.4 61.9h0M68.7 79.6h0M74.4 76.0h0M60.5 83.6h0M84.3 70.2h0M114.1 82.7h0M81.4 63.1h0M131.9 75.3h0M91.9 70.5h0M80.6 73.2h0M125.6 69.4h0M45.6 76.7h0M68.9 73.6h0M86.0 81.6h0M92.6 85.3h0M94.4 48.0h0M82.8 93.7h0M100.7 93.6h0M65.0 101.2h0M76.3 67.4h0M73.4 73.2h0M73.8 82.9h0M78.6 80.7h0M55.6 74.4h0M68.1 75.3h0M75.5 72.1h0M81.2 108.9h0M86.4 84.9h0M79.9 80.5h0M67.2 73.1h0M79.7 62.3h0M87.9 57.8h0M59.7 79.8h0M84.2 72.1h0M71.3 65.8h0M95.3 44.2h0M84.8 87.8h0M102.9 84.5h0M84.0 75.3h0M91.6 75.2h0M53.6 83.8h0M85.5 61.4h0M36.3 75.3h0M81.6 81.3h0M103.1 50.2h0M96.1 76.2h0M63.5 67.0h0M25.5 89.0h0M80.2 72.8h0M98.7 111.0h0M72.0 74.2h0M63.9 75.0h0M69.1 76.7h0M53.6 66.2h0M72.1 79.3h0M74.4 70.5h0M59.8 80.9h0M111.6 81.1h0M66.5 91.0h0M64.5 83.0h0M32.6 86.2h0M77.9 91.1h0M80.7 78.7h0M53.3 85.9h0M57.9 79.7h0M66.0 63.6h0M38.1 78.1h0M76.4 84.3h0M89.5 31.1h0M62.5 80.1h0M73.9 47.6h0M52.7 45.6h0M45.8 91.3h0M70.8 79.9h0M67.9 76.3h0M80.8 68.8h0M82.7 93.9h0M58.7 79.2h0M76.3 26.6h0M67.0 71.6h0M22.3 123.1h0M82.5 68.9h0M98.6 78.8h0M55.6 64.5h0M72.3 74.2h0M72.1 77.0h0M68.0 43.4h0M50.7 123.1h0M73.6 96.2h0M63.3 67.6h0M87.0 61.8h0M109.7 76.9h0M71.0 67.8h0M77.9 74.5h0M60.3 86.4h0M90.4 68.8h0M63.4 54.8h0M73.8 66.0h0M27.2 36.6h0M70.1 77.4h0M85.9 79.0h0M57.0 58.7h0M59.9 99.3h0M65.6 66.9h0M62.9 79.7h0M81.6 72.0h0M64.9 79.5h0M58.4 69.9h0M100.6 81.7h0M76.0 73.1h0M26.8 72.0h0M64.7 75.7h0M79.6 80.1h0M75.0 76.9h0M55.7 78.8h0M69.1 64.7h0M85.8 78.3h0M76.7 69.8h0M89.4 77.6h0M73.6 75.9h0M70.6 65.7h0M75.5 65.0h0M72.1 62.2h0M77.2 75.8h0M81.8 75.0h0M70.5 87.8h0M75.4 111.8h0M74.3 65.3h0M100.2 81.3h0M90.4 71.8h0M88.2 102.5h0M82.2 55.8h0M59.0 70.5h0M82.3 76.1h0M85.9 70.2h0M77.9 87.6h0M84.7 65.6h0M76.4 51.2h0M64.4 75.9h0M45.0 90.1h0M82.7 65.8h0M64.5 50.1h0M73.1 89.5h0M79.3 47.7h0M94.9 57.5h0M76.7 62.7h0M75.8 85.3h0M52.5 71.7h0M131.4 95.0h0M69.4 67.1h0M79.3 75.0h0M70.2 70.7h0M83.7 91.0h0M91.1 70.6h0M78.9 73.7h0M78.4 93.0h0M57.7 59.8h0M81.1 76.4h0M63.7 80.0h0M54.9 85.9h0M67.6 73.3h0M35.2 87.8h0M62.7 68.5h0M61.5 37.2h0M81.6 76.6h0M87.9 77.1h0M70.3 78.8h0M71.2 88.2h0M97.5 77.0h0M86.3 76.4h0M86.2 80.3h0M62.6 72.2h0M50.6 99.7h0M67.7 76.3h0M74.6 83.2h0M68.1 70.1h0M112.1 92.1h0M43.0 83.9h0M87.4 73.8h0M24.0 100.9h0M59.9 85.4h0M69.2 71.8h0M80.6 75.1h0M64.7 74.5h0M55.9 71.2h0M70.1 80.4h0M61.9 49.9h0M75.0 71.1h0M94.5 83.1h0M89.7 83.4h0M68.7 77.8h0M62.2 96.2h0M73.8 53.9h0M66.9 76.0h0M74.2 68.0h0M64.9 69.6h0M74.6 83.3h0M95.3 58.5h0M98.6 87.0h0M63.3 64.2h0M71.4 89.2h0M73.3 92.4h0M87.9 90.3h0M70.3 88.9h0M61.1 63.8h0M60.7 63.9h0M81.9 76.8h0M100.4 130.4h0M79.1 72.7h0M80.0 83.8h0M71.4 77.1h0M70.5 75.8h0M71.2 63.9h0M76.9 72.9h0M142.6 108.0h0M66.3 82.0h0M79.9 64.3h0M82.6 97.5h0M71.7 100.4h0M67.3 82.1h0M82.4 59.5h0M99.5 59.0h0M70.2 87.2h0M95.7 79.4h0M81.5 80.7h0M71.3 59.6h0M52.0 132.5h0M65.8 79.1h0M74.0 68.7h0M64.8 108.1h0M69.4 77.1h0M61.9 20.8h0M84.0 28.2h0M77.5 49.4h0M75.3 84.5h0M59.4 89.6h0M60.6 68.2h0M70.8 64.3h0M64.4 68.2h0M67.5 67.0h0M92.2 99.6h0M74.6 89.0h0M62.5 59.7h0M70.3 78.2h0M64.8 70.9h0M80.2 54.4h0M73.5 53.6h0M69.6 39.0h0M79.5 55.7h0M84.9 94.9h0M96.6 88.5h0M88.9 76.8h0M75.7 88.1h0M77.8 72.7h0M76.2 94.5h0M81.9 97.2h0M91.4 80.8h0M82.8 88.7h0M53.8 62.4h0M64.9 86.1h0M103.4 50.9h0M75.6 68.9h0M54.1 88.7h0M91.7 75.0h0M90.1 78.8h0M87.9 69.4h0M84.3 74.0h0M74.4 63.8h0M92.4 57.3h0M95.1 82.6h0M78.3 12.5h0M79.6 73.9h0M75.1 67.8h0M70.6 69.0h0M77.6 65.7h0M91.1 69.0h0M9.2 79.3h0M125.0 79.0h0M55.4 69.5h0M51.0 108.1h0M66.7 68.8h0M90.3 97.6h0M63.7 72.6h0M44.6 112.9h0M63.4 50.5h0M66.6 62.1h0M67.8 69.6h0M85.0 69.0h0M76.2 83.5h0M79.9 71.3h0M105.1 71.7h0M79.4 89.9h0M76.4 73.1h0M95.7 125.8h0M66.7 62.8h0M61.7 75.5h0M83.6 75.7h0M69.5 60.7h0M73.9 60.6h0M93.4 79.6h0M85.9 86.9h0M65.7 77.3h0M86.6 71.6h0M36.2 38.5h0M85.3 117.8h0M80.8 110.1h0M79.9 55.9h0M70.1 85.0h0M5.5 36.8h0M70.2 79.4h0M65.4 72.8h0M65.5 76.0h0M54.7 59.8h0M74.9 67.3h0M89.6 95.5h0M76.9 88.5h0M85.6 78.6h0M99.1 96.2h0M63.9 62.2h0M93.9 79.6h0M62.3 77.3h0M74.5 79.8h0M69.7 72.7h0M71.9 68.6h0M137.0 89.6h0M82.0 75.7h0M80.7 87.1h0M130.3 96.2h0M63.0 89.2h0M64.1 104.3h0" stroke="#7d8294" stroke-width="0.9" stroke-linecap="round" fill="none"/><path d="M64.3 68.1h0M72.3 60.5h0M86.0 92.6h0M71.9 80.3h0M88.2 66.0h0M65.2 63.9h0M44.0 89.7h0M63.5 72.9h0M58.9 42.3h0M37.1 67.5h0M65.5 77.9h0M68.8 88.8h0M68.5 77.8h0M73.8 85.4h0M69.9 72.7h0M110.8 66.7h0M61.6 65.3h0M91.1 53.9h0M89.0 43.2h0M70.0 76.7h0M67.4 67.2h0M72.6 74.4h0M96.0 83.0h0M67.6 81.4h0M73.7 70.9h0M72.5 83.2h0M149.5 55.1h0M74.9 78.0h0M62.2 69.0h0M62.5 67.5h0M44.6 72.4h0M79.2 57.1h0M64.1 86.1h0M57.9 99.2h0M60.1 70.4h0M111.3 66.5h0M66.8 74.0h0M93.1 88.5h0M77.3 85.3h0M54.4 88.6h0M84.6 65.4h0M71.4 78.0h0M47.4 86.9h0M68.8 62.3h0M50.3 104.7h0M79.6 66.7h0M106.1 125.6h0M68.1 74.2h0M67.7 61.9h0M13.1 122.5h0M59.1 56.9h0M64.3 62.6h0M53.3 75.5h0M74.6 90.5h0M73.6 71.1h0M41.2 86.4h0M82.5 82.4h0M74.6 75.1h0M72.4 80.3h0M77.7 83.1h0M2.8 78.3h0M74.0 49.0h0M69.2 74.2h0M145.5 38.7h0M60.6 75.3h0M87.4 81.1h0M82.8 84.8h0M88.1 80.4h0M97.6 76.8h0M85.6 87.1h0M77.0 72.9h0M40.2 57.4h0M84.4 67.5h0M86.2 88.0h0M92.8 100.7h0M74.9 66.5h0M68.1 60.6h0M44.0 80.5h0M76.7 70.6h0M78.1 73.4h0M84.4 72.5h0M78.0 97.8h0M84.6 76.2h0M87.1 55.5h0M77.6 73.8h0M87.2 77.0h0M63.6 78.7h0M72.6 73.6h0M102.4 55.4h0M66.2 75.7h0M63.4 71.8h0M79.9 81.8h0M53.2 22.6h0M72.5 86.3h0M85.4 78.5h0M81.5 76.2h0M66.9 83.3h0M78.5 69.9h0M65.3 97.3h0M72.1 76.2h0M67.3 70.2h0M60.3 70.1h0M66.9 63.6h0M69.6 40.7h0M75.1 71.5h0M77.2 118.7h0M109.7 89.8h0M56.0 79.8h0M78.0 67.2h0M80.9 65.9h0M69.4 66.1h0M83.7 54.6h0M54.0 67.5h0M81.2 64.2h0M86.5 63.1h0M81.3 76.4h0M87.1 63.4h0M83.2 80.9h0M78.9 71.0h0M52.5 95.9h0M65.1 78.4h0M68.3 76.4h0M89.5 68.6h0M88.0 74.4h0M77.4 97.6h0M71.3 120.9h0M85.4 31.0h0M96.2 70.8h0M76.1 77.0h0M71.5 70.5h0M73.8 85.0h0M85.7 72.6h0M70.1 84.0h0M86.4 56.9h0M96.6 74.1h0M85.2 62.4h0M43.6 103.8h0M48.7 99.4h0M90.1 89.7h0M60.7 70.5h0M74.6 74.3h0M69.5 72.8h0M29.6 32.3h0M61.4 72.7h0M82.5 68.8h0M80.4 88.1h0M75.3 79.2h0M128.2 144.5h0M75.8 66.2h0M99.6 69.9h0M124.6 78.2h0M58.4 80.9h0M87.5 82.4h0M68.2 84.8h0M132.3 85.6h0M63.4 70.8h0M49.7 76.6h0M93.5 57.1h0M79.3 72.4h0M55.7 77.6h0M74.4 71.7h0M63.1 71.4h0M87.6 71.1h0M102.8 56.1h0M73.6 74.0h0M84.5 89.9h0M69.1 68.4h0M61.3 84.2h0M101.3 64.5h0M129.2 84.4h0M78.7 62.2h0M63.6 71.0h0M94.6 82.6h0M71.6 61.5h0M69.7 77.0h0M82.3 71.8h0M99.4 74.0h0M48.9 88.1h0M76.3 70.4h0M92.0 66.1h0M61.7 59.4h0M88.7 79.2h0M75.0 88.7h0M82.8 51.4h0M84.8 97.4h0M55.3 69.8h0M86.5 81.8h0M57.5 41.8h0M38.9 128.5h0M53.0 54.8h0M63.5 70.1h0M72.7 97.2h0M60.2 66.2h0M25.1 73.6h0M73.7 48.5h0M78.7 80.8h0M95.0 95.6h0M69.4 69.0h0M85.1 75.1h0M74.5 75.2h0M72.8 79.6h0M72.6 20.6h0M80.9 71.2h0M77.2 69.7h0M73.4 60.6h0M80.8 99.6h0M59.5 78.0h0M67.9 69.0h0M71.4 83.5h0M79.5 71.2h0M71.8 36.3h0M62.4 97.3h0M74.5 72.2h0M85.1 76.6h0M83.5 73.2h0M94.2 103.0h0M65.3 76.8h0M74.1 78.3h0M62.7 90.3h0M96.0 47.8h0M104.7 106.9h0M97.1 96.7h0M79.9 88.4h0M72.1 86.8h0M73.5 55.2h0M82.5 76.0h0M60.8 84.1h0M88.0 64.0h0M79.3 75.7h0M88.0 63.0h0M48.3 53.8h0M51.2 76.1h0M75.9 70.0h0M71.4 81.6h0M60.8 79.7h0M71.2 93.3h0M80.3 72.2h0M72.7 84.2h0M82.7 55.8h0M60.5 46.9h0M80.2 78.9h0M69.7 90.9h0M83.6 56.4h0M61.2 89.5h0M69.3 68.9h0M106.0 61.8h0M68.2 80.6h0M70.7 89.3h0M69.6 55.1h0M68.2 48.0h0M71.6 62.9h0M60.8 77.6h0M96.0 63.2h0M69.0 82.2h0M83.9 49.4h0M86.0 56.9h0M84.1 68.6h0M59.4 53.9h0M71.1 74.5h0M50.9 69.8h0M78.6 94.0h0M67.0 74.6h0M65.7 71.7h0M63.4 134.3h0M34.1 104.3h0M57.1 28.7h0M76.6 88.6h0M80.7 65.2h0M92.4 51.8h0M73.7 68.5h0M34.0 68.9h0M102.6 103.9h0M94.6 111.1h0M121.2 114.4h0M70.2 67.3h0M58.8 55.1h0M65.8 77.2h0M76.8 70.9h0M72.3 89.3h0M53.8 83.9h0M35.7 45.2h0M74.3 63.6h0M122.8 97.6h0M15.9 34.6h0M53.1 34.7h0M99.2 90.4h0M69.0 71.3h0M89.2 43.3h0M81.8 44.0h0M77.8 68.1h0M58.0 78.4h0M73.0 63.9h0M72.6 80.0h0M94.3 100.4h0M64.6 63.6h0M72.6 71.4h0M71.1 57.5h0M57.7 42.6h0M107.6 68.4h0M89.2 84.9h0M61.8 84.1h0M62.2 56.3h0M77.8 73.4h0M129.1 11.8h0M71.4 61.6h0M81.4 86.1h0M66.2 76.2h0M34.6 64.1h0M72.4 76.4h0M78.4 76.2h0M76.2 65.9h0M92.8 88.9h0M72.7 66.8h0M94.2 127.4h0M57.8 68.4h0M78.1 75.9h0M61.6 87.9h0M50.7 101.3h0M105.3 118.8h0M69.8 64.8h0M71.8 53.9h0M81.7 62.6h0M89.4 53.5h0M81.4 81.2h0M94.9 74.0h0M69.3 76.7h0M71.8 69.1h0M74.0 69.0h0M96.1 62.4h0M85.9 71.7h0M87.7 83.6h0M82.1 74.4h0M76.4 62.5h0M73.9 77.8h0M97.2 81.1h0M52.6 91.9h0M98.0 81.3h0M59.4 64.9h0M80.5 76.4h0M69.5 94.3h0M52.1 69.3h0M61.8 89.6h0M59.7 67.4h0M69.0 77.1h0M66.8 29.1h0M68.3 58.1h0M81.6 90.4h0M55.3 74.4h0M73.9 97.0h0M78.0 68.0h0M79.6 70.4h0M78.4 66.0h0M60.7 85.0h0M75.8 68.3h0M68.4 66.5h0M64.0 70.7h0M84.1 101.6h0M95.3 73.3h0M101.4 89.8h0M52.5 85.6h0M86.7 81.0h0M70.1 85.5h0M61.3 68.2h0M85.2 68.4h0M78.6 74.2h0M89.3 90.0h0M60.3 112.8h0M71.6 81.8h0M67.1 75.7h0M64.0 84.1h0M119.0 71.3h0M63.9 79.3h0M73.4 80.7h0M90.3 73.1h0M69.8 72.8h0M86.4 79.5h0M138.3 53.0h0M59.0 78.6h0M127.7 86.0h0M71.9 70.5h0M81.7 63.3h0M136.7 100.4h0M78.2 74.8h0M79.6 63.7h0M123.8 114.8h0M68.7 48.8h0M78.9 65.6h0M75.3 66.1h0M68.5 71.8h0M43.1 49.0h0M99.0 64.2h0M82.2 77.5h0M87.3 79.6h0M66.3 79.8h0M85.9 68.0h0M72.9 71.1h0M63.5 64.5h0M61.6 76.7h0M61.4 78.2h0M79.3 68.7h0M82.9 80.2h0M71.0 69.2h0M35.0 100.2h0M66.6 88.8h0M87.6 66.3h0M104.5 42.2h0M80.3 68.6h0M60.3 85.3h0M79.5 82.9h0M82.3 59.5h0M64.5 78.7h0M83.2 138.0h0M45.0 114.2h0M69.9 71.4h0M90.2 91.6h0M72.5 70.5h0M73.2 79.3h0M63.7 68.1h0M72.3 60.4h0M71.7 73.9h0M69.0 86.9h0M73.3 87.8h0M60.8 28.3h0M87.1 85.4h0M78.5 82.3h0M78.6 66.0h0M79.1 85.3h0M73.9 65.9h0M84.8 82.6h0M66.6 96.0h0M54.5 77.8h0M83.3 64.4h0M42.7 116.5h0M73.5 72.3h0M63.0 70.2h0M67.9 79.6h0M43.5 86.0h0M73.2 83.1h0M45.9 53.3h0M60.0 73.7h0M87.2 56.0h0M41.8 73.6h0M76.1 79.0h0M68.8 62.4h0M60.4 64.2h0M73.7 73.1h0M78.2 71.9h0M64.8 98.0h0M31.9 47.5h0" stroke="#9aa0b6" stroke-width="0.9" stroke-linecap="round" fill="none"/><path d="M68.4 77.2h0M65.3 74.7h0M90.3 71.6h0M66.4 95.2h0M83.9 81.4h0M89.3 66.6h0M81.9 85.6h0M73.9 66.2h0M66.3 67.5h0M96.0 53.8h0M68.3 53.1h0M72.4 83.5h0M73.9 69.1h0M47.8 93.7h0M43.5 54.6h0M79.2 73.7h0M70.8 86.9h0M73.8 74.8h0M61.1 90.9h0M79.7 93.7h0M86.4 60.7h0M55.6 78.7h0M31.7 148.4h0M86.8 86.1h0M88.3 60.5h0M111.9 52.1h0M34.3 5.9h0M78.5 82.0h0M78.6 78.3h0M65.6 60.5h0M40.5 100.9h0M85.9 78.5h0M68.2 92.9h0M62.4 84.8h0M87.1 48.8h0M65.3 62.6h0M64.1 66.3h0M72.1 70.2h0M70.8 75.0h0M69.5 84.5h0M75.6 91.7h0M12.7 87.6h0M77.9 80.3h0M72.9 53.4h0M53.1 70.3h0M25.5 58.0h0M78.4 71.9h0M87.1 93.4h0M73.9 68.3h0M65.8 71.5h0M71.5 66.0h0M72.0 92.1h0M66.4 87.5h0M54.6 89.6h0M3.5 102.5h0M76.7 81.1h0M52.1 69.3h0M44.4 73.8h0M71.2 56.7h0M93.1 77.3h0M54.8 93.8h0M78.1 70.7h0M70.8 44.0h0M58.2 74.2h0M88.0 78.0h0M73.1 67.1h0M108.3 125.3h0M87.0 66.3h0M76.4 84.8h0M67.3 76.5h0M49.4 108.7h0M93.9 62.3h0M78.5 66.5h0M86.1 70.1h0M62.8 80.8h0M77.0 64.6h0M60.5 34.9h0M78.2 94.3h0M81.1 58.9h0M49.9 68.1h0M67.4 90.2h0M55.9 107.4h0M71.8 70.0h0M69.0 39.9h0M81.4 77.6h0M72.2 80.5h0M92.0 73.0h0M66.1 79.6h0M60.7 65.3h0M84.4 95.4h0M65.7 83.0h0M53.7 26.7h0M66.8 67.2h0M39.7 84.2h0M63.4 75.7h0M70.7 76.6h0M76.6 64.8h0M62.3 71.7h0M64.3 81.6h0M61.8 89.5h0M63.0 125.3h0M91.2 63.9h0M71.5 87.1h0M68.4 69.2h0M65.3 69.8h0M72.0 77.2h0M70.2 85.0h0M82.6 77.0h0M78.0 70.6h0M76.0 69.7h0M51.9 81.1h0M91.5 61.9h0M82.5 76.6h0M73.1 70.5h0M51.8 60.0h0M75.7 73.5h0M40.5 72.9h0M68.3 65.7h0M71.7 68.7h0M67.0 75.7h0M95.7 92.9h0M61.8 62.0h0M70.0 66.0h0M73.3 66.0h0M104.8 78.2h0M51.5 71.8h0M91.4 64.8h0M109.6 93.2h0M48.2 47.3h0M68.9 56.0h0M83.4 67.4h0M50.5 64.3h0M60.8 88.8h0M82.0 77.8h0M64.8 49.7h0M77.6 81.6h0M96.6 94.2h0M71.6 80.0h0M66.8 75.8h0M52.5 61.5h0M93.6 96.7h0M75.6 69.7h0M74.2 82.5h0M75.9 59.0h0M97.9 69.8h0M82.5 85.1h0M71.4 97.5h0M69.4 72.9h0M71.5 58.9h0M88.7 55.1h0M86.8 87.2h0M66.1 61.7h0M75.3 83.8h0M99.0 69.5h0M69.9 84.6h0M53.2 100.3h0M68.4 87.4h0M65.1 62.9h0M72.1 86.7h0M98.6 84.7h0M75.5 84.0h0M60.6 94.9h0M95.6 74.3h0M66.4 71.9h0M73.5 72.5h0M70.6 89.4h0M91.1 98.0h0M89.8 80.4h0M64.4 61.0h0M108.2 112.6h0M98.3 39.7h0M86.1 76.2h0M52.4 73.3h0M97.2 84.0h0M66.4 64.0h0M109.8 25.8h0M78.3 68.6h0M56.5 36.7h0M70.4 61.5h0M80.3 80.6h0M77.3 84.2h0M60.6 86.6h0M78.7 91.5h0M72.1 82.4h0M88.4 67.0h0M80.4 97.1h0M91.5 66.7h0M60.7 80.1h0M83.2 112.9h0M65.7 62.3h0M56.5 83.9h0M75.1 75.1h0M82.9 75.4h0M66.9 72.3h0M86.1 73.3h0M75.2 71.3h0M82.4 59.6h0M81.0 69.6h0M107.7 20.6h0M61.7 83.6h0M65.5 70.8h0M90.6 86.1h0M107.4 26.2h0M38.8 51.3h0M50.3 95.1h0M69.7 71.5h0M58.4 52.0h0M84.1 83.1h0M111.9 53.4h0M82.3 35.8h0M51.5 58.7h0M70.0 57.2h0M79.5 35.9h0M74.8 80.9h0M94.2 67.6h0M65.4 58.9h0M84.0 73.8h0M64.4 90.3h0M85.5 79.8h0M78.8 77.5h0M89.6 26.6h0M92.6 96.9h0M67.1 81.5h0M92.2 68.5h0M60.2 74.6h0M85.2 62.5h0M77.4 79.5h0M69.6 78.3h0M57.5 53.2h0M67.1 74.7h0M65.9 71.0h0M82.7 81.9h0M77.7 71.0h0M63.1 71.6h0M75.5 65.9h0M74.8 99.7h0M107.0 65.6h0M45.8 23.9h0M83.1 74.5h0M74.9 67.9h0M72.4 60.8h0M63.2 69.8h0M72.2 64.8h0M61.3 98.4h0M64.7 84.0h0M87.1 56.8h0M52.0 78.1h0M68.8 78.7h0M83.1 81.3h0M56.7 64.4h0M85.3 81.1h0M68.7 95.0h0M92.2 73.3h0M66.2 72.7h0M82.9 83.3h0M145.3 48.8h0M19.2 57.8h0M41.1 96.8h0M101.1 65.5h0M59.5 67.3h0M62.9 55.9h0M123.4 71.0h0M73.1 90.4h0M67.6 80.1h0M80.0 82.6h0M72.3 111.1h0M65.5 60.3h0M74.7 55.9h0M16.9 84.5h0M78.7 52.3h0M98.4 16.5h0M80.5 78.6h0M63.2 77.7h0M61.6 78.4h0M73.6 110.4h0M82.8 78.2h0M76.0 91.0h0M82.4 68.0h0M63.4 78.7h0M76.5 86.8h0M62.9 72.3h0M58.7 61.3h0M54.2 84.5h0M94.6 80.6h0M96.6 92.7h0M70.5 77.1h0M135.3 92.8h0M61.3 67.6h0M59.6 81.1h0M77.3 74.5h0M113.2 98.8h0M84.9 77.0h0M74.1 110.9h0M64.4 83.2h0M79.0 79.8h0M91.6 76.4h0M76.5 59.0h0M76.1 67.7h0M80.2 56.8h0M77.6 69.2h0M80.4 75.1h0M78.3 66.4h0M67.7 66.7h0M66.2 90.3h0M79.0 75.3h0M68.9 71.2h0M65.1 86.8h0M67.6 81.1h0M54.1 95.3h0M86.3 79.5h0M66.3 91.7h0M70.3 80.3h0M65.0 77.3h0M27.7 129.2h0M96.3 18.7h0M79.2 75.1h0M64.0 97.9h0M77.8 77.5h0M78.3 58.2h0M79.4 76.4h0M77.4 78.0h0M62.0 67.0h0M57.6 69.3h0M38.4 39.1h0M71.3 84.9h0M94.3 107.4h0M76.8 93.2h0M78.3 63.6h0M79.1 71.4h0M59.6 72.1h0M54.7 63.1h0M96.8 68.9h0M87.5 74.0h0M91.4 63.3h0M52.6 62.1h0M103.6 98.5h0M72.0 101.9h0M79.5 81.1h0M36.0 58.3h0M43.3 57.4h0M82.4 76.5h0M78.8 46.5h0M103.4 60.2h0M79.6 81.4h0M58.7 72.0h0M77.1 69.4h0M83.0 87.1h0M62.9 72.9h0M70.5 75.0h0M65.8 61.1h0M74.5 79.5h0M70.7 72.6h0M76.2 74.8h0M97.5 68.0h0M63.4 92.0h0M77.7 43.8h0M52.3 46.7h0M79.9 68.5h0M75.2 83.1h0M77.9 74.4h0M59.1 34.5h0M108.4 93.2h0M88.8 84.1h0M64.1 85.9h0M82.0 69.9h0M70.9 33.7h0M82.5 72.7h0M73.6 94.3h0M72.5 86.1h0M71.1 76.6h0M77.1 81.4h0M40.5 95.9h0M63.1 70.6h0M72.8 67.0h0M76.2 86.5h0M7.5 75.7h0M79.2 90.1h0M57.2 89.8h0M102.2 44.3h0M57.1 61.1h0M78.8 71.7h0M70.1 38.6h0M80.0 98.1h0M39.4 74.0h0M102.3 49.2h0M77.4 71.7h0M88.1 58.9h0M72.0 67.4h0M105.0 88.9h0M62.9 73.8h0M102.1 46.4h0M73.7 70.8h0M85.3 73.1h0M82.3 86.8h0M52.0 66.8h0M64.5 59.1h0M59.0 66.9h0M50.6 100.7h0M60.9 73.9h0M68.9 79.3h0M58.1 52.6h0M60.5 84.0h0M53.6 85.6h0M82.7 68.8h0M74.1 98.8h0M75.2 64.9h0M19.9 27.0h0M75.7 67.6h0M73.3 78.6h0M52.1 83.8h0M115.6 85.3h0M66.3 77.8h0M112.7 67.6h0M86.8 35.7h0M95.7 151.6h0M74.1 73.9h0M129.5 91.8h0M69.1 70.3h0M62.8 85.0h0M67.7 61.7h0M48.8 56.0h0M59.6 91.6h0M78.3 86.2h0M52.5 66.8h0M77.9 59.7h0M63.2 69.2h0M138.5 84.7h0M79.5 24.7h0M68.9 64.1h0M65.4 77.5h0M90.6 89.6h0M80.8 72.5h0M86.0 61.6h0M53.3 65.7h0M91.7 6.1h0M76.9 70.2h0M109.3 80.3h0M81.5 121.6h0" stroke="#84889a" stroke-width="0.9" stroke-linecap="round" fill="none"/><path d="M14.2 9.6h0M14.8 118.6h0M52.2 10.7h0M65.1 27.5h0M82.0 59.2h0M30.9 42.9h0M142.0 138.7h0M137.8 96.1h0M96.3 9.6h0M79.6 124.2h0M10.3 8.1h0M22.4 120.1h0M45.8 87.2h0M25.3 68.4h0M61.0 63.9h0M112.3 65.2h0M123.4 57.6h0M102.9 64.1h0M115.5 127.8h0M139.0 129.0h0M82.8 7.1h0M114.3 61.8h0M86.9 109.6h0M40.4 114.3h0M114.9 86.6h0M86.5 115.0h0M75.3 93.9h0M62.2 61.0h0M84.5 82.0h0M74.7 73.0h0M21.5 119.1h0M21.6 127.8h0M6.7 15.9h0M98.4 30.5h0M67.9 0.7h0M85.0 133.9h0M17.8 5.3h0M71.7 18.8h0M25.4 11.9h0M92.6 84.8h0M119.5 31.0h0" stroke="#84889a" stroke-width="0.95" stroke-linecap="round" fill="none"/><path d="M129.0 41.8h0M138.1 35.5h0M103.0 82.0h0M75.6 97.0h0M62.9 61.3h0M102.9 4.0h0M110.4 88.3h0M80.4 15.3h0M34.2 40.0h0M79.7 77.6h0M1.4 134.6h0M56.0 112.4h0M55.8 46.8h0M89.2 49.2h0M150.7 86.3h0M30.6 99.9h0M12.7 132.0h0M97.2 10.0h0M30.1 81.2h0M16.0 56.3h0M50.6 34.8h0M150.3 23.9h0M145.9 148.1h0M62.5 31.8h0M9.4 100.8h0M11.4 92.4h0M53.9 101.0h0M110.5 12.2h0M10.8 143.3h0M85.5 119.7h0M95.8 5.4h0M49.8 100.4h0M146.0 80.2h0M149.7 91.9h0M17.6 106.4h0M47.5 151.4h0M59.3 44.3h0M111.4 119.6h0M130.2 67.1h0M65.2 51.6h0M13.3 86.0h0M141.0 90.3h0M66.3 108.6h0M97.2 133.8h0M123.7 20.4h0M46.4 82.8h0M87.9 16.7h0M71.1 40.0h0M106.5 19.7h0M33.1 28.8h0M146.3 44.2h0" stroke="#8e93a6" stroke-width="0.95" stroke-linecap="round" fill="none"/><path d="M116.8 122.8h0M93.6 128.3h0M129.4 94.4h0M128.1 129.6h0M124.0 60.7h0M2.4 8.6h0M53.6 106.0h0M103.3 36.5h0M58.3 139.1h0M20.3 76.2h0M47.2 59.9h0M60.4 86.6h0M143.4 10.2h0M124.0 61.7h0M114.6 109.6h0M84.8 110.3h0M68.1 24.1h0M118.6 50.2h0M35.1 58.4h0M78.2 103.5h0M42.2 33.8h0M65.9 138.9h0M99.3 80.3h0M21.9 130.5h0M126.9 134.8h0M50.8 94.0h0M73.3 146.7h0M23.4 44.0h0M1.4 35.2h0M89.4 21.3h0M81.9 6.0h0M65.4 108.0h0M71.8 72.1h0M99.3 143.1h0M129.7 26.6h0M69.9 126.8h0M39.8 27.6h0M15.3 113.1h0M47.5 139.0h0M120.6 125.5h0" stroke="#9aa0b6" stroke-width="0.95" stroke-linecap="round" fill="none"/><path d="M145.7 58.8h0M147.9 127.4h0M69.7 114.1h0M137.3 126.7h0M87.7 46.9h0M2.2 0.3h0M70.5 64.2h0M54.1 33.7h0M109.2 83.4h0M50.0 110.9h0M44.4 92.3h0M38.8 147.2h0M78.3 11.1h0M6.1 96.4h0M14.3 135.1h0M8.3 87.3h0M96.6 132.2h0M29.1 9.4h0M127.2 109.0h0M103.7 14.6h0M133.9 140.0h0M32.2 111.2h0M134.6 146.2h0M67.4 40.2h0M148.1 14.6h0M116.0 83.2h0M25.5 60.9h0M8.5 19.2h0M9.6 119.2h0M99.8 123.1h0M30.4 37.9h0M24.2 57.4h0M85.1 104.3h0M40.2 81.3h0M25.9 71.0h0M79.2 129.3h0M70.5 58.2h0M15.7 58.8h0M79.1 113.1h0M10.9 84.0h0" stroke="#7d8294" stroke-width="0.95" stroke-linecap="round" fill="none"/><path d="M62.9 55.7h0M64.7 60.7h0M113.7 44.7h0M67.4 81.4h0M71.5 74.1h0M57.2 72.4h0M89.2 77.9h0M74.7 69.7h0M92.8 52.2h0M72.7 102.7h0M92.2 55.6h0M77.5 73.3h0M79.4 72.9h0M87.2 86.6h0M57.1 88.6h0M84.6 72.0h0M68.0 88.0h0M60.2 69.7h0M83.6 79.0h0M46.3 55.0h0M84.7 69.7h0M59.7 80.2h0M95.7 96.1h0M99.3 50.5h0M71.3 71.3h0M63.3 45.9h0M30.7 65.0h0M82.8 90.9h0M79.7 74.6h0M70.5 70.5h0M102.4 64.9h0M77.2 77.9h0M88.6 72.5h0M71.2 57.7h0M60.0 81.2h0M72.3 81.5h0M67.8 65.7h0M45.8 34.8h0M62.1 61.3h0M59.6 83.9h0M55.3 74.3h0M67.5 81.9h0M76.7 82.8h0M70.9 80.7h0M70.8 74.8h0M67.6 76.5h0M70.1 68.0h0M87.3 58.5h0M82.0 70.2h0M51.9 84.1h0M69.9 65.9h0M124.8 46.8h0M60.6 73.5h0M77.4 74.2h0M71.5 62.8h0M65.7 40.9h0M67.3 58.4h0M106.6 72.0h0M102.6 89.3h0M83.8 55.6h0M73.9 70.3h0M6.5 117.7h0M77.0 84.1h0M96.8 47.6h0M108.8 55.0h0M64.1 82.3h0M61.3 77.9h0M55.9 84.7h0M123.8 49.6h0M101.0 40.4h0M85.0 80.4h0M86.5 77.9h0M70.3 70.4h0M79.6 86.8h0M27.9 78.8h0M67.8 82.8h0M65.0 88.2h0M80.5 91.4h0M70.0 72.4h0M86.2 85.9h0M76.9 84.1h0M46.6 62.1h0M66.3 62.2h0M77.8 79.6h0M73.8 76.0h0M60.9 96.2h0M130.5 93.4h0M81.0 68.0h0M84.0 75.9h0M82.8 71.1h0M72.9 64.7h0M81.7 66.4h0M70.4 91.4h0M71.2 77.5h0M65.9 68.3h0M73.9 66.3h0M78.4 66.4h0M120.6 13.6h0M105.1 80.0h0M73.1 64.7h0M74.0 73.4h0M85.2 76.2h0M54.4 23.0h0M115.2 68.2h0M61.7 95.4h0M30.8 109.1h0M27.4 83.0h0M93.4 76.3h0M83.0 62.5h0M67.4 68.9h0M84.6 71.8h0M42.9 77.3h0M23.9 41.8h0M125.3 98.4h0M17.6 89.5h0M75.2 74.1h0M80.3 70.0h0M81.2 69.8h0M66.3 76.7h0M79.2 83.2h0M61.4 67.7h0M81.7 60.0h0M83.1 43.5h0M105.3 82.7h0M67.9 69.0h0M87.8 89.0h0M63.0 76.8h0M61.3 78.1h0M78.6 71.0h0M17.8 72.1h0M75.1 65.9h0M77.2 77.1h0M82.5 83.1h0M65.6 47.8h0M99.7 71.8h0M68.0 55.4h0M71.0 84.0h0M79.4 119.4h0M77.1 81.2h0M52.7 78.6h0M75.8 69.7h0M66.9 64.5h0M82.7 83.6h0M74.0 82.4h0M88.4 69.9h0M83.9 89.0h0M80.5 73.3h0M77.3 132.6h0M71.6 63.4h0M49.3 40.5h0M66.9 79.3h0M71.7 76.7h0M74.8 73.2h0M79.9 71.1h0M87.5 53.0h0M55.7 52.6h0M69.4 82.1h0M88.2 63.4h0M70.9 66.9h0M65.7 63.1h0M63.4 73.0h0M69.2 68.3h0M18.1 128.0h0M70.5 82.0h0M65.1 93.4h0M71.0 88.9h0M84.3 77.6h0M71.4 77.5h0M46.8 58.3h0M84.8 83.9h0M72.0 66.7h0M85.6 59.9h0M93.6 110.5h0M117.3 99.1h0M62.0 84.1h0M51.4 97.5h0M91.7 61.6h0M93.1 60.0h0M96.2 70.6h0M94.6 50.2h0M62.5 72.3h0M76.6 76.9h0M80.0 77.9h0M70.1 71.5h0M67.6 58.1h0M79.3 134.8h0M88.7 89.5h0M71.3 57.1h0M95.7 133.3h0M82.5 65.6h0M70.6 72.9h0M122.1 43.7h0M74.3 73.9h0M92.4 74.6h0M75.8 80.1h0M77.7 70.0h0M63.7 70.0h0M74.6 63.9h0M72.7 70.2h0M63.2 64.1h0M125.7 93.9h0M79.4 74.5h0M84.8 50.8h0M61.4 66.2h0M69.8 87.9h0M62.7 69.3h0M59.9 68.5h0M73.9 81.7h0M70.6 74.6h0M76.3 78.0h0M70.2 81.8h0M113.9 51.9h0M80.1 70.3h0M94.2 62.3h0M58.4 68.8h0M59.6 63.1h0M69.4 74.8h0M53.3 50.0h0M95.1 53.7h0M86.0 80.8h0M57.1 77.1h0M68.2 75.9h0M105.3 48.1h0M89.8 72.9h0M78.0 59.2h0M75.6 79.6h0M70.6 80.9h0M68.4 72.2h0M29.9 84.9h0M72.7 66.1h0M79.1 76.4h0M81.9 68.4h0M66.3 91.2h0M56.2 73.5h0M90.5 118.9h0M88.7 84.7h0M48.7 81.6h0M105.0 56.4h0M68.5 69.5h0M75.2 90.7h0M71.5 71.8h0M45.7 44.2h0M71.6 88.1h0M67.0 80.9h0M60.0 102.9h0M67.5 75.3h0M74.4 83.5h0M50.3 69.8h0M78.8 84.4h0M79.9 86.9h0M58.3 49.9h0M53.1 44.9h0M71.8 64.9h0M90.6 69.2h0M70.3 62.5h0M93.3 62.2h0M79.6 86.6h0M89.6 61.2h0M78.4 79.0h0M75.2 61.4h0M57.1 30.9h0M59.9 59.7h0M76.2 84.1h0M70.0 106.0h0M59.3 34.7h0M65.2 77.0h0M74.8 74.8h0M70.2 69.0h0M85.4 57.3h0M66.3 76.9h0M86.8 74.4h0M75.0 66.6h0M67.6 79.4h0M73.4 64.6h0M91.1 66.9h0M61.6 63.4h0M66.2 61.5h0M96.1 80.1h0M50.6 86.9h0M77.2 77.6h0M107.4 74.3h0M65.9 67.3h0M70.0 71.3h0M81.4 81.1h0M79.1 77.0h0M76.0 72.8h0M89.6 61.8h0M126.0 67.8h0M53.3 58.5h0M77.9 69.1h0M81.7 73.3h0M85.7 91.0h0M63.3 89.9h0" stroke="#d6dbee" stroke-width="1.05" stroke-linecap="round" fill="none"/><path d="M106.0 92.9h0M73.0 39.7h0M57.5 67.5h0M68.3 57.3h0M93.6 67.5h0M68.8 90.9h0M78.9 71.9h0M69.8 66.8h0M74.5 72.3h0M71.0 60.0h0M93.4 53.6h0M60.1 98.9h0M98.1 67.5h0M73.3 84.9h0M81.0 76.6h0M106.4 101.3h0M78.6 75.8h0M82.0 54.2h0M56.1 80.3h0M46.9 94.2h0M67.9 77.5h0M92.4 77.7h0M92.2 47.8h0M80.8 65.6h0M101.6 84.6h0M72.5 80.0h0M65.5 71.1h0M78.0 66.5h0M85.9 91.4h0M73.6 82.3h0M72.8 67.2h0M66.2 47.7h0M75.6 75.7h0M71.5 107.0h0M63.6 78.0h0M79.1 77.1h0M88.9 86.4h0M78.4 69.2h0M73.1 14.2h0M81.2 79.7h0M99.9 78.0h0M129.0 109.8h0M76.6 77.5h0M81.9 67.5h0M76.9 77.2h0M99.2 112.5h0M60.0 67.7h0M118.2 41.1h0M75.5 69.7h0M79.1 88.2h0M68.6 62.9h0M61.6 98.4h0M99.4 86.8h0M73.0 82.6h0M75.2 67.2h0M61.6 71.9h0M7.5 104.5h0M97.3 60.3h0M64.0 90.3h0M79.6 69.4h0M57.6 78.6h0M77.5 86.1h0M88.0 50.8h0M80.2 62.3h0M84.8 69.4h0M62.1 92.3h0M82.4 73.4h0M76.3 72.1h0M68.1 56.8h0M72.7 73.9h0M72.0 60.8h0M85.1 75.0h0M80.9 69.8h0M107.0 81.0h0M63.1 67.5h0M94.0 66.8h0M74.0 67.7h0M79.2 76.0h0M40.6 86.2h0M82.5 69.9h0M82.4 80.2h0M62.4 75.2h0M65.6 69.0h0M69.4 71.1h0M51.4 93.0h0M66.3 58.9h0M90.0 82.9h0M64.7 60.6h0M66.6 69.6h0M49.9 86.5h0M89.0 27.2h0M81.0 88.0h0M83.7 34.9h0M97.4 61.1h0M62.7 79.2h0M68.6 66.3h0M57.3 72.9h0M75.9 85.0h0M66.5 95.5h0M60.0 52.2h0M61.2 65.4h0M82.6 72.4h0M81.9 72.9h0M56.0 87.1h0M72.2 69.0h0M73.7 38.4h0M70.3 72.4h0M56.2 45.6h0M75.0 69.2h0M97.1 36.3h0M84.2 89.3h0M69.9 114.1h0M76.8 59.0h0M76.2 77.6h0M37.0 141.6h0M86.0 61.8h0M108.6 99.6h0M79.3 74.8h0M71.3 74.3h0M64.5 80.0h0M78.2 72.2h0M43.8 72.5h0M83.9 81.9h0M64.6 72.9h0M78.9 88.6h0M59.1 74.9h0M60.9 64.9h0M76.5 98.4h0M86.7 71.7h0M81.2 96.0h0M68.7 93.5h0M40.2 84.3h0M90.9 56.2h0M89.3 78.2h0M87.4 21.1h0M75.1 59.9h0M69.9 88.5h0M86.0 74.1h0M87.5 75.2h0M72.6 78.4h0M57.2 77.0h0M83.6 86.2h0M62.2 85.7h0M97.0 45.8h0M70.9 63.2h0M66.9 55.2h0M66.0 69.4h0M97.9 92.3h0M79.1 73.6h0M94.3 58.8h0M91.6 76.0h0M73.0 52.8h0M68.6 83.6h0M73.8 61.3h0M78.1 68.4h0M95.5 101.5h0M77.3 68.7h0M62.2 91.9h0M52.4 86.7h0M88.3 45.3h0M82.0 68.1h0M68.0 66.6h0M36.8 82.0h0M24.9 122.1h0M67.0 76.8h0M135.5 38.6h0M54.9 67.8h0M29.4 73.9h0M74.7 80.6h0M65.4 83.4h0M73.2 89.7h0M65.9 89.0h0M93.9 90.9h0M56.8 83.9h0M54.5 55.8h0M82.1 94.1h0M78.6 74.3h0M69.4 64.6h0M131.5 96.5h0M71.8 70.3h0M79.3 61.4h0M69.1 90.8h0M66.0 85.8h0M9.9 27.8h0M61.3 72.0h0M82.8 75.3h0M69.9 81.0h0M71.4 73.0h0M72.9 68.9h0M91.8 58.0h0M62.0 54.1h0M101.7 70.8h0M75.8 67.5h0M75.0 87.3h0M66.4 52.9h0M67.0 76.6h0M78.3 79.8h0M100.9 68.2h0M52.0 65.6h0M69.1 66.2h0M86.0 84.1h0M51.2 97.6h0M58.9 61.4h0M84.0 72.8h0M98.1 54.2h0M62.7 79.9h0M89.8 75.8h0M87.3 86.3h0M68.5 85.9h0M93.7 49.2h0M79.8 86.6h0M70.8 67.5h0M49.7 85.4h0M99.2 61.6h0M107.7 61.8h0M69.6 80.4h0M60.4 59.1h0M29.8 72.1h0M77.3 86.0h0M75.7 89.2h0M69.3 68.5h0M80.3 76.2h0M78.3 76.2h0M73.9 66.3h0M76.3 77.8h0M88.8 91.6h0M63.0 81.1h0M83.2 68.9h0M58.5 69.9h0M67.5 72.1h0M80.3 72.2h0M104.8 69.8h0M99.8 38.0h0M70.1 84.4h0M77.1 52.4h0M63.8 73.0h0M59.7 76.8h0M74.9 62.9h0M43.7 143.2h0M61.9 68.8h0M53.1 110.9h0M75.0 83.5h0M79.6 79.3h0M71.9 81.0h0M88.4 64.3h0M59.2 45.8h0M69.0 63.7h0M87.6 72.2h0M77.4 71.6h0M92.9 62.7h0M7.5 82.9h0M68.5 69.7h0M87.8 87.1h0M50.1 64.8h0M27.9 71.8h0M72.2 69.2h0M81.5 91.8h0M107.4 79.0h0M76.7 79.2h0M87.7 48.7h0M58.7 34.5h0M36.2 18.4h0M84.6 68.3h0M78.0 76.2h0M73.7 71.4h0M37.9 43.6h0" stroke="#e6e9f6" stroke-width="1.05" stroke-linecap="round" fill="none"/><path d="M75.4 86.4h0M72.4 84.0h0M76.5 82.9h0M72.5 89.6h0M88.1 74.0h0M58.8 69.6h0M60.0 71.4h0M59.2 81.5h0M104.5 75.8h0M76.4 77.6h0M68.8 81.3h0M67.8 62.8h0M74.8 73.4h0M70.1 69.5h0M62.7 53.5h0M58.6 64.4h0M79.6 79.9h0M83.7 66.0h0M67.7 82.0h0M64.8 69.5h0M92.2 35.8h0M55.6 87.6h0M67.4 80.8h0M94.1 75.1h0M72.2 82.9h0M86.2 65.7h0M66.9 62.5h0M32.6 40.9h0M91.6 150.9h0M86.4 53.5h0M66.6 89.2h0M91.3 97.7h0M78.9 56.5h0M69.8 71.0h0M78.0 70.9h0M107.9 79.0h0M66.3 87.0h0M77.1 75.6h0M63.0 67.0h0M65.6 76.0h0M67.5 85.2h0M70.0 79.8h0M59.3 73.9h0M60.4 97.1h0M68.3 72.1h0M66.6 69.0h0M80.3 79.6h0M60.1 80.1h0M78.0 83.5h0M69.2 90.7h0M67.5 83.4h0M76.8 74.5h0M93.9 80.6h0M86.0 70.5h0M76.5 77.6h0M81.4 87.6h0M60.2 84.3h0M58.7 104.2h0M49.8 82.3h0M72.6 82.4h0M80.4 62.1h0M69.1 70.9h0M100.0 90.1h0M77.5 93.3h0M57.3 143.9h0M84.8 74.7h0M95.1 94.9h0M79.9 40.1h0M24.6 75.4h0M79.3 68.7h0M72.4 79.4h0M63.7 86.4h0M84.4 86.1h0M73.4 69.1h0M65.5 77.8h0M84.0 86.3h0M63.9 87.8h0M88.6 125.9h0M57.0 93.6h0M64.6 64.8h0M68.8 91.2h0M65.7 76.4h0M58.0 61.8h0M67.6 76.8h0M74.8 72.8h0M55.9 10.5h0M45.8 64.8h0M78.8 75.4h0M87.7 86.7h0M72.8 87.2h0M97.0 70.4h0M69.7 90.3h0M68.1 28.4h0M64.7 87.9h0M34.6 98.1h0M85.0 86.9h0M70.8 74.9h0M53.1 92.3h0M69.3 76.3h0M83.9 62.2h0M89.5 73.2h0M72.7 73.7h0M90.8 93.6h0M71.3 84.7h0M76.8 70.6h0M79.9 78.3h0M35.4 88.0h0M48.1 74.9h0M69.0 78.2h0M73.0 73.2h0M69.7 75.2h0M68.0 87.7h0M5.5 86.4h0M81.5 84.2h0M89.2 54.7h0M46.7 4.9h0M78.4 73.5h0M78.8 69.4h0M84.2 119.4h0M63.5 66.2h0M77.9 64.2h0M73.4 70.3h0M93.4 67.2h0M53.7 70.8h0M19.7 58.6h0M30.6 108.2h0M63.2 57.9h0M72.3 57.5h0M81.3 85.2h0M67.0 66.0h0M82.6 77.1h0M62.7 72.9h0M93.5 50.8h0M84.5 68.4h0M115.3 72.1h0M52.7 81.3h0M36.2 33.1h0M70.3 70.2h0M77.1 78.6h0M109.5 67.3h0M72.7 57.7h0M89.9 66.9h0M100.5 83.3h0M71.8 75.7h0M71.9 68.6h0M49.1 67.4h0M67.8 73.5h0M88.9 78.6h0M70.4 68.0h0M74.9 99.9h0M82.5 75.8h0M93.0 83.4h0M94.8 75.3h0M85.9 77.6h0M93.5 63.3h0M118.4 98.9h0M56.1 58.1h0M76.2 70.4h0M67.6 109.4h0M61.0 41.9h0M74.5 76.3h0M46.5 118.5h0M64.9 58.2h0M86.1 63.7h0M79.5 74.6h0M68.8 37.2h0M54.0 72.9h0M78.4 34.5h0M117.1 77.3h0M73.8 74.4h0M78.9 74.8h0M49.6 85.0h0M95.3 65.7h0M60.0 59.9h0M76.7 34.1h0M93.1 70.2h0M64.9 83.8h0M67.9 80.2h0M61.3 68.7h0M52.3 77.2h0M65.9 78.5h0M88.2 76.1h0M61.2 76.9h0M66.0 89.6h0M82.9 55.0h0M88.1 50.9h0M93.3 90.6h0M23.1 84.7h0M79.2 74.2h0M71.9 105.5h0M72.5 78.9h0M83.3 60.8h0M57.2 80.0h0M82.2 69.3h0M67.7 83.1h0M63.3 95.2h0M83.9 66.5h0M42.3 104.2h0M39.1 34.1h0M55.7 59.4h0M65.1 89.8h0M70.4 66.3h0M81.2 69.1h0M102.9 33.4h0M66.1 78.0h0M60.1 61.8h0M105.1 56.6h0M79.6 79.0h0M65.9 71.6h0M68.5 65.8h0M82.6 68.2h0M59.1 69.5h0M96.6 80.2h0M88.4 69.1h0M87.8 78.1h0M73.2 81.7h0M66.6 49.6h0M70.5 93.0h0M64.7 90.9h0M142.0 33.7h0M61.8 82.8h0M114.8 87.8h0M88.9 62.0h0M119.6 128.9h0M46.2 96.5h0M90.4 53.6h0M82.6 73.3h0M79.6 86.2h0M95.2 71.9h0M74.8 55.0h0M104.5 86.5h0M90.1 127.1h0M74.2 68.3h0M76.2 79.5h0M62.9 80.8h0M93.6 76.3h0M53.8 81.2h0M78.1 64.5h0M88.9 79.3h0M56.0 74.0h0M94.5 73.8h0M71.0 56.2h0M90.1 81.1h0M72.8 67.8h0M126.6 49.0h0M61.8 71.3h0M64.1 90.8h0M68.2 63.5h0M77.2 63.1h0M86.3 92.6h0M74.3 73.1h0M75.3 72.2h0M74.4 85.1h0M53.0 111.9h0M67.6 74.1h0M85.2 81.1h0M57.7 71.9h0M77.2 61.1h0M75.7 47.1h0M76.5 86.0h0M79.7 102.9h0M67.9 57.4h0M76.7 74.5h0M65.3 66.2h0M65.5 76.1h0M62.4 33.5h0M61.8 92.0h0M86.1 65.8h0M75.5 86.5h0M52.5 79.8h0M52.3 85.6h0M67.8 74.0h0M95.1 85.8h0M70.7 79.2h0M50.3 86.7h0M56.5 69.8h0M88.9 70.1h0M89.9 54.5h0M78.9 57.8h0M73.3 72.1h0M119.6 86.6h0M78.2 74.9h0" stroke="#b8bdcf" stroke-width="1.05" stroke-linecap="round" fill="none"/><path d="M71.6 62.1h0M85.6 81.3h0M85.5 57.3h0M73.0 73.4h0M79.7 82.0h0M108.7 86.5h0M49.6 90.4h0M75.0 75.2h0M74.1 87.4h0M49.9 71.0h0M67.7 84.3h0M109.8 98.8h0M92.0 89.8h0M71.2 68.7h0M89.8 69.8h0M67.3 61.7h0M79.6 82.5h0M51.2 83.5h0M81.2 47.6h0M82.4 96.4h0M89.7 69.2h0M69.1 69.8h0M58.8 71.7h0M80.1 85.2h0M57.4 24.9h0M58.4 88.5h0M67.6 58.4h0M70.7 73.4h0M105.7 84.5h0M76.7 98.1h0M77.4 80.0h0M126.9 100.0h0M76.8 75.4h0M77.3 74.2h0M75.3 68.5h0M40.7 102.5h0M64.5 62.2h0M112.5 71.5h0M78.7 88.5h0M57.5 73.2h0M47.3 64.2h0M82.2 69.0h0M80.2 88.9h0M64.7 80.2h0M80.1 81.5h0M84.0 67.3h0M99.4 96.4h0M104.0 60.4h0M76.1 89.5h0M63.5 64.0h0M65.2 131.5h0M83.3 28.1h0M77.8 78.2h0M81.3 78.1h0M93.6 87.5h0M89.8 92.0h0M66.9 72.7h0M89.6 95.3h0M59.3 80.0h0M60.4 67.8h0M67.3 92.9h0M60.6 85.4h0M64.1 60.8h0M83.0 61.9h0M65.4 58.6h0M65.1 59.9h0M79.6 81.4h0M74.5 78.1h0M68.1 59.0h0M80.6 69.6h0M57.8 87.0h0M75.2 66.6h0M67.3 67.5h0M86.8 40.1h0M86.3 84.2h0M75.6 75.0h0M64.5 101.0h0M74.1 95.7h0M92.6 92.5h0M112.2 55.3h0M71.9 83.4h0M72.2 78.7h0M61.8 50.6h0M65.0 65.9h0M102.3 72.0h0M51.1 110.1h0M32.4 120.7h0M76.7 94.8h0M75.0 87.3h0M107.5 59.4h0M78.3 87.1h0M69.6 87.2h0M123.6 125.0h0M73.0 77.0h0M57.6 102.8h0M82.4 98.1h0M50.8 63.8h0M55.8 73.5h0M101.0 84.3h0M77.2 70.7h0M81.1 77.8h0M76.2 86.1h0M77.9 67.4h0M69.0 55.4h0M62.8 66.5h0M117.3 76.4h0M63.9 88.5h0M98.8 73.1h0M57.3 73.6h0M76.2 54.6h0M80.6 67.9h0M76.1 86.8h0M56.0 77.9h0M69.1 73.4h0M69.7 58.4h0M80.0 53.5h0M87.0 80.7h0M74.6 75.2h0M50.4 49.7h0M52.1 42.9h0M60.2 54.2h0M90.5 59.6h0M48.8 118.5h0M82.7 60.7h0M62.8 84.8h0M63.8 72.8h0M56.6 88.4h0M41.3 90.9h0M70.0 83.9h0M88.2 74.5h0M74.5 60.3h0M73.1 80.6h0M80.3 103.6h0M77.5 51.3h0M79.7 65.9h0M66.3 74.1h0M67.0 104.9h0M86.5 74.7h0M51.0 70.5h0M62.8 78.8h0M78.1 78.1h0M74.0 65.5h0M77.4 74.9h0M71.4 75.0h0M100.9 63.2h0M69.1 79.4h0M90.0 63.8h0M79.1 75.0h0M91.5 60.2h0M85.2 92.4h0M76.7 83.4h0M38.7 67.8h0M57.1 65.2h0M74.6 75.8h0M67.4 82.1h0M82.9 61.7h0M79.9 59.9h0M22.2 133.3h0M57.2 60.7h0M65.0 54.5h0M76.6 92.6h0M72.6 62.2h0M52.5 93.9h0M58.3 95.6h0M72.4 80.4h0M104.8 61.5h0M84.3 71.9h0M116.4 105.2h0M63.2 60.6h0M83.9 46.4h0M69.0 84.2h0M70.2 14.5h0M62.2 81.7h0M77.1 74.3h0M43.7 77.4h0M63.8 82.9h0M73.1 88.0h0M72.2 69.1h0M39.7 53.8h0M60.5 71.8h0M67.1 60.9h0M87.0 85.0h0M79.6 59.7h0M79.9 78.9h0M51.7 64.6h0M65.0 95.4h0M67.2 86.1h0M79.1 58.6h0M79.9 81.4h0M50.6 24.5h0M69.1 64.0h0M69.4 74.3h0M150.5 126.7h0M70.3 88.8h0M74.1 74.9h0M81.1 70.0h0M58.2 88.5h0M69.6 67.6h0M97.8 50.6h0M75.5 39.7h0M86.3 87.5h0M73.3 74.3h0M94.7 111.8h0M82.0 64.1h0M95.7 86.4h0M69.9 58.2h0M71.3 71.2h0M66.9 67.0h0M90.6 101.5h0M66.0 85.3h0M109.0 91.5h0M83.2 57.0h0M81.6 69.8h0M105.6 68.3h0M73.5 105.4h0M68.8 75.3h0M35.3 70.1h0M75.4 49.9h0M66.0 79.8h0M71.3 80.0h0M66.8 50.4h0M87.7 65.5h0M76.9 80.0h0M72.8 89.8h0M94.9 63.4h0M130.3 85.9h0M150.7 93.8h0M69.1 73.5h0M72.0 74.0h0M71.5 66.6h0M64.7 71.2h0M133.7 72.5h0M69.7 88.8h0M73.9 85.2h0M83.9 47.1h0M64.1 52.3h0M84.8 78.4h0M55.2 37.6h0M91.6 76.4h0M74.1 77.0h0M71.8 53.3h0M56.4 81.3h0M48.6 64.7h0M71.2 75.7h0M82.6 69.3h0M33.0 83.8h0M68.4 63.9h0M71.2 71.2h0M53.7 55.3h0M57.7 66.7h0M81.1 74.5h0M51.0 82.6h0M0.5 54.4h0M58.4 80.7h0M138.6 57.4h0M90.8 93.6h0M71.9 77.1h0M52.6 94.6h0M57.3 85.7h0M77.5 98.7h0M81.6 72.8h0M72.1 81.9h0M70.1 102.5h0M64.4 77.0h0M78.4 65.9h0M77.2 89.4h0M69.7 78.2h0M72.6 60.0h0M79.6 67.3h0M80.0 94.5h0M65.9 75.2h0M69.3 74.2h0M66.0 75.3h0M55.6 63.7h0M101.7 114.9h0M105.4 38.3h0M59.9 69.0h0M62.9 103.7h0M64.5 79.1h0M70.8 72.9h0M84.1 67.3h0M16.9 27.7h0M74.6 60.1h0M65.4 69.4h0" stroke="#c4c9dc" stroke-width="1.05" stroke-linecap="round" fill="none"/><path d="M57.5 94.8h0M19.1 80.5h0M127.0 102.3h0M83.2 9.8h0M143.1 50.0h0M26.2 129.3h0M141.4 100.0h0M2.5 41.3h0M149.3 78.3h0M133.0 143.3h0M53.1 4.7h0M103.9 148.9h0M58.9 54.5h0M41.5 76.2h0M101.0 74.8h0M7.7 86.2h0M35.9 85.7h0M140.8 134.4h0" stroke="#e6e9f6" stroke-width="1.2" stroke-linecap="round" fill="none"/><path d="M64.1 113.4h0M147.8 21.0h0M53.4 50.4h0M43.9 25.0h0M61.3 43.6h0M60.5 132.0h0M25.8 31.0h0M64.1 76.2h0M39.8 113.4h0" stroke="#d6dbee" stroke-width="1.2" stroke-linecap="round" fill="none"/><path d="M99.6 59.4h0M100.8 78.5h0M9.6 110.1h0M127.7 88.2h0M134.3 95.9h0M141.1 6.0h0M19.5 107.4h0M72.8 105.2h0M144.0 9.2h0M136.9 3.1h0M37.0 51.4h0M137.7 99.9h0M70.9 84.0h0M87.1 123.3h0M81.4 14.7h0M12.1 72.1h0" stroke="#c4c9dc" stroke-width="1.2" stroke-linecap="round" fill="none"/><path d="M108.9 15.2h0M94.4 58.1h0M83.5 103.9h0M92.3 106.2h0M97.4 87.5h0M8.0 77.4h0M98.7 44.6h0M53.8 76.2h0M129.2 55.5h0M140.2 114.0h0M121.6 5.6h0M37.2 24.8h0M38.6 28.3h0M7.0 128.3h0" stroke="#b8bdcf" stroke-width="1.2" stroke-linecap="round" fill="none"/><path d="M18.0 28.0h0M22.0 40.0h0M90.0 30.0h0" stroke="#bbb" stroke-width="1.4" stroke-linecap="round" fill="none"/><path d="M110.0 60.0h0M70.0 115.0h0" stroke="#ccc" stroke-width="1.4" stroke-linecap="round" fill="none"/><path d="M50.0 50.0h0" stroke="#ddd" stroke-width="1.4" stroke-linecap="round" fill="none"/><path d="M41.8 15.1h0M7.6 67.0h0M15.2 133.6h0M73.7 47.2h0M88.3 134.2h0M41.9 66.4h0M145.1 81.5h0M9.9 73.8h0M21.8 123.0h0" stroke="#ffffff" stroke-width="1.5" stroke-linecap="round" fill="none"/><path d="M146.7 34.8h0M81.3 81.3h0M35.1 125.6h0M59.5 85.9h0M23.4 6.7h0M25.8 17.8h0M8.9 149.0h0M95.0 100.0h0" stroke="#e8c890" stroke-width="1.5" stroke-linecap="round" fill="none"/><path d="M8.6 64.8h0M34.0 105.5h0M7.5 140.5h0M133.0 39.9h0M9.4 18.8h0M109.9 97.0h0M87.7 113.4h0M24.9 11.5h0" stroke="#dddddd" stroke-width="1.5" stroke-linecap="round" fill="none"/><path d="M143.0 4.0h0M14.0 33.0h0M124.0 146.0h0M60.0 25.0h0M31.0 80.0h0M58.0 120.0h0" stroke="#ccc" stroke-width="1.5" stroke-linecap="round" fill="none"/><path d="M130.0 119.0h0" stroke="#bbb" stroke-width="1.5" stroke-linecap="round" fill="none"/><path d="M40.0 100.0h0M100.0 45.0h0" stroke="#ddd" stroke-width="1.5" stroke-linecap="round" fill="none"/><path d="M24.0 119.0h0" stroke="#d8b070" stroke-width="1.6" stroke-linecap="round" fill="none"/><path d="M133.0 105.0h0" stroke="#ccc" stroke-width="1.6" stroke-linecap="round" fill="none"/><path d="M104.0 115.0h0" stroke="#e0c080" stroke-width="1.6" stroke-linecap="round" fill="none"/><path d="M5.0 60.0h0" stroke="#e8c890" stroke-width="1.6" stroke-linecap="round" fill="none"/><path d="M112.0 142.0h0" stroke="#ddd" stroke-width="1.6" stroke-linecap="round" fill="none"/><path d="M46.0 5.0h0" stroke="#ddd" stroke-width="1.7" stroke-linecap="round" fill="none"/><path d="M117.0 97.0h0" stroke="#e8c890" stroke-width="1.7" stroke-linecap="round" fill="none"/><path d="M145.5 129.0h0" stroke="#e8d0a0" stroke-width="1.8" stroke-linecap="round" fill="none"/><path d="M128.0 72.0h0" stroke="#eee" stroke-width="1.8" stroke-linecap="round" fill="none"/><path d="M7.0 54.0h0" stroke="#fff" stroke-width="2.0" stroke-linecap="round" fill="none"/><path d="M140.7 75.0h0" stroke="#f2d7a0" stroke-width="2.2" stroke-linecap="round" fill="none"/><path d="M20.0 122.0h0" stroke="#f0e0b0" stroke-width="2.2" stroke-linecap="round" fill="none"/><path d="M138.0 127.0h0" stroke="#fff2d0" stroke-width="2.3" stroke-linecap="round" fill="none"/><circle cx="74.2" cy="74.6" r="20" fill="url(#gk)"/></svg>
<div class="a" style="left:0px;top:560px;width:800px;height:1px;background:#d8d5c4;"></div>
<div class="a" style="left:0px;top:561px;width:800px;height:1px;background:#fbfaf6;"></div>
<div class="a" style="left:0px;top:562px;width:800px;height:15px;background:#ECE9D8;"></div>
<div class="t" style="left:8px;top:563.5px;">Form View</div>
<div class="t" style="left:728px;top:563.5px;letter-spacing:-0.4px">NUM</div>
<div class="a" style="left:595px;top:563px;width:1px;height:12px;background:#e0ddcd;"></div>
<div class="a" style="left:596px;top:563px;width:1px;height:12px;background:#f3f1e8;"></div>
<div class="a" style="left:629px;top:563px;width:1px;height:12px;background:#e0ddcd;"></div>
<div class="a" style="left:630px;top:563px;width:1px;height:12px;background:#f3f1e8;"></div>
<div class="a" style="left:658px;top:563px;width:1px;height:12px;background:#e0ddcd;"></div>
<div class="a" style="left:659px;top:563px;width:1px;height:12px;background:#f3f1e8;"></div>
<div class="a" style="left:674px;top:563px;width:1px;height:12px;background:#e0ddcd;"></div>
<div class="a" style="left:675px;top:563px;width:1px;height:12px;background:#f3f1e8;"></div>
<div class="a" style="left:699px;top:563px;width:1px;height:12px;background:#e0ddcd;"></div>
<div class="a" style="left:700px;top:563px;width:1px;height:12px;background:#f3f1e8;"></div>
<div class="a" style="left:750px;top:563px;width:1px;height:12px;background:#e0ddcd;"></div>
<div class="a" style="left:751px;top:563px;width:1px;height:12px;background:#f3f1e8;"></div>
<div class="a" style="left:775px;top:563px;width:1px;height:12px;background:#e0ddcd;"></div>
<div class="a" style="left:776px;top:563px;width:1px;height:12px;background:#f3f1e8;"></div>
<div class="a" style="left:0px;top:576.5px;width:800px;height:3.5px;background:linear-gradient(#3f7be8,#2a60d6);"></div>
<div class="a" style="left:0px;top:576.5px;width:104px;height:3.5px;background:linear-gradient(#5cb85c,#2f8f33);"></div>
<div class="a" style="left:700px;top:576.5px;width:100px;height:3.5px;background:linear-gradient(#35a9f0,#1590e4);"></div>
</div></body></html>
